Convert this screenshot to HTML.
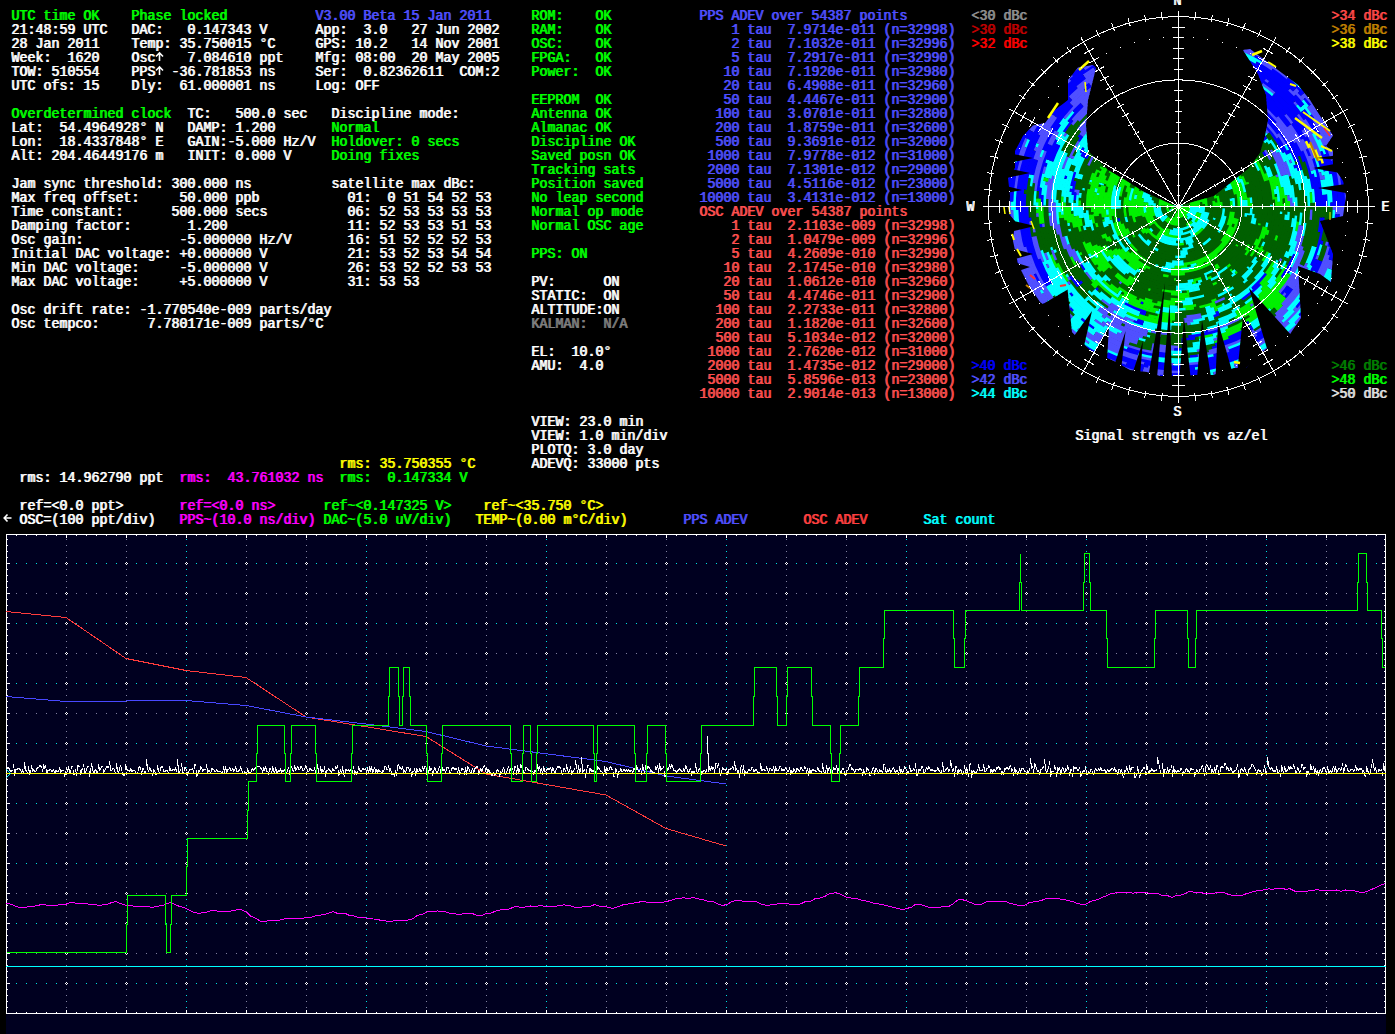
<!DOCTYPE html><html><head><meta charset="utf-8"><style>
html,body{margin:0;padding:0;background:#000;width:1395px;height:1034px;overflow:hidden}
.t{position:absolute;white-space:pre;font-family:"Liberation Mono",monospace;font-weight:normal;text-shadow:1px 0 0 currentColor;font-size:15px;line-height:14px;transform:scaleX(0.88889);transform-origin:0 0}
svg{position:absolute;left:0;top:0}
</style></head><body>
<svg width="1395" height="1034" viewBox="0 0 1395 1034" style="left:0;top:0">
<rect x="6" y="534" width="1380" height="500" fill="#000020"/>
<path fill="#8080a0" d="M16 593h1v1h-1zM26 593h1v1h-1zM36 593h1v1h-1zM46 593h1v1h-1zM56 593h1v1h-1zM76 593h1v1h-1zM86 593h1v1h-1zM96 593h1v1h-1zM106 593h1v1h-1zM116 593h1v1h-1zM136 593h1v1h-1zM146 593h1v1h-1zM156 593h1v1h-1zM166 593h1v1h-1zM176 593h1v1h-1zM196 593h1v1h-1zM206 593h1v1h-1zM216 593h1v1h-1zM226 593h1v1h-1zM236 593h1v1h-1zM256 593h1v1h-1zM266 593h1v1h-1zM276 593h1v1h-1zM286 593h1v1h-1zM296 593h1v1h-1zM316 593h1v1h-1zM326 593h1v1h-1zM336 593h1v1h-1zM346 593h1v1h-1zM356 593h1v1h-1zM376 593h1v1h-1zM386 593h1v1h-1zM396 593h1v1h-1zM406 593h1v1h-1zM416 593h1v1h-1zM436 593h1v1h-1zM446 593h1v1h-1zM456 593h1v1h-1zM466 593h1v1h-1zM476 593h1v1h-1zM496 593h1v1h-1zM506 593h1v1h-1zM516 593h1v1h-1zM526 593h1v1h-1zM536 593h1v1h-1zM556 593h1v1h-1zM566 593h1v1h-1zM576 593h1v1h-1zM586 593h1v1h-1zM596 593h1v1h-1zM616 593h1v1h-1zM626 593h1v1h-1zM636 593h1v1h-1zM646 593h1v1h-1zM656 593h1v1h-1zM676 593h1v1h-1zM686 593h1v1h-1zM696 593h1v1h-1zM706 593h1v1h-1zM716 593h1v1h-1zM736 593h1v1h-1zM746 593h1v1h-1zM756 593h1v1h-1zM766 593h1v1h-1zM776 593h1v1h-1zM796 593h1v1h-1zM806 593h1v1h-1zM816 593h1v1h-1zM826 593h1v1h-1zM836 593h1v1h-1zM856 593h1v1h-1zM866 593h1v1h-1zM876 593h1v1h-1zM886 593h1v1h-1zM896 593h1v1h-1zM916 593h1v1h-1zM926 593h1v1h-1zM936 593h1v1h-1zM946 593h1v1h-1zM956 593h1v1h-1zM976 593h1v1h-1zM986 593h1v1h-1zM996 593h1v1h-1zM1006 593h1v1h-1zM1016 593h1v1h-1zM1036 593h1v1h-1zM1046 593h1v1h-1zM1056 593h1v1h-1zM1066 593h1v1h-1zM1076 593h1v1h-1zM1096 593h1v1h-1zM1106 593h1v1h-1zM1116 593h1v1h-1zM1126 593h1v1h-1zM1136 593h1v1h-1zM1156 593h1v1h-1zM1166 593h1v1h-1zM1176 593h1v1h-1zM1186 593h1v1h-1zM1196 593h1v1h-1zM1216 593h1v1h-1zM1226 593h1v1h-1zM1236 593h1v1h-1zM1246 593h1v1h-1zM1256 593h1v1h-1zM1276 593h1v1h-1zM1286 593h1v1h-1zM1296 593h1v1h-1zM1306 593h1v1h-1zM1316 593h1v1h-1zM1336 593h1v1h-1zM1346 593h1v1h-1zM1356 593h1v1h-1zM1366 593h1v1h-1zM1376 593h1v1h-1zM16 653h1v1h-1zM26 653h1v1h-1zM36 653h1v1h-1zM46 653h1v1h-1zM56 653h1v1h-1zM76 653h1v1h-1zM86 653h1v1h-1zM96 653h1v1h-1zM106 653h1v1h-1zM116 653h1v1h-1zM136 653h1v1h-1zM146 653h1v1h-1zM156 653h1v1h-1zM166 653h1v1h-1zM176 653h1v1h-1zM196 653h1v1h-1zM206 653h1v1h-1zM216 653h1v1h-1zM226 653h1v1h-1zM236 653h1v1h-1zM256 653h1v1h-1zM266 653h1v1h-1zM276 653h1v1h-1zM286 653h1v1h-1zM296 653h1v1h-1zM316 653h1v1h-1zM326 653h1v1h-1zM336 653h1v1h-1zM346 653h1v1h-1zM356 653h1v1h-1zM376 653h1v1h-1zM386 653h1v1h-1zM396 653h1v1h-1zM406 653h1v1h-1zM416 653h1v1h-1zM436 653h1v1h-1zM446 653h1v1h-1zM456 653h1v1h-1zM466 653h1v1h-1zM476 653h1v1h-1zM496 653h1v1h-1zM506 653h1v1h-1zM516 653h1v1h-1zM526 653h1v1h-1zM536 653h1v1h-1zM556 653h1v1h-1zM566 653h1v1h-1zM576 653h1v1h-1zM586 653h1v1h-1zM596 653h1v1h-1zM616 653h1v1h-1zM626 653h1v1h-1zM636 653h1v1h-1zM646 653h1v1h-1zM656 653h1v1h-1zM676 653h1v1h-1zM686 653h1v1h-1zM696 653h1v1h-1zM706 653h1v1h-1zM716 653h1v1h-1zM736 653h1v1h-1zM746 653h1v1h-1zM756 653h1v1h-1zM766 653h1v1h-1zM776 653h1v1h-1zM796 653h1v1h-1zM806 653h1v1h-1zM816 653h1v1h-1zM826 653h1v1h-1zM836 653h1v1h-1zM856 653h1v1h-1zM866 653h1v1h-1zM876 653h1v1h-1zM886 653h1v1h-1zM896 653h1v1h-1zM916 653h1v1h-1zM926 653h1v1h-1zM936 653h1v1h-1zM946 653h1v1h-1zM956 653h1v1h-1zM976 653h1v1h-1zM986 653h1v1h-1zM996 653h1v1h-1zM1006 653h1v1h-1zM1016 653h1v1h-1zM1036 653h1v1h-1zM1046 653h1v1h-1zM1056 653h1v1h-1zM1066 653h1v1h-1zM1076 653h1v1h-1zM1096 653h1v1h-1zM1106 653h1v1h-1zM1116 653h1v1h-1zM1126 653h1v1h-1zM1136 653h1v1h-1zM1156 653h1v1h-1zM1166 653h1v1h-1zM1176 653h1v1h-1zM1186 653h1v1h-1zM1196 653h1v1h-1zM1216 653h1v1h-1zM1226 653h1v1h-1zM1236 653h1v1h-1zM1246 653h1v1h-1zM1256 653h1v1h-1zM1276 653h1v1h-1zM1286 653h1v1h-1zM1296 653h1v1h-1zM1306 653h1v1h-1zM1316 653h1v1h-1zM1336 653h1v1h-1zM1346 653h1v1h-1zM1356 653h1v1h-1zM1366 653h1v1h-1zM1376 653h1v1h-1zM16 713h1v1h-1zM26 713h1v1h-1zM36 713h1v1h-1zM46 713h1v1h-1zM56 713h1v1h-1zM76 713h1v1h-1zM86 713h1v1h-1zM96 713h1v1h-1zM106 713h1v1h-1zM116 713h1v1h-1zM136 713h1v1h-1zM146 713h1v1h-1zM156 713h1v1h-1zM166 713h1v1h-1zM176 713h1v1h-1zM196 713h1v1h-1zM206 713h1v1h-1zM216 713h1v1h-1zM226 713h1v1h-1zM236 713h1v1h-1zM256 713h1v1h-1zM266 713h1v1h-1zM276 713h1v1h-1zM286 713h1v1h-1zM296 713h1v1h-1zM316 713h1v1h-1zM326 713h1v1h-1zM336 713h1v1h-1zM346 713h1v1h-1zM356 713h1v1h-1zM376 713h1v1h-1zM386 713h1v1h-1zM396 713h1v1h-1zM406 713h1v1h-1zM416 713h1v1h-1zM436 713h1v1h-1zM446 713h1v1h-1zM456 713h1v1h-1zM466 713h1v1h-1zM476 713h1v1h-1zM496 713h1v1h-1zM506 713h1v1h-1zM516 713h1v1h-1zM526 713h1v1h-1zM536 713h1v1h-1zM556 713h1v1h-1zM566 713h1v1h-1zM576 713h1v1h-1zM586 713h1v1h-1zM596 713h1v1h-1zM616 713h1v1h-1zM626 713h1v1h-1zM636 713h1v1h-1zM646 713h1v1h-1zM656 713h1v1h-1zM676 713h1v1h-1zM686 713h1v1h-1zM696 713h1v1h-1zM706 713h1v1h-1zM716 713h1v1h-1zM736 713h1v1h-1zM746 713h1v1h-1zM756 713h1v1h-1zM766 713h1v1h-1zM776 713h1v1h-1zM796 713h1v1h-1zM806 713h1v1h-1zM816 713h1v1h-1zM826 713h1v1h-1zM836 713h1v1h-1zM856 713h1v1h-1zM866 713h1v1h-1zM876 713h1v1h-1zM886 713h1v1h-1zM896 713h1v1h-1zM916 713h1v1h-1zM926 713h1v1h-1zM936 713h1v1h-1zM946 713h1v1h-1zM956 713h1v1h-1zM976 713h1v1h-1zM986 713h1v1h-1zM996 713h1v1h-1zM1006 713h1v1h-1zM1016 713h1v1h-1zM1036 713h1v1h-1zM1046 713h1v1h-1zM1056 713h1v1h-1zM1066 713h1v1h-1zM1076 713h1v1h-1zM1096 713h1v1h-1zM1106 713h1v1h-1zM1116 713h1v1h-1zM1126 713h1v1h-1zM1136 713h1v1h-1zM1156 713h1v1h-1zM1166 713h1v1h-1zM1176 713h1v1h-1zM1186 713h1v1h-1zM1196 713h1v1h-1zM1216 713h1v1h-1zM1226 713h1v1h-1zM1236 713h1v1h-1zM1246 713h1v1h-1zM1256 713h1v1h-1zM1276 713h1v1h-1zM1286 713h1v1h-1zM1296 713h1v1h-1zM1306 713h1v1h-1zM1316 713h1v1h-1zM1336 713h1v1h-1zM1346 713h1v1h-1zM1356 713h1v1h-1zM1366 713h1v1h-1zM1376 713h1v1h-1zM16 773h1v1h-1zM26 773h1v1h-1zM36 773h1v1h-1zM46 773h1v1h-1zM56 773h1v1h-1zM76 773h1v1h-1zM86 773h1v1h-1zM96 773h1v1h-1zM106 773h1v1h-1zM116 773h1v1h-1zM136 773h1v1h-1zM146 773h1v1h-1zM156 773h1v1h-1zM166 773h1v1h-1zM176 773h1v1h-1zM196 773h1v1h-1zM206 773h1v1h-1zM216 773h1v1h-1zM226 773h1v1h-1zM236 773h1v1h-1zM256 773h1v1h-1zM266 773h1v1h-1zM276 773h1v1h-1zM286 773h1v1h-1zM296 773h1v1h-1zM316 773h1v1h-1zM326 773h1v1h-1zM336 773h1v1h-1zM346 773h1v1h-1zM356 773h1v1h-1zM376 773h1v1h-1zM386 773h1v1h-1zM396 773h1v1h-1zM406 773h1v1h-1zM416 773h1v1h-1zM436 773h1v1h-1zM446 773h1v1h-1zM456 773h1v1h-1zM466 773h1v1h-1zM476 773h1v1h-1zM496 773h1v1h-1zM506 773h1v1h-1zM516 773h1v1h-1zM526 773h1v1h-1zM536 773h1v1h-1zM556 773h1v1h-1zM566 773h1v1h-1zM576 773h1v1h-1zM586 773h1v1h-1zM596 773h1v1h-1zM616 773h1v1h-1zM626 773h1v1h-1zM636 773h1v1h-1zM646 773h1v1h-1zM656 773h1v1h-1zM676 773h1v1h-1zM686 773h1v1h-1zM696 773h1v1h-1zM706 773h1v1h-1zM716 773h1v1h-1zM736 773h1v1h-1zM746 773h1v1h-1zM756 773h1v1h-1zM766 773h1v1h-1zM776 773h1v1h-1zM796 773h1v1h-1zM806 773h1v1h-1zM816 773h1v1h-1zM826 773h1v1h-1zM836 773h1v1h-1zM856 773h1v1h-1zM866 773h1v1h-1zM876 773h1v1h-1zM886 773h1v1h-1zM896 773h1v1h-1zM916 773h1v1h-1zM926 773h1v1h-1zM936 773h1v1h-1zM946 773h1v1h-1zM956 773h1v1h-1zM976 773h1v1h-1zM986 773h1v1h-1zM996 773h1v1h-1zM1006 773h1v1h-1zM1016 773h1v1h-1zM1036 773h1v1h-1zM1046 773h1v1h-1zM1056 773h1v1h-1zM1066 773h1v1h-1zM1076 773h1v1h-1zM1096 773h1v1h-1zM1106 773h1v1h-1zM1116 773h1v1h-1zM1126 773h1v1h-1zM1136 773h1v1h-1zM1156 773h1v1h-1zM1166 773h1v1h-1zM1176 773h1v1h-1zM1186 773h1v1h-1zM1196 773h1v1h-1zM1216 773h1v1h-1zM1226 773h1v1h-1zM1236 773h1v1h-1zM1246 773h1v1h-1zM1256 773h1v1h-1zM1276 773h1v1h-1zM1286 773h1v1h-1zM1296 773h1v1h-1zM1306 773h1v1h-1zM1316 773h1v1h-1zM1336 773h1v1h-1zM1346 773h1v1h-1zM1356 773h1v1h-1zM1366 773h1v1h-1zM1376 773h1v1h-1zM16 833h1v1h-1zM26 833h1v1h-1zM36 833h1v1h-1zM46 833h1v1h-1zM56 833h1v1h-1zM76 833h1v1h-1zM86 833h1v1h-1zM96 833h1v1h-1zM106 833h1v1h-1zM116 833h1v1h-1zM136 833h1v1h-1zM146 833h1v1h-1zM156 833h1v1h-1zM166 833h1v1h-1zM176 833h1v1h-1zM196 833h1v1h-1zM206 833h1v1h-1zM216 833h1v1h-1zM226 833h1v1h-1zM236 833h1v1h-1zM256 833h1v1h-1zM266 833h1v1h-1zM276 833h1v1h-1zM286 833h1v1h-1zM296 833h1v1h-1zM316 833h1v1h-1zM326 833h1v1h-1zM336 833h1v1h-1zM346 833h1v1h-1zM356 833h1v1h-1zM376 833h1v1h-1zM386 833h1v1h-1zM396 833h1v1h-1zM406 833h1v1h-1zM416 833h1v1h-1zM436 833h1v1h-1zM446 833h1v1h-1zM456 833h1v1h-1zM466 833h1v1h-1zM476 833h1v1h-1zM496 833h1v1h-1zM506 833h1v1h-1zM516 833h1v1h-1zM526 833h1v1h-1zM536 833h1v1h-1zM556 833h1v1h-1zM566 833h1v1h-1zM576 833h1v1h-1zM586 833h1v1h-1zM596 833h1v1h-1zM616 833h1v1h-1zM626 833h1v1h-1zM636 833h1v1h-1zM646 833h1v1h-1zM656 833h1v1h-1zM676 833h1v1h-1zM686 833h1v1h-1zM696 833h1v1h-1zM706 833h1v1h-1zM716 833h1v1h-1zM736 833h1v1h-1zM746 833h1v1h-1zM756 833h1v1h-1zM766 833h1v1h-1zM776 833h1v1h-1zM796 833h1v1h-1zM806 833h1v1h-1zM816 833h1v1h-1zM826 833h1v1h-1zM836 833h1v1h-1zM856 833h1v1h-1zM866 833h1v1h-1zM876 833h1v1h-1zM886 833h1v1h-1zM896 833h1v1h-1zM916 833h1v1h-1zM926 833h1v1h-1zM936 833h1v1h-1zM946 833h1v1h-1zM956 833h1v1h-1zM976 833h1v1h-1zM986 833h1v1h-1zM996 833h1v1h-1zM1006 833h1v1h-1zM1016 833h1v1h-1zM1036 833h1v1h-1zM1046 833h1v1h-1zM1056 833h1v1h-1zM1066 833h1v1h-1zM1076 833h1v1h-1zM1096 833h1v1h-1zM1106 833h1v1h-1zM1116 833h1v1h-1zM1126 833h1v1h-1zM1136 833h1v1h-1zM1156 833h1v1h-1zM1166 833h1v1h-1zM1176 833h1v1h-1zM1186 833h1v1h-1zM1196 833h1v1h-1zM1216 833h1v1h-1zM1226 833h1v1h-1zM1236 833h1v1h-1zM1246 833h1v1h-1zM1256 833h1v1h-1zM1276 833h1v1h-1zM1286 833h1v1h-1zM1296 833h1v1h-1zM1306 833h1v1h-1zM1316 833h1v1h-1zM1336 833h1v1h-1zM1346 833h1v1h-1zM1356 833h1v1h-1zM1366 833h1v1h-1zM1376 833h1v1h-1zM16 893h1v1h-1zM26 893h1v1h-1zM36 893h1v1h-1zM46 893h1v1h-1zM56 893h1v1h-1zM76 893h1v1h-1zM86 893h1v1h-1zM96 893h1v1h-1zM106 893h1v1h-1zM116 893h1v1h-1zM136 893h1v1h-1zM146 893h1v1h-1zM156 893h1v1h-1zM166 893h1v1h-1zM176 893h1v1h-1zM196 893h1v1h-1zM206 893h1v1h-1zM216 893h1v1h-1zM226 893h1v1h-1zM236 893h1v1h-1zM256 893h1v1h-1zM266 893h1v1h-1zM276 893h1v1h-1zM286 893h1v1h-1zM296 893h1v1h-1zM316 893h1v1h-1zM326 893h1v1h-1zM336 893h1v1h-1zM346 893h1v1h-1zM356 893h1v1h-1zM376 893h1v1h-1zM386 893h1v1h-1zM396 893h1v1h-1zM406 893h1v1h-1zM416 893h1v1h-1zM436 893h1v1h-1zM446 893h1v1h-1zM456 893h1v1h-1zM466 893h1v1h-1zM476 893h1v1h-1zM496 893h1v1h-1zM506 893h1v1h-1zM516 893h1v1h-1zM526 893h1v1h-1zM536 893h1v1h-1zM556 893h1v1h-1zM566 893h1v1h-1zM576 893h1v1h-1zM586 893h1v1h-1zM596 893h1v1h-1zM616 893h1v1h-1zM626 893h1v1h-1zM636 893h1v1h-1zM646 893h1v1h-1zM656 893h1v1h-1zM676 893h1v1h-1zM686 893h1v1h-1zM696 893h1v1h-1zM706 893h1v1h-1zM716 893h1v1h-1zM736 893h1v1h-1zM746 893h1v1h-1zM756 893h1v1h-1zM766 893h1v1h-1zM776 893h1v1h-1zM796 893h1v1h-1zM806 893h1v1h-1zM816 893h1v1h-1zM826 893h1v1h-1zM836 893h1v1h-1zM856 893h1v1h-1zM866 893h1v1h-1zM876 893h1v1h-1zM886 893h1v1h-1zM896 893h1v1h-1zM916 893h1v1h-1zM926 893h1v1h-1zM936 893h1v1h-1zM946 893h1v1h-1zM956 893h1v1h-1zM976 893h1v1h-1zM986 893h1v1h-1zM996 893h1v1h-1zM1006 893h1v1h-1zM1016 893h1v1h-1zM1036 893h1v1h-1zM1046 893h1v1h-1zM1056 893h1v1h-1zM1066 893h1v1h-1zM1076 893h1v1h-1zM1096 893h1v1h-1zM1106 893h1v1h-1zM1116 893h1v1h-1zM1126 893h1v1h-1zM1136 893h1v1h-1zM1156 893h1v1h-1zM1166 893h1v1h-1zM1176 893h1v1h-1zM1186 893h1v1h-1zM1196 893h1v1h-1zM1216 893h1v1h-1zM1226 893h1v1h-1zM1236 893h1v1h-1zM1246 893h1v1h-1zM1256 893h1v1h-1zM1276 893h1v1h-1zM1286 893h1v1h-1zM1296 893h1v1h-1zM1306 893h1v1h-1zM1316 893h1v1h-1zM1336 893h1v1h-1zM1346 893h1v1h-1zM1356 893h1v1h-1zM1366 893h1v1h-1zM1376 893h1v1h-1zM16 953h1v1h-1zM26 953h1v1h-1zM36 953h1v1h-1zM46 953h1v1h-1zM56 953h1v1h-1zM76 953h1v1h-1zM86 953h1v1h-1zM96 953h1v1h-1zM106 953h1v1h-1zM116 953h1v1h-1zM136 953h1v1h-1zM146 953h1v1h-1zM156 953h1v1h-1zM166 953h1v1h-1zM176 953h1v1h-1zM196 953h1v1h-1zM206 953h1v1h-1zM216 953h1v1h-1zM226 953h1v1h-1zM236 953h1v1h-1zM256 953h1v1h-1zM266 953h1v1h-1zM276 953h1v1h-1zM286 953h1v1h-1zM296 953h1v1h-1zM316 953h1v1h-1zM326 953h1v1h-1zM336 953h1v1h-1zM346 953h1v1h-1zM356 953h1v1h-1zM376 953h1v1h-1zM386 953h1v1h-1zM396 953h1v1h-1zM406 953h1v1h-1zM416 953h1v1h-1zM436 953h1v1h-1zM446 953h1v1h-1zM456 953h1v1h-1zM466 953h1v1h-1zM476 953h1v1h-1zM496 953h1v1h-1zM506 953h1v1h-1zM516 953h1v1h-1zM526 953h1v1h-1zM536 953h1v1h-1zM556 953h1v1h-1zM566 953h1v1h-1zM576 953h1v1h-1zM586 953h1v1h-1zM596 953h1v1h-1zM616 953h1v1h-1zM626 953h1v1h-1zM636 953h1v1h-1zM646 953h1v1h-1zM656 953h1v1h-1zM676 953h1v1h-1zM686 953h1v1h-1zM696 953h1v1h-1zM706 953h1v1h-1zM716 953h1v1h-1zM736 953h1v1h-1zM746 953h1v1h-1zM756 953h1v1h-1zM766 953h1v1h-1zM776 953h1v1h-1zM796 953h1v1h-1zM806 953h1v1h-1zM816 953h1v1h-1zM826 953h1v1h-1zM836 953h1v1h-1zM856 953h1v1h-1zM866 953h1v1h-1zM876 953h1v1h-1zM886 953h1v1h-1zM896 953h1v1h-1zM916 953h1v1h-1zM926 953h1v1h-1zM936 953h1v1h-1zM946 953h1v1h-1zM956 953h1v1h-1zM976 953h1v1h-1zM986 953h1v1h-1zM996 953h1v1h-1zM1006 953h1v1h-1zM1016 953h1v1h-1zM1036 953h1v1h-1zM1046 953h1v1h-1zM1056 953h1v1h-1zM1066 953h1v1h-1zM1076 953h1v1h-1zM1096 953h1v1h-1zM1106 953h1v1h-1zM1116 953h1v1h-1zM1126 953h1v1h-1zM1136 953h1v1h-1zM1156 953h1v1h-1zM1166 953h1v1h-1zM1176 953h1v1h-1zM1186 953h1v1h-1zM1196 953h1v1h-1zM1216 953h1v1h-1zM1226 953h1v1h-1zM1236 953h1v1h-1zM1246 953h1v1h-1zM1256 953h1v1h-1zM1276 953h1v1h-1zM1286 953h1v1h-1zM1296 953h1v1h-1zM1306 953h1v1h-1zM1316 953h1v1h-1zM1336 953h1v1h-1zM1346 953h1v1h-1zM1356 953h1v1h-1zM1366 953h1v1h-1zM1376 953h1v1h-1zM66 539h1v1h-1zM66 545h1v1h-1zM66 551h1v1h-1zM66 557h1v1h-1zM66 569h1v1h-1zM66 575h1v1h-1zM66 581h1v1h-1zM66 587h1v1h-1zM66 599h1v1h-1zM66 605h1v1h-1zM66 611h1v1h-1zM66 617h1v1h-1zM66 629h1v1h-1zM66 635h1v1h-1zM66 641h1v1h-1zM66 647h1v1h-1zM66 659h1v1h-1zM66 665h1v1h-1zM66 671h1v1h-1zM66 677h1v1h-1zM66 689h1v1h-1zM66 695h1v1h-1zM66 701h1v1h-1zM66 707h1v1h-1zM66 719h1v1h-1zM66 725h1v1h-1zM66 731h1v1h-1zM66 737h1v1h-1zM66 749h1v1h-1zM66 755h1v1h-1zM66 761h1v1h-1zM66 767h1v1h-1zM66 779h1v1h-1zM66 785h1v1h-1zM66 791h1v1h-1zM66 797h1v1h-1zM66 809h1v1h-1zM66 815h1v1h-1zM66 821h1v1h-1zM66 827h1v1h-1zM66 839h1v1h-1zM66 845h1v1h-1zM66 851h1v1h-1zM66 857h1v1h-1zM66 869h1v1h-1zM66 875h1v1h-1zM66 881h1v1h-1zM66 887h1v1h-1zM66 899h1v1h-1zM66 905h1v1h-1zM66 911h1v1h-1zM66 917h1v1h-1zM66 929h1v1h-1zM66 935h1v1h-1zM66 941h1v1h-1zM66 947h1v1h-1zM66 959h1v1h-1zM66 965h1v1h-1zM66 971h1v1h-1zM66 977h1v1h-1zM66 989h1v1h-1zM66 995h1v1h-1zM66 1001h1v1h-1zM66 1007h1v1h-1zM126 539h1v1h-1zM126 545h1v1h-1zM126 551h1v1h-1zM126 557h1v1h-1zM126 569h1v1h-1zM126 575h1v1h-1zM126 581h1v1h-1zM126 587h1v1h-1zM126 599h1v1h-1zM126 605h1v1h-1zM126 611h1v1h-1zM126 617h1v1h-1zM126 629h1v1h-1zM126 635h1v1h-1zM126 641h1v1h-1zM126 647h1v1h-1zM126 659h1v1h-1zM126 665h1v1h-1zM126 671h1v1h-1zM126 677h1v1h-1zM126 689h1v1h-1zM126 695h1v1h-1zM126 701h1v1h-1zM126 707h1v1h-1zM126 719h1v1h-1zM126 725h1v1h-1zM126 731h1v1h-1zM126 737h1v1h-1zM126 749h1v1h-1zM126 755h1v1h-1zM126 761h1v1h-1zM126 767h1v1h-1zM126 779h1v1h-1zM126 785h1v1h-1zM126 791h1v1h-1zM126 797h1v1h-1zM126 809h1v1h-1zM126 815h1v1h-1zM126 821h1v1h-1zM126 827h1v1h-1zM126 839h1v1h-1zM126 845h1v1h-1zM126 851h1v1h-1zM126 857h1v1h-1zM126 869h1v1h-1zM126 875h1v1h-1zM126 881h1v1h-1zM126 887h1v1h-1zM126 899h1v1h-1zM126 905h1v1h-1zM126 911h1v1h-1zM126 917h1v1h-1zM126 929h1v1h-1zM126 935h1v1h-1zM126 941h1v1h-1zM126 947h1v1h-1zM126 959h1v1h-1zM126 965h1v1h-1zM126 971h1v1h-1zM126 977h1v1h-1zM126 989h1v1h-1zM126 995h1v1h-1zM126 1001h1v1h-1zM126 1007h1v1h-1zM246 539h1v1h-1zM246 545h1v1h-1zM246 551h1v1h-1zM246 557h1v1h-1zM246 569h1v1h-1zM246 575h1v1h-1zM246 581h1v1h-1zM246 587h1v1h-1zM246 599h1v1h-1zM246 605h1v1h-1zM246 611h1v1h-1zM246 617h1v1h-1zM246 629h1v1h-1zM246 635h1v1h-1zM246 641h1v1h-1zM246 647h1v1h-1zM246 659h1v1h-1zM246 665h1v1h-1zM246 671h1v1h-1zM246 677h1v1h-1zM246 689h1v1h-1zM246 695h1v1h-1zM246 701h1v1h-1zM246 707h1v1h-1zM246 719h1v1h-1zM246 725h1v1h-1zM246 731h1v1h-1zM246 737h1v1h-1zM246 749h1v1h-1zM246 755h1v1h-1zM246 761h1v1h-1zM246 767h1v1h-1zM246 779h1v1h-1zM246 785h1v1h-1zM246 791h1v1h-1zM246 797h1v1h-1zM246 809h1v1h-1zM246 815h1v1h-1zM246 821h1v1h-1zM246 827h1v1h-1zM246 839h1v1h-1zM246 845h1v1h-1zM246 851h1v1h-1zM246 857h1v1h-1zM246 869h1v1h-1zM246 875h1v1h-1zM246 881h1v1h-1zM246 887h1v1h-1zM246 899h1v1h-1zM246 905h1v1h-1zM246 911h1v1h-1zM246 917h1v1h-1zM246 929h1v1h-1zM246 935h1v1h-1zM246 941h1v1h-1zM246 947h1v1h-1zM246 959h1v1h-1zM246 965h1v1h-1zM246 971h1v1h-1zM246 977h1v1h-1zM246 989h1v1h-1zM246 995h1v1h-1zM246 1001h1v1h-1zM246 1007h1v1h-1zM306 539h1v1h-1zM306 545h1v1h-1zM306 551h1v1h-1zM306 557h1v1h-1zM306 569h1v1h-1zM306 575h1v1h-1zM306 581h1v1h-1zM306 587h1v1h-1zM306 599h1v1h-1zM306 605h1v1h-1zM306 611h1v1h-1zM306 617h1v1h-1zM306 629h1v1h-1zM306 635h1v1h-1zM306 641h1v1h-1zM306 647h1v1h-1zM306 659h1v1h-1zM306 665h1v1h-1zM306 671h1v1h-1zM306 677h1v1h-1zM306 689h1v1h-1zM306 695h1v1h-1zM306 701h1v1h-1zM306 707h1v1h-1zM306 719h1v1h-1zM306 725h1v1h-1zM306 731h1v1h-1zM306 737h1v1h-1zM306 749h1v1h-1zM306 755h1v1h-1zM306 761h1v1h-1zM306 767h1v1h-1zM306 779h1v1h-1zM306 785h1v1h-1zM306 791h1v1h-1zM306 797h1v1h-1zM306 809h1v1h-1zM306 815h1v1h-1zM306 821h1v1h-1zM306 827h1v1h-1zM306 839h1v1h-1zM306 845h1v1h-1zM306 851h1v1h-1zM306 857h1v1h-1zM306 869h1v1h-1zM306 875h1v1h-1zM306 881h1v1h-1zM306 887h1v1h-1zM306 899h1v1h-1zM306 905h1v1h-1zM306 911h1v1h-1zM306 917h1v1h-1zM306 929h1v1h-1zM306 935h1v1h-1zM306 941h1v1h-1zM306 947h1v1h-1zM306 959h1v1h-1zM306 965h1v1h-1zM306 971h1v1h-1zM306 977h1v1h-1zM306 989h1v1h-1zM306 995h1v1h-1zM306 1001h1v1h-1zM306 1007h1v1h-1zM426 539h1v1h-1zM426 545h1v1h-1zM426 551h1v1h-1zM426 557h1v1h-1zM426 569h1v1h-1zM426 575h1v1h-1zM426 581h1v1h-1zM426 587h1v1h-1zM426 599h1v1h-1zM426 605h1v1h-1zM426 611h1v1h-1zM426 617h1v1h-1zM426 629h1v1h-1zM426 635h1v1h-1zM426 641h1v1h-1zM426 647h1v1h-1zM426 659h1v1h-1zM426 665h1v1h-1zM426 671h1v1h-1zM426 677h1v1h-1zM426 689h1v1h-1zM426 695h1v1h-1zM426 701h1v1h-1zM426 707h1v1h-1zM426 719h1v1h-1zM426 725h1v1h-1zM426 731h1v1h-1zM426 737h1v1h-1zM426 749h1v1h-1zM426 755h1v1h-1zM426 761h1v1h-1zM426 767h1v1h-1zM426 779h1v1h-1zM426 785h1v1h-1zM426 791h1v1h-1zM426 797h1v1h-1zM426 809h1v1h-1zM426 815h1v1h-1zM426 821h1v1h-1zM426 827h1v1h-1zM426 839h1v1h-1zM426 845h1v1h-1zM426 851h1v1h-1zM426 857h1v1h-1zM426 869h1v1h-1zM426 875h1v1h-1zM426 881h1v1h-1zM426 887h1v1h-1zM426 899h1v1h-1zM426 905h1v1h-1zM426 911h1v1h-1zM426 917h1v1h-1zM426 929h1v1h-1zM426 935h1v1h-1zM426 941h1v1h-1zM426 947h1v1h-1zM426 959h1v1h-1zM426 965h1v1h-1zM426 971h1v1h-1zM426 977h1v1h-1zM426 989h1v1h-1zM426 995h1v1h-1zM426 1001h1v1h-1zM426 1007h1v1h-1zM486 539h1v1h-1zM486 545h1v1h-1zM486 551h1v1h-1zM486 557h1v1h-1zM486 569h1v1h-1zM486 575h1v1h-1zM486 581h1v1h-1zM486 587h1v1h-1zM486 599h1v1h-1zM486 605h1v1h-1zM486 611h1v1h-1zM486 617h1v1h-1zM486 629h1v1h-1zM486 635h1v1h-1zM486 641h1v1h-1zM486 647h1v1h-1zM486 659h1v1h-1zM486 665h1v1h-1zM486 671h1v1h-1zM486 677h1v1h-1zM486 689h1v1h-1zM486 695h1v1h-1zM486 701h1v1h-1zM486 707h1v1h-1zM486 719h1v1h-1zM486 725h1v1h-1zM486 731h1v1h-1zM486 737h1v1h-1zM486 749h1v1h-1zM486 755h1v1h-1zM486 761h1v1h-1zM486 767h1v1h-1zM486 779h1v1h-1zM486 785h1v1h-1zM486 791h1v1h-1zM486 797h1v1h-1zM486 809h1v1h-1zM486 815h1v1h-1zM486 821h1v1h-1zM486 827h1v1h-1zM486 839h1v1h-1zM486 845h1v1h-1zM486 851h1v1h-1zM486 857h1v1h-1zM486 869h1v1h-1zM486 875h1v1h-1zM486 881h1v1h-1zM486 887h1v1h-1zM486 899h1v1h-1zM486 905h1v1h-1zM486 911h1v1h-1zM486 917h1v1h-1zM486 929h1v1h-1zM486 935h1v1h-1zM486 941h1v1h-1zM486 947h1v1h-1zM486 959h1v1h-1zM486 965h1v1h-1zM486 971h1v1h-1zM486 977h1v1h-1zM486 989h1v1h-1zM486 995h1v1h-1zM486 1001h1v1h-1zM486 1007h1v1h-1zM606 539h1v1h-1zM606 545h1v1h-1zM606 551h1v1h-1zM606 557h1v1h-1zM606 569h1v1h-1zM606 575h1v1h-1zM606 581h1v1h-1zM606 587h1v1h-1zM606 599h1v1h-1zM606 605h1v1h-1zM606 611h1v1h-1zM606 617h1v1h-1zM606 629h1v1h-1zM606 635h1v1h-1zM606 641h1v1h-1zM606 647h1v1h-1zM606 659h1v1h-1zM606 665h1v1h-1zM606 671h1v1h-1zM606 677h1v1h-1zM606 689h1v1h-1zM606 695h1v1h-1zM606 701h1v1h-1zM606 707h1v1h-1zM606 719h1v1h-1zM606 725h1v1h-1zM606 731h1v1h-1zM606 737h1v1h-1zM606 749h1v1h-1zM606 755h1v1h-1zM606 761h1v1h-1zM606 767h1v1h-1zM606 779h1v1h-1zM606 785h1v1h-1zM606 791h1v1h-1zM606 797h1v1h-1zM606 809h1v1h-1zM606 815h1v1h-1zM606 821h1v1h-1zM606 827h1v1h-1zM606 839h1v1h-1zM606 845h1v1h-1zM606 851h1v1h-1zM606 857h1v1h-1zM606 869h1v1h-1zM606 875h1v1h-1zM606 881h1v1h-1zM606 887h1v1h-1zM606 899h1v1h-1zM606 905h1v1h-1zM606 911h1v1h-1zM606 917h1v1h-1zM606 929h1v1h-1zM606 935h1v1h-1zM606 941h1v1h-1zM606 947h1v1h-1zM606 959h1v1h-1zM606 965h1v1h-1zM606 971h1v1h-1zM606 977h1v1h-1zM606 989h1v1h-1zM606 995h1v1h-1zM606 1001h1v1h-1zM606 1007h1v1h-1zM666 539h1v1h-1zM666 545h1v1h-1zM666 551h1v1h-1zM666 557h1v1h-1zM666 569h1v1h-1zM666 575h1v1h-1zM666 581h1v1h-1zM666 587h1v1h-1zM666 599h1v1h-1zM666 605h1v1h-1zM666 611h1v1h-1zM666 617h1v1h-1zM666 629h1v1h-1zM666 635h1v1h-1zM666 641h1v1h-1zM666 647h1v1h-1zM666 659h1v1h-1zM666 665h1v1h-1zM666 671h1v1h-1zM666 677h1v1h-1zM666 689h1v1h-1zM666 695h1v1h-1zM666 701h1v1h-1zM666 707h1v1h-1zM666 719h1v1h-1zM666 725h1v1h-1zM666 731h1v1h-1zM666 737h1v1h-1zM666 749h1v1h-1zM666 755h1v1h-1zM666 761h1v1h-1zM666 767h1v1h-1zM666 779h1v1h-1zM666 785h1v1h-1zM666 791h1v1h-1zM666 797h1v1h-1zM666 809h1v1h-1zM666 815h1v1h-1zM666 821h1v1h-1zM666 827h1v1h-1zM666 839h1v1h-1zM666 845h1v1h-1zM666 851h1v1h-1zM666 857h1v1h-1zM666 869h1v1h-1zM666 875h1v1h-1zM666 881h1v1h-1zM666 887h1v1h-1zM666 899h1v1h-1zM666 905h1v1h-1zM666 911h1v1h-1zM666 917h1v1h-1zM666 929h1v1h-1zM666 935h1v1h-1zM666 941h1v1h-1zM666 947h1v1h-1zM666 959h1v1h-1zM666 965h1v1h-1zM666 971h1v1h-1zM666 977h1v1h-1zM666 989h1v1h-1zM666 995h1v1h-1zM666 1001h1v1h-1zM666 1007h1v1h-1zM786 539h1v1h-1zM786 545h1v1h-1zM786 551h1v1h-1zM786 557h1v1h-1zM786 569h1v1h-1zM786 575h1v1h-1zM786 581h1v1h-1zM786 587h1v1h-1zM786 599h1v1h-1zM786 605h1v1h-1zM786 611h1v1h-1zM786 617h1v1h-1zM786 629h1v1h-1zM786 635h1v1h-1zM786 641h1v1h-1zM786 647h1v1h-1zM786 659h1v1h-1zM786 665h1v1h-1zM786 671h1v1h-1zM786 677h1v1h-1zM786 689h1v1h-1zM786 695h1v1h-1zM786 701h1v1h-1zM786 707h1v1h-1zM786 719h1v1h-1zM786 725h1v1h-1zM786 731h1v1h-1zM786 737h1v1h-1zM786 749h1v1h-1zM786 755h1v1h-1zM786 761h1v1h-1zM786 767h1v1h-1zM786 779h1v1h-1zM786 785h1v1h-1zM786 791h1v1h-1zM786 797h1v1h-1zM786 809h1v1h-1zM786 815h1v1h-1zM786 821h1v1h-1zM786 827h1v1h-1zM786 839h1v1h-1zM786 845h1v1h-1zM786 851h1v1h-1zM786 857h1v1h-1zM786 869h1v1h-1zM786 875h1v1h-1zM786 881h1v1h-1zM786 887h1v1h-1zM786 899h1v1h-1zM786 905h1v1h-1zM786 911h1v1h-1zM786 917h1v1h-1zM786 929h1v1h-1zM786 935h1v1h-1zM786 941h1v1h-1zM786 947h1v1h-1zM786 959h1v1h-1zM786 965h1v1h-1zM786 971h1v1h-1zM786 977h1v1h-1zM786 989h1v1h-1zM786 995h1v1h-1zM786 1001h1v1h-1zM786 1007h1v1h-1zM846 539h1v1h-1zM846 545h1v1h-1zM846 551h1v1h-1zM846 557h1v1h-1zM846 569h1v1h-1zM846 575h1v1h-1zM846 581h1v1h-1zM846 587h1v1h-1zM846 599h1v1h-1zM846 605h1v1h-1zM846 611h1v1h-1zM846 617h1v1h-1zM846 629h1v1h-1zM846 635h1v1h-1zM846 641h1v1h-1zM846 647h1v1h-1zM846 659h1v1h-1zM846 665h1v1h-1zM846 671h1v1h-1zM846 677h1v1h-1zM846 689h1v1h-1zM846 695h1v1h-1zM846 701h1v1h-1zM846 707h1v1h-1zM846 719h1v1h-1zM846 725h1v1h-1zM846 731h1v1h-1zM846 737h1v1h-1zM846 749h1v1h-1zM846 755h1v1h-1zM846 761h1v1h-1zM846 767h1v1h-1zM846 779h1v1h-1zM846 785h1v1h-1zM846 791h1v1h-1zM846 797h1v1h-1zM846 809h1v1h-1zM846 815h1v1h-1zM846 821h1v1h-1zM846 827h1v1h-1zM846 839h1v1h-1zM846 845h1v1h-1zM846 851h1v1h-1zM846 857h1v1h-1zM846 869h1v1h-1zM846 875h1v1h-1zM846 881h1v1h-1zM846 887h1v1h-1zM846 899h1v1h-1zM846 905h1v1h-1zM846 911h1v1h-1zM846 917h1v1h-1zM846 929h1v1h-1zM846 935h1v1h-1zM846 941h1v1h-1zM846 947h1v1h-1zM846 959h1v1h-1zM846 965h1v1h-1zM846 971h1v1h-1zM846 977h1v1h-1zM846 989h1v1h-1zM846 995h1v1h-1zM846 1001h1v1h-1zM846 1007h1v1h-1zM966 539h1v1h-1zM966 545h1v1h-1zM966 551h1v1h-1zM966 557h1v1h-1zM966 569h1v1h-1zM966 575h1v1h-1zM966 581h1v1h-1zM966 587h1v1h-1zM966 599h1v1h-1zM966 605h1v1h-1zM966 611h1v1h-1zM966 617h1v1h-1zM966 629h1v1h-1zM966 635h1v1h-1zM966 641h1v1h-1zM966 647h1v1h-1zM966 659h1v1h-1zM966 665h1v1h-1zM966 671h1v1h-1zM966 677h1v1h-1zM966 689h1v1h-1zM966 695h1v1h-1zM966 701h1v1h-1zM966 707h1v1h-1zM966 719h1v1h-1zM966 725h1v1h-1zM966 731h1v1h-1zM966 737h1v1h-1zM966 749h1v1h-1zM966 755h1v1h-1zM966 761h1v1h-1zM966 767h1v1h-1zM966 779h1v1h-1zM966 785h1v1h-1zM966 791h1v1h-1zM966 797h1v1h-1zM966 809h1v1h-1zM966 815h1v1h-1zM966 821h1v1h-1zM966 827h1v1h-1zM966 839h1v1h-1zM966 845h1v1h-1zM966 851h1v1h-1zM966 857h1v1h-1zM966 869h1v1h-1zM966 875h1v1h-1zM966 881h1v1h-1zM966 887h1v1h-1zM966 899h1v1h-1zM966 905h1v1h-1zM966 911h1v1h-1zM966 917h1v1h-1zM966 929h1v1h-1zM966 935h1v1h-1zM966 941h1v1h-1zM966 947h1v1h-1zM966 959h1v1h-1zM966 965h1v1h-1zM966 971h1v1h-1zM966 977h1v1h-1zM966 989h1v1h-1zM966 995h1v1h-1zM966 1001h1v1h-1zM966 1007h1v1h-1zM1026 539h1v1h-1zM1026 545h1v1h-1zM1026 551h1v1h-1zM1026 557h1v1h-1zM1026 569h1v1h-1zM1026 575h1v1h-1zM1026 581h1v1h-1zM1026 587h1v1h-1zM1026 599h1v1h-1zM1026 605h1v1h-1zM1026 611h1v1h-1zM1026 617h1v1h-1zM1026 629h1v1h-1zM1026 635h1v1h-1zM1026 641h1v1h-1zM1026 647h1v1h-1zM1026 659h1v1h-1zM1026 665h1v1h-1zM1026 671h1v1h-1zM1026 677h1v1h-1zM1026 689h1v1h-1zM1026 695h1v1h-1zM1026 701h1v1h-1zM1026 707h1v1h-1zM1026 719h1v1h-1zM1026 725h1v1h-1zM1026 731h1v1h-1zM1026 737h1v1h-1zM1026 749h1v1h-1zM1026 755h1v1h-1zM1026 761h1v1h-1zM1026 767h1v1h-1zM1026 779h1v1h-1zM1026 785h1v1h-1zM1026 791h1v1h-1zM1026 797h1v1h-1zM1026 809h1v1h-1zM1026 815h1v1h-1zM1026 821h1v1h-1zM1026 827h1v1h-1zM1026 839h1v1h-1zM1026 845h1v1h-1zM1026 851h1v1h-1zM1026 857h1v1h-1zM1026 869h1v1h-1zM1026 875h1v1h-1zM1026 881h1v1h-1zM1026 887h1v1h-1zM1026 899h1v1h-1zM1026 905h1v1h-1zM1026 911h1v1h-1zM1026 917h1v1h-1zM1026 929h1v1h-1zM1026 935h1v1h-1zM1026 941h1v1h-1zM1026 947h1v1h-1zM1026 959h1v1h-1zM1026 965h1v1h-1zM1026 971h1v1h-1zM1026 977h1v1h-1zM1026 989h1v1h-1zM1026 995h1v1h-1zM1026 1001h1v1h-1zM1026 1007h1v1h-1zM1146 539h1v1h-1zM1146 545h1v1h-1zM1146 551h1v1h-1zM1146 557h1v1h-1zM1146 569h1v1h-1zM1146 575h1v1h-1zM1146 581h1v1h-1zM1146 587h1v1h-1zM1146 599h1v1h-1zM1146 605h1v1h-1zM1146 611h1v1h-1zM1146 617h1v1h-1zM1146 629h1v1h-1zM1146 635h1v1h-1zM1146 641h1v1h-1zM1146 647h1v1h-1zM1146 659h1v1h-1zM1146 665h1v1h-1zM1146 671h1v1h-1zM1146 677h1v1h-1zM1146 689h1v1h-1zM1146 695h1v1h-1zM1146 701h1v1h-1zM1146 707h1v1h-1zM1146 719h1v1h-1zM1146 725h1v1h-1zM1146 731h1v1h-1zM1146 737h1v1h-1zM1146 749h1v1h-1zM1146 755h1v1h-1zM1146 761h1v1h-1zM1146 767h1v1h-1zM1146 779h1v1h-1zM1146 785h1v1h-1zM1146 791h1v1h-1zM1146 797h1v1h-1zM1146 809h1v1h-1zM1146 815h1v1h-1zM1146 821h1v1h-1zM1146 827h1v1h-1zM1146 839h1v1h-1zM1146 845h1v1h-1zM1146 851h1v1h-1zM1146 857h1v1h-1zM1146 869h1v1h-1zM1146 875h1v1h-1zM1146 881h1v1h-1zM1146 887h1v1h-1zM1146 899h1v1h-1zM1146 905h1v1h-1zM1146 911h1v1h-1zM1146 917h1v1h-1zM1146 929h1v1h-1zM1146 935h1v1h-1zM1146 941h1v1h-1zM1146 947h1v1h-1zM1146 959h1v1h-1zM1146 965h1v1h-1zM1146 971h1v1h-1zM1146 977h1v1h-1zM1146 989h1v1h-1zM1146 995h1v1h-1zM1146 1001h1v1h-1zM1146 1007h1v1h-1zM1206 539h1v1h-1zM1206 545h1v1h-1zM1206 551h1v1h-1zM1206 557h1v1h-1zM1206 569h1v1h-1zM1206 575h1v1h-1zM1206 581h1v1h-1zM1206 587h1v1h-1zM1206 599h1v1h-1zM1206 605h1v1h-1zM1206 611h1v1h-1zM1206 617h1v1h-1zM1206 629h1v1h-1zM1206 635h1v1h-1zM1206 641h1v1h-1zM1206 647h1v1h-1zM1206 659h1v1h-1zM1206 665h1v1h-1zM1206 671h1v1h-1zM1206 677h1v1h-1zM1206 689h1v1h-1zM1206 695h1v1h-1zM1206 701h1v1h-1zM1206 707h1v1h-1zM1206 719h1v1h-1zM1206 725h1v1h-1zM1206 731h1v1h-1zM1206 737h1v1h-1zM1206 749h1v1h-1zM1206 755h1v1h-1zM1206 761h1v1h-1zM1206 767h1v1h-1zM1206 779h1v1h-1zM1206 785h1v1h-1zM1206 791h1v1h-1zM1206 797h1v1h-1zM1206 809h1v1h-1zM1206 815h1v1h-1zM1206 821h1v1h-1zM1206 827h1v1h-1zM1206 839h1v1h-1zM1206 845h1v1h-1zM1206 851h1v1h-1zM1206 857h1v1h-1zM1206 869h1v1h-1zM1206 875h1v1h-1zM1206 881h1v1h-1zM1206 887h1v1h-1zM1206 899h1v1h-1zM1206 905h1v1h-1zM1206 911h1v1h-1zM1206 917h1v1h-1zM1206 929h1v1h-1zM1206 935h1v1h-1zM1206 941h1v1h-1zM1206 947h1v1h-1zM1206 959h1v1h-1zM1206 965h1v1h-1zM1206 971h1v1h-1zM1206 977h1v1h-1zM1206 989h1v1h-1zM1206 995h1v1h-1zM1206 1001h1v1h-1zM1206 1007h1v1h-1zM1326 539h1v1h-1zM1326 545h1v1h-1zM1326 551h1v1h-1zM1326 557h1v1h-1zM1326 569h1v1h-1zM1326 575h1v1h-1zM1326 581h1v1h-1zM1326 587h1v1h-1zM1326 599h1v1h-1zM1326 605h1v1h-1zM1326 611h1v1h-1zM1326 617h1v1h-1zM1326 629h1v1h-1zM1326 635h1v1h-1zM1326 641h1v1h-1zM1326 647h1v1h-1zM1326 659h1v1h-1zM1326 665h1v1h-1zM1326 671h1v1h-1zM1326 677h1v1h-1zM1326 689h1v1h-1zM1326 695h1v1h-1zM1326 701h1v1h-1zM1326 707h1v1h-1zM1326 719h1v1h-1zM1326 725h1v1h-1zM1326 731h1v1h-1zM1326 737h1v1h-1zM1326 749h1v1h-1zM1326 755h1v1h-1zM1326 761h1v1h-1zM1326 767h1v1h-1zM1326 779h1v1h-1zM1326 785h1v1h-1zM1326 791h1v1h-1zM1326 797h1v1h-1zM1326 809h1v1h-1zM1326 815h1v1h-1zM1326 821h1v1h-1zM1326 827h1v1h-1zM1326 839h1v1h-1zM1326 845h1v1h-1zM1326 851h1v1h-1zM1326 857h1v1h-1zM1326 869h1v1h-1zM1326 875h1v1h-1zM1326 881h1v1h-1zM1326 887h1v1h-1zM1326 899h1v1h-1zM1326 905h1v1h-1zM1326 911h1v1h-1zM1326 917h1v1h-1zM1326 929h1v1h-1zM1326 935h1v1h-1zM1326 941h1v1h-1zM1326 947h1v1h-1zM1326 959h1v1h-1zM1326 965h1v1h-1zM1326 971h1v1h-1zM1326 977h1v1h-1zM1326 989h1v1h-1zM1326 995h1v1h-1zM1326 1001h1v1h-1zM1326 1007h1v1h-1z"/>
<path fill="#00e0e0" d="M16 563h1v1h-1zM26 563h1v1h-1zM36 563h1v1h-1zM46 563h1v1h-1zM56 563h1v1h-1zM76 563h1v1h-1zM86 563h1v1h-1zM96 563h1v1h-1zM106 563h1v1h-1zM116 563h1v1h-1zM136 563h1v1h-1zM146 563h1v1h-1zM156 563h1v1h-1zM166 563h1v1h-1zM176 563h1v1h-1zM196 563h1v1h-1zM206 563h1v1h-1zM216 563h1v1h-1zM226 563h1v1h-1zM236 563h1v1h-1zM256 563h1v1h-1zM266 563h1v1h-1zM276 563h1v1h-1zM286 563h1v1h-1zM296 563h1v1h-1zM316 563h1v1h-1zM326 563h1v1h-1zM336 563h1v1h-1zM346 563h1v1h-1zM356 563h1v1h-1zM376 563h1v1h-1zM386 563h1v1h-1zM396 563h1v1h-1zM406 563h1v1h-1zM416 563h1v1h-1zM436 563h1v1h-1zM446 563h1v1h-1zM456 563h1v1h-1zM466 563h1v1h-1zM476 563h1v1h-1zM496 563h1v1h-1zM506 563h1v1h-1zM516 563h1v1h-1zM526 563h1v1h-1zM536 563h1v1h-1zM556 563h1v1h-1zM566 563h1v1h-1zM576 563h1v1h-1zM586 563h1v1h-1zM596 563h1v1h-1zM616 563h1v1h-1zM626 563h1v1h-1zM636 563h1v1h-1zM646 563h1v1h-1zM656 563h1v1h-1zM676 563h1v1h-1zM686 563h1v1h-1zM696 563h1v1h-1zM706 563h1v1h-1zM716 563h1v1h-1zM736 563h1v1h-1zM746 563h1v1h-1zM756 563h1v1h-1zM766 563h1v1h-1zM776 563h1v1h-1zM796 563h1v1h-1zM806 563h1v1h-1zM816 563h1v1h-1zM826 563h1v1h-1zM836 563h1v1h-1zM856 563h1v1h-1zM866 563h1v1h-1zM876 563h1v1h-1zM886 563h1v1h-1zM896 563h1v1h-1zM916 563h1v1h-1zM926 563h1v1h-1zM936 563h1v1h-1zM946 563h1v1h-1zM956 563h1v1h-1zM976 563h1v1h-1zM986 563h1v1h-1zM996 563h1v1h-1zM1006 563h1v1h-1zM1016 563h1v1h-1zM1036 563h1v1h-1zM1046 563h1v1h-1zM1056 563h1v1h-1zM1066 563h1v1h-1zM1076 563h1v1h-1zM1096 563h1v1h-1zM1106 563h1v1h-1zM1116 563h1v1h-1zM1126 563h1v1h-1zM1136 563h1v1h-1zM1156 563h1v1h-1zM1166 563h1v1h-1zM1176 563h1v1h-1zM1186 563h1v1h-1zM1196 563h1v1h-1zM1216 563h1v1h-1zM1226 563h1v1h-1zM1236 563h1v1h-1zM1246 563h1v1h-1zM1256 563h1v1h-1zM1276 563h1v1h-1zM1286 563h1v1h-1zM1296 563h1v1h-1zM1306 563h1v1h-1zM1316 563h1v1h-1zM1336 563h1v1h-1zM1346 563h1v1h-1zM1356 563h1v1h-1zM1366 563h1v1h-1zM1376 563h1v1h-1zM16 623h1v1h-1zM26 623h1v1h-1zM36 623h1v1h-1zM46 623h1v1h-1zM56 623h1v1h-1zM76 623h1v1h-1zM86 623h1v1h-1zM96 623h1v1h-1zM106 623h1v1h-1zM116 623h1v1h-1zM136 623h1v1h-1zM146 623h1v1h-1zM156 623h1v1h-1zM166 623h1v1h-1zM176 623h1v1h-1zM196 623h1v1h-1zM206 623h1v1h-1zM216 623h1v1h-1zM226 623h1v1h-1zM236 623h1v1h-1zM256 623h1v1h-1zM266 623h1v1h-1zM276 623h1v1h-1zM286 623h1v1h-1zM296 623h1v1h-1zM316 623h1v1h-1zM326 623h1v1h-1zM336 623h1v1h-1zM346 623h1v1h-1zM356 623h1v1h-1zM376 623h1v1h-1zM386 623h1v1h-1zM396 623h1v1h-1zM406 623h1v1h-1zM416 623h1v1h-1zM436 623h1v1h-1zM446 623h1v1h-1zM456 623h1v1h-1zM466 623h1v1h-1zM476 623h1v1h-1zM496 623h1v1h-1zM506 623h1v1h-1zM516 623h1v1h-1zM526 623h1v1h-1zM536 623h1v1h-1zM556 623h1v1h-1zM566 623h1v1h-1zM576 623h1v1h-1zM586 623h1v1h-1zM596 623h1v1h-1zM616 623h1v1h-1zM626 623h1v1h-1zM636 623h1v1h-1zM646 623h1v1h-1zM656 623h1v1h-1zM676 623h1v1h-1zM686 623h1v1h-1zM696 623h1v1h-1zM706 623h1v1h-1zM716 623h1v1h-1zM736 623h1v1h-1zM746 623h1v1h-1zM756 623h1v1h-1zM766 623h1v1h-1zM776 623h1v1h-1zM796 623h1v1h-1zM806 623h1v1h-1zM816 623h1v1h-1zM826 623h1v1h-1zM836 623h1v1h-1zM856 623h1v1h-1zM866 623h1v1h-1zM876 623h1v1h-1zM886 623h1v1h-1zM896 623h1v1h-1zM916 623h1v1h-1zM926 623h1v1h-1zM936 623h1v1h-1zM946 623h1v1h-1zM956 623h1v1h-1zM976 623h1v1h-1zM986 623h1v1h-1zM996 623h1v1h-1zM1006 623h1v1h-1zM1016 623h1v1h-1zM1036 623h1v1h-1zM1046 623h1v1h-1zM1056 623h1v1h-1zM1066 623h1v1h-1zM1076 623h1v1h-1zM1096 623h1v1h-1zM1106 623h1v1h-1zM1116 623h1v1h-1zM1126 623h1v1h-1zM1136 623h1v1h-1zM1156 623h1v1h-1zM1166 623h1v1h-1zM1176 623h1v1h-1zM1186 623h1v1h-1zM1196 623h1v1h-1zM1216 623h1v1h-1zM1226 623h1v1h-1zM1236 623h1v1h-1zM1246 623h1v1h-1zM1256 623h1v1h-1zM1276 623h1v1h-1zM1286 623h1v1h-1zM1296 623h1v1h-1zM1306 623h1v1h-1zM1316 623h1v1h-1zM1336 623h1v1h-1zM1346 623h1v1h-1zM1356 623h1v1h-1zM1366 623h1v1h-1zM1376 623h1v1h-1zM16 683h1v1h-1zM26 683h1v1h-1zM36 683h1v1h-1zM46 683h1v1h-1zM56 683h1v1h-1zM76 683h1v1h-1zM86 683h1v1h-1zM96 683h1v1h-1zM106 683h1v1h-1zM116 683h1v1h-1zM136 683h1v1h-1zM146 683h1v1h-1zM156 683h1v1h-1zM166 683h1v1h-1zM176 683h1v1h-1zM196 683h1v1h-1zM206 683h1v1h-1zM216 683h1v1h-1zM226 683h1v1h-1zM236 683h1v1h-1zM256 683h1v1h-1zM266 683h1v1h-1zM276 683h1v1h-1zM286 683h1v1h-1zM296 683h1v1h-1zM316 683h1v1h-1zM326 683h1v1h-1zM336 683h1v1h-1zM346 683h1v1h-1zM356 683h1v1h-1zM376 683h1v1h-1zM386 683h1v1h-1zM396 683h1v1h-1zM406 683h1v1h-1zM416 683h1v1h-1zM436 683h1v1h-1zM446 683h1v1h-1zM456 683h1v1h-1zM466 683h1v1h-1zM476 683h1v1h-1zM496 683h1v1h-1zM506 683h1v1h-1zM516 683h1v1h-1zM526 683h1v1h-1zM536 683h1v1h-1zM556 683h1v1h-1zM566 683h1v1h-1zM576 683h1v1h-1zM586 683h1v1h-1zM596 683h1v1h-1zM616 683h1v1h-1zM626 683h1v1h-1zM636 683h1v1h-1zM646 683h1v1h-1zM656 683h1v1h-1zM676 683h1v1h-1zM686 683h1v1h-1zM696 683h1v1h-1zM706 683h1v1h-1zM716 683h1v1h-1zM736 683h1v1h-1zM746 683h1v1h-1zM756 683h1v1h-1zM766 683h1v1h-1zM776 683h1v1h-1zM796 683h1v1h-1zM806 683h1v1h-1zM816 683h1v1h-1zM826 683h1v1h-1zM836 683h1v1h-1zM856 683h1v1h-1zM866 683h1v1h-1zM876 683h1v1h-1zM886 683h1v1h-1zM896 683h1v1h-1zM916 683h1v1h-1zM926 683h1v1h-1zM936 683h1v1h-1zM946 683h1v1h-1zM956 683h1v1h-1zM976 683h1v1h-1zM986 683h1v1h-1zM996 683h1v1h-1zM1006 683h1v1h-1zM1016 683h1v1h-1zM1036 683h1v1h-1zM1046 683h1v1h-1zM1056 683h1v1h-1zM1066 683h1v1h-1zM1076 683h1v1h-1zM1096 683h1v1h-1zM1106 683h1v1h-1zM1116 683h1v1h-1zM1126 683h1v1h-1zM1136 683h1v1h-1zM1156 683h1v1h-1zM1166 683h1v1h-1zM1176 683h1v1h-1zM1186 683h1v1h-1zM1196 683h1v1h-1zM1216 683h1v1h-1zM1226 683h1v1h-1zM1236 683h1v1h-1zM1246 683h1v1h-1zM1256 683h1v1h-1zM1276 683h1v1h-1zM1286 683h1v1h-1zM1296 683h1v1h-1zM1306 683h1v1h-1zM1316 683h1v1h-1zM1336 683h1v1h-1zM1346 683h1v1h-1zM1356 683h1v1h-1zM1366 683h1v1h-1zM1376 683h1v1h-1zM16 743h1v1h-1zM26 743h1v1h-1zM36 743h1v1h-1zM46 743h1v1h-1zM56 743h1v1h-1zM76 743h1v1h-1zM86 743h1v1h-1zM96 743h1v1h-1zM106 743h1v1h-1zM116 743h1v1h-1zM136 743h1v1h-1zM146 743h1v1h-1zM156 743h1v1h-1zM166 743h1v1h-1zM176 743h1v1h-1zM196 743h1v1h-1zM206 743h1v1h-1zM216 743h1v1h-1zM226 743h1v1h-1zM236 743h1v1h-1zM256 743h1v1h-1zM266 743h1v1h-1zM276 743h1v1h-1zM286 743h1v1h-1zM296 743h1v1h-1zM316 743h1v1h-1zM326 743h1v1h-1zM336 743h1v1h-1zM346 743h1v1h-1zM356 743h1v1h-1zM376 743h1v1h-1zM386 743h1v1h-1zM396 743h1v1h-1zM406 743h1v1h-1zM416 743h1v1h-1zM436 743h1v1h-1zM446 743h1v1h-1zM456 743h1v1h-1zM466 743h1v1h-1zM476 743h1v1h-1zM496 743h1v1h-1zM506 743h1v1h-1zM516 743h1v1h-1zM526 743h1v1h-1zM536 743h1v1h-1zM556 743h1v1h-1zM566 743h1v1h-1zM576 743h1v1h-1zM586 743h1v1h-1zM596 743h1v1h-1zM616 743h1v1h-1zM626 743h1v1h-1zM636 743h1v1h-1zM646 743h1v1h-1zM656 743h1v1h-1zM676 743h1v1h-1zM686 743h1v1h-1zM696 743h1v1h-1zM706 743h1v1h-1zM716 743h1v1h-1zM736 743h1v1h-1zM746 743h1v1h-1zM756 743h1v1h-1zM766 743h1v1h-1zM776 743h1v1h-1zM796 743h1v1h-1zM806 743h1v1h-1zM816 743h1v1h-1zM826 743h1v1h-1zM836 743h1v1h-1zM856 743h1v1h-1zM866 743h1v1h-1zM876 743h1v1h-1zM886 743h1v1h-1zM896 743h1v1h-1zM916 743h1v1h-1zM926 743h1v1h-1zM936 743h1v1h-1zM946 743h1v1h-1zM956 743h1v1h-1zM976 743h1v1h-1zM986 743h1v1h-1zM996 743h1v1h-1zM1006 743h1v1h-1zM1016 743h1v1h-1zM1036 743h1v1h-1zM1046 743h1v1h-1zM1056 743h1v1h-1zM1066 743h1v1h-1zM1076 743h1v1h-1zM1096 743h1v1h-1zM1106 743h1v1h-1zM1116 743h1v1h-1zM1126 743h1v1h-1zM1136 743h1v1h-1zM1156 743h1v1h-1zM1166 743h1v1h-1zM1176 743h1v1h-1zM1186 743h1v1h-1zM1196 743h1v1h-1zM1216 743h1v1h-1zM1226 743h1v1h-1zM1236 743h1v1h-1zM1246 743h1v1h-1zM1256 743h1v1h-1zM1276 743h1v1h-1zM1286 743h1v1h-1zM1296 743h1v1h-1zM1306 743h1v1h-1zM1316 743h1v1h-1zM1336 743h1v1h-1zM1346 743h1v1h-1zM1356 743h1v1h-1zM1366 743h1v1h-1zM1376 743h1v1h-1zM16 803h1v1h-1zM26 803h1v1h-1zM36 803h1v1h-1zM46 803h1v1h-1zM56 803h1v1h-1zM76 803h1v1h-1zM86 803h1v1h-1zM96 803h1v1h-1zM106 803h1v1h-1zM116 803h1v1h-1zM136 803h1v1h-1zM146 803h1v1h-1zM156 803h1v1h-1zM166 803h1v1h-1zM176 803h1v1h-1zM196 803h1v1h-1zM206 803h1v1h-1zM216 803h1v1h-1zM226 803h1v1h-1zM236 803h1v1h-1zM256 803h1v1h-1zM266 803h1v1h-1zM276 803h1v1h-1zM286 803h1v1h-1zM296 803h1v1h-1zM316 803h1v1h-1zM326 803h1v1h-1zM336 803h1v1h-1zM346 803h1v1h-1zM356 803h1v1h-1zM376 803h1v1h-1zM386 803h1v1h-1zM396 803h1v1h-1zM406 803h1v1h-1zM416 803h1v1h-1zM436 803h1v1h-1zM446 803h1v1h-1zM456 803h1v1h-1zM466 803h1v1h-1zM476 803h1v1h-1zM496 803h1v1h-1zM506 803h1v1h-1zM516 803h1v1h-1zM526 803h1v1h-1zM536 803h1v1h-1zM556 803h1v1h-1zM566 803h1v1h-1zM576 803h1v1h-1zM586 803h1v1h-1zM596 803h1v1h-1zM616 803h1v1h-1zM626 803h1v1h-1zM636 803h1v1h-1zM646 803h1v1h-1zM656 803h1v1h-1zM676 803h1v1h-1zM686 803h1v1h-1zM696 803h1v1h-1zM706 803h1v1h-1zM716 803h1v1h-1zM736 803h1v1h-1zM746 803h1v1h-1zM756 803h1v1h-1zM766 803h1v1h-1zM776 803h1v1h-1zM796 803h1v1h-1zM806 803h1v1h-1zM816 803h1v1h-1zM826 803h1v1h-1zM836 803h1v1h-1zM856 803h1v1h-1zM866 803h1v1h-1zM876 803h1v1h-1zM886 803h1v1h-1zM896 803h1v1h-1zM916 803h1v1h-1zM926 803h1v1h-1zM936 803h1v1h-1zM946 803h1v1h-1zM956 803h1v1h-1zM976 803h1v1h-1zM986 803h1v1h-1zM996 803h1v1h-1zM1006 803h1v1h-1zM1016 803h1v1h-1zM1036 803h1v1h-1zM1046 803h1v1h-1zM1056 803h1v1h-1zM1066 803h1v1h-1zM1076 803h1v1h-1zM1096 803h1v1h-1zM1106 803h1v1h-1zM1116 803h1v1h-1zM1126 803h1v1h-1zM1136 803h1v1h-1zM1156 803h1v1h-1zM1166 803h1v1h-1zM1176 803h1v1h-1zM1186 803h1v1h-1zM1196 803h1v1h-1zM1216 803h1v1h-1zM1226 803h1v1h-1zM1236 803h1v1h-1zM1246 803h1v1h-1zM1256 803h1v1h-1zM1276 803h1v1h-1zM1286 803h1v1h-1zM1296 803h1v1h-1zM1306 803h1v1h-1zM1316 803h1v1h-1zM1336 803h1v1h-1zM1346 803h1v1h-1zM1356 803h1v1h-1zM1366 803h1v1h-1zM1376 803h1v1h-1zM16 863h1v1h-1zM26 863h1v1h-1zM36 863h1v1h-1zM46 863h1v1h-1zM56 863h1v1h-1zM76 863h1v1h-1zM86 863h1v1h-1zM96 863h1v1h-1zM106 863h1v1h-1zM116 863h1v1h-1zM136 863h1v1h-1zM146 863h1v1h-1zM156 863h1v1h-1zM166 863h1v1h-1zM176 863h1v1h-1zM196 863h1v1h-1zM206 863h1v1h-1zM216 863h1v1h-1zM226 863h1v1h-1zM236 863h1v1h-1zM256 863h1v1h-1zM266 863h1v1h-1zM276 863h1v1h-1zM286 863h1v1h-1zM296 863h1v1h-1zM316 863h1v1h-1zM326 863h1v1h-1zM336 863h1v1h-1zM346 863h1v1h-1zM356 863h1v1h-1zM376 863h1v1h-1zM386 863h1v1h-1zM396 863h1v1h-1zM406 863h1v1h-1zM416 863h1v1h-1zM436 863h1v1h-1zM446 863h1v1h-1zM456 863h1v1h-1zM466 863h1v1h-1zM476 863h1v1h-1zM496 863h1v1h-1zM506 863h1v1h-1zM516 863h1v1h-1zM526 863h1v1h-1zM536 863h1v1h-1zM556 863h1v1h-1zM566 863h1v1h-1zM576 863h1v1h-1zM586 863h1v1h-1zM596 863h1v1h-1zM616 863h1v1h-1zM626 863h1v1h-1zM636 863h1v1h-1zM646 863h1v1h-1zM656 863h1v1h-1zM676 863h1v1h-1zM686 863h1v1h-1zM696 863h1v1h-1zM706 863h1v1h-1zM716 863h1v1h-1zM736 863h1v1h-1zM746 863h1v1h-1zM756 863h1v1h-1zM766 863h1v1h-1zM776 863h1v1h-1zM796 863h1v1h-1zM806 863h1v1h-1zM816 863h1v1h-1zM826 863h1v1h-1zM836 863h1v1h-1zM856 863h1v1h-1zM866 863h1v1h-1zM876 863h1v1h-1zM886 863h1v1h-1zM896 863h1v1h-1zM916 863h1v1h-1zM926 863h1v1h-1zM936 863h1v1h-1zM946 863h1v1h-1zM956 863h1v1h-1zM976 863h1v1h-1zM986 863h1v1h-1zM996 863h1v1h-1zM1006 863h1v1h-1zM1016 863h1v1h-1zM1036 863h1v1h-1zM1046 863h1v1h-1zM1056 863h1v1h-1zM1066 863h1v1h-1zM1076 863h1v1h-1zM1096 863h1v1h-1zM1106 863h1v1h-1zM1116 863h1v1h-1zM1126 863h1v1h-1zM1136 863h1v1h-1zM1156 863h1v1h-1zM1166 863h1v1h-1zM1176 863h1v1h-1zM1186 863h1v1h-1zM1196 863h1v1h-1zM1216 863h1v1h-1zM1226 863h1v1h-1zM1236 863h1v1h-1zM1246 863h1v1h-1zM1256 863h1v1h-1zM1276 863h1v1h-1zM1286 863h1v1h-1zM1296 863h1v1h-1zM1306 863h1v1h-1zM1316 863h1v1h-1zM1336 863h1v1h-1zM1346 863h1v1h-1zM1356 863h1v1h-1zM1366 863h1v1h-1zM1376 863h1v1h-1zM16 923h1v1h-1zM26 923h1v1h-1zM36 923h1v1h-1zM46 923h1v1h-1zM56 923h1v1h-1zM76 923h1v1h-1zM86 923h1v1h-1zM96 923h1v1h-1zM106 923h1v1h-1zM116 923h1v1h-1zM136 923h1v1h-1zM146 923h1v1h-1zM156 923h1v1h-1zM166 923h1v1h-1zM176 923h1v1h-1zM196 923h1v1h-1zM206 923h1v1h-1zM216 923h1v1h-1zM226 923h1v1h-1zM236 923h1v1h-1zM256 923h1v1h-1zM266 923h1v1h-1zM276 923h1v1h-1zM286 923h1v1h-1zM296 923h1v1h-1zM316 923h1v1h-1zM326 923h1v1h-1zM336 923h1v1h-1zM346 923h1v1h-1zM356 923h1v1h-1zM376 923h1v1h-1zM386 923h1v1h-1zM396 923h1v1h-1zM406 923h1v1h-1zM416 923h1v1h-1zM436 923h1v1h-1zM446 923h1v1h-1zM456 923h1v1h-1zM466 923h1v1h-1zM476 923h1v1h-1zM496 923h1v1h-1zM506 923h1v1h-1zM516 923h1v1h-1zM526 923h1v1h-1zM536 923h1v1h-1zM556 923h1v1h-1zM566 923h1v1h-1zM576 923h1v1h-1zM586 923h1v1h-1zM596 923h1v1h-1zM616 923h1v1h-1zM626 923h1v1h-1zM636 923h1v1h-1zM646 923h1v1h-1zM656 923h1v1h-1zM676 923h1v1h-1zM686 923h1v1h-1zM696 923h1v1h-1zM706 923h1v1h-1zM716 923h1v1h-1zM736 923h1v1h-1zM746 923h1v1h-1zM756 923h1v1h-1zM766 923h1v1h-1zM776 923h1v1h-1zM796 923h1v1h-1zM806 923h1v1h-1zM816 923h1v1h-1zM826 923h1v1h-1zM836 923h1v1h-1zM856 923h1v1h-1zM866 923h1v1h-1zM876 923h1v1h-1zM886 923h1v1h-1zM896 923h1v1h-1zM916 923h1v1h-1zM926 923h1v1h-1zM936 923h1v1h-1zM946 923h1v1h-1zM956 923h1v1h-1zM976 923h1v1h-1zM986 923h1v1h-1zM996 923h1v1h-1zM1006 923h1v1h-1zM1016 923h1v1h-1zM1036 923h1v1h-1zM1046 923h1v1h-1zM1056 923h1v1h-1zM1066 923h1v1h-1zM1076 923h1v1h-1zM1096 923h1v1h-1zM1106 923h1v1h-1zM1116 923h1v1h-1zM1126 923h1v1h-1zM1136 923h1v1h-1zM1156 923h1v1h-1zM1166 923h1v1h-1zM1176 923h1v1h-1zM1186 923h1v1h-1zM1196 923h1v1h-1zM1216 923h1v1h-1zM1226 923h1v1h-1zM1236 923h1v1h-1zM1246 923h1v1h-1zM1256 923h1v1h-1zM1276 923h1v1h-1zM1286 923h1v1h-1zM1296 923h1v1h-1zM1306 923h1v1h-1zM1316 923h1v1h-1zM1336 923h1v1h-1zM1346 923h1v1h-1zM1356 923h1v1h-1zM1366 923h1v1h-1zM1376 923h1v1h-1zM16 983h1v1h-1zM26 983h1v1h-1zM36 983h1v1h-1zM46 983h1v1h-1zM56 983h1v1h-1zM76 983h1v1h-1zM86 983h1v1h-1zM96 983h1v1h-1zM106 983h1v1h-1zM116 983h1v1h-1zM136 983h1v1h-1zM146 983h1v1h-1zM156 983h1v1h-1zM166 983h1v1h-1zM176 983h1v1h-1zM196 983h1v1h-1zM206 983h1v1h-1zM216 983h1v1h-1zM226 983h1v1h-1zM236 983h1v1h-1zM256 983h1v1h-1zM266 983h1v1h-1zM276 983h1v1h-1zM286 983h1v1h-1zM296 983h1v1h-1zM316 983h1v1h-1zM326 983h1v1h-1zM336 983h1v1h-1zM346 983h1v1h-1zM356 983h1v1h-1zM376 983h1v1h-1zM386 983h1v1h-1zM396 983h1v1h-1zM406 983h1v1h-1zM416 983h1v1h-1zM436 983h1v1h-1zM446 983h1v1h-1zM456 983h1v1h-1zM466 983h1v1h-1zM476 983h1v1h-1zM496 983h1v1h-1zM506 983h1v1h-1zM516 983h1v1h-1zM526 983h1v1h-1zM536 983h1v1h-1zM556 983h1v1h-1zM566 983h1v1h-1zM576 983h1v1h-1zM586 983h1v1h-1zM596 983h1v1h-1zM616 983h1v1h-1zM626 983h1v1h-1zM636 983h1v1h-1zM646 983h1v1h-1zM656 983h1v1h-1zM676 983h1v1h-1zM686 983h1v1h-1zM696 983h1v1h-1zM706 983h1v1h-1zM716 983h1v1h-1zM736 983h1v1h-1zM746 983h1v1h-1zM756 983h1v1h-1zM766 983h1v1h-1zM776 983h1v1h-1zM796 983h1v1h-1zM806 983h1v1h-1zM816 983h1v1h-1zM826 983h1v1h-1zM836 983h1v1h-1zM856 983h1v1h-1zM866 983h1v1h-1zM876 983h1v1h-1zM886 983h1v1h-1zM896 983h1v1h-1zM916 983h1v1h-1zM926 983h1v1h-1zM936 983h1v1h-1zM946 983h1v1h-1zM956 983h1v1h-1zM976 983h1v1h-1zM986 983h1v1h-1zM996 983h1v1h-1zM1006 983h1v1h-1zM1016 983h1v1h-1zM1036 983h1v1h-1zM1046 983h1v1h-1zM1056 983h1v1h-1zM1066 983h1v1h-1zM1076 983h1v1h-1zM1096 983h1v1h-1zM1106 983h1v1h-1zM1116 983h1v1h-1zM1126 983h1v1h-1zM1136 983h1v1h-1zM1156 983h1v1h-1zM1166 983h1v1h-1zM1176 983h1v1h-1zM1186 983h1v1h-1zM1196 983h1v1h-1zM1216 983h1v1h-1zM1226 983h1v1h-1zM1236 983h1v1h-1zM1246 983h1v1h-1zM1256 983h1v1h-1zM1276 983h1v1h-1zM1286 983h1v1h-1zM1296 983h1v1h-1zM1306 983h1v1h-1zM1316 983h1v1h-1zM1336 983h1v1h-1zM1346 983h1v1h-1zM1356 983h1v1h-1zM1366 983h1v1h-1zM1376 983h1v1h-1zM186 539h1v1h-1zM186 545h1v1h-1zM186 551h1v1h-1zM186 557h1v1h-1zM186 569h1v1h-1zM186 575h1v1h-1zM186 581h1v1h-1zM186 587h1v1h-1zM186 599h1v1h-1zM186 605h1v1h-1zM186 611h1v1h-1zM186 617h1v1h-1zM186 629h1v1h-1zM186 635h1v1h-1zM186 641h1v1h-1zM186 647h1v1h-1zM186 659h1v1h-1zM186 665h1v1h-1zM186 671h1v1h-1zM186 677h1v1h-1zM186 689h1v1h-1zM186 695h1v1h-1zM186 701h1v1h-1zM186 707h1v1h-1zM186 719h1v1h-1zM186 725h1v1h-1zM186 731h1v1h-1zM186 737h1v1h-1zM186 749h1v1h-1zM186 755h1v1h-1zM186 761h1v1h-1zM186 767h1v1h-1zM186 779h1v1h-1zM186 785h1v1h-1zM186 791h1v1h-1zM186 797h1v1h-1zM186 809h1v1h-1zM186 815h1v1h-1zM186 821h1v1h-1zM186 827h1v1h-1zM186 839h1v1h-1zM186 845h1v1h-1zM186 851h1v1h-1zM186 857h1v1h-1zM186 869h1v1h-1zM186 875h1v1h-1zM186 881h1v1h-1zM186 887h1v1h-1zM186 899h1v1h-1zM186 905h1v1h-1zM186 911h1v1h-1zM186 917h1v1h-1zM186 929h1v1h-1zM186 935h1v1h-1zM186 941h1v1h-1zM186 947h1v1h-1zM186 959h1v1h-1zM186 965h1v1h-1zM186 971h1v1h-1zM186 977h1v1h-1zM186 989h1v1h-1zM186 995h1v1h-1zM186 1001h1v1h-1zM186 1007h1v1h-1zM366 539h1v1h-1zM366 545h1v1h-1zM366 551h1v1h-1zM366 557h1v1h-1zM366 569h1v1h-1zM366 575h1v1h-1zM366 581h1v1h-1zM366 587h1v1h-1zM366 599h1v1h-1zM366 605h1v1h-1zM366 611h1v1h-1zM366 617h1v1h-1zM366 629h1v1h-1zM366 635h1v1h-1zM366 641h1v1h-1zM366 647h1v1h-1zM366 659h1v1h-1zM366 665h1v1h-1zM366 671h1v1h-1zM366 677h1v1h-1zM366 689h1v1h-1zM366 695h1v1h-1zM366 701h1v1h-1zM366 707h1v1h-1zM366 719h1v1h-1zM366 725h1v1h-1zM366 731h1v1h-1zM366 737h1v1h-1zM366 749h1v1h-1zM366 755h1v1h-1zM366 761h1v1h-1zM366 767h1v1h-1zM366 779h1v1h-1zM366 785h1v1h-1zM366 791h1v1h-1zM366 797h1v1h-1zM366 809h1v1h-1zM366 815h1v1h-1zM366 821h1v1h-1zM366 827h1v1h-1zM366 839h1v1h-1zM366 845h1v1h-1zM366 851h1v1h-1zM366 857h1v1h-1zM366 869h1v1h-1zM366 875h1v1h-1zM366 881h1v1h-1zM366 887h1v1h-1zM366 899h1v1h-1zM366 905h1v1h-1zM366 911h1v1h-1zM366 917h1v1h-1zM366 929h1v1h-1zM366 935h1v1h-1zM366 941h1v1h-1zM366 947h1v1h-1zM366 959h1v1h-1zM366 965h1v1h-1zM366 971h1v1h-1zM366 977h1v1h-1zM366 989h1v1h-1zM366 995h1v1h-1zM366 1001h1v1h-1zM366 1007h1v1h-1zM546 539h1v1h-1zM546 545h1v1h-1zM546 551h1v1h-1zM546 557h1v1h-1zM546 569h1v1h-1zM546 575h1v1h-1zM546 581h1v1h-1zM546 587h1v1h-1zM546 599h1v1h-1zM546 605h1v1h-1zM546 611h1v1h-1zM546 617h1v1h-1zM546 629h1v1h-1zM546 635h1v1h-1zM546 641h1v1h-1zM546 647h1v1h-1zM546 659h1v1h-1zM546 665h1v1h-1zM546 671h1v1h-1zM546 677h1v1h-1zM546 689h1v1h-1zM546 695h1v1h-1zM546 701h1v1h-1zM546 707h1v1h-1zM546 719h1v1h-1zM546 725h1v1h-1zM546 731h1v1h-1zM546 737h1v1h-1zM546 749h1v1h-1zM546 755h1v1h-1zM546 761h1v1h-1zM546 767h1v1h-1zM546 779h1v1h-1zM546 785h1v1h-1zM546 791h1v1h-1zM546 797h1v1h-1zM546 809h1v1h-1zM546 815h1v1h-1zM546 821h1v1h-1zM546 827h1v1h-1zM546 839h1v1h-1zM546 845h1v1h-1zM546 851h1v1h-1zM546 857h1v1h-1zM546 869h1v1h-1zM546 875h1v1h-1zM546 881h1v1h-1zM546 887h1v1h-1zM546 899h1v1h-1zM546 905h1v1h-1zM546 911h1v1h-1zM546 917h1v1h-1zM546 929h1v1h-1zM546 935h1v1h-1zM546 941h1v1h-1zM546 947h1v1h-1zM546 959h1v1h-1zM546 965h1v1h-1zM546 971h1v1h-1zM546 977h1v1h-1zM546 989h1v1h-1zM546 995h1v1h-1zM546 1001h1v1h-1zM546 1007h1v1h-1zM726 539h1v1h-1zM726 545h1v1h-1zM726 551h1v1h-1zM726 557h1v1h-1zM726 569h1v1h-1zM726 575h1v1h-1zM726 581h1v1h-1zM726 587h1v1h-1zM726 599h1v1h-1zM726 605h1v1h-1zM726 611h1v1h-1zM726 617h1v1h-1zM726 629h1v1h-1zM726 635h1v1h-1zM726 641h1v1h-1zM726 647h1v1h-1zM726 659h1v1h-1zM726 665h1v1h-1zM726 671h1v1h-1zM726 677h1v1h-1zM726 689h1v1h-1zM726 695h1v1h-1zM726 701h1v1h-1zM726 707h1v1h-1zM726 719h1v1h-1zM726 725h1v1h-1zM726 731h1v1h-1zM726 737h1v1h-1zM726 749h1v1h-1zM726 755h1v1h-1zM726 761h1v1h-1zM726 767h1v1h-1zM726 779h1v1h-1zM726 785h1v1h-1zM726 791h1v1h-1zM726 797h1v1h-1zM726 809h1v1h-1zM726 815h1v1h-1zM726 821h1v1h-1zM726 827h1v1h-1zM726 839h1v1h-1zM726 845h1v1h-1zM726 851h1v1h-1zM726 857h1v1h-1zM726 869h1v1h-1zM726 875h1v1h-1zM726 881h1v1h-1zM726 887h1v1h-1zM726 899h1v1h-1zM726 905h1v1h-1zM726 911h1v1h-1zM726 917h1v1h-1zM726 929h1v1h-1zM726 935h1v1h-1zM726 941h1v1h-1zM726 947h1v1h-1zM726 959h1v1h-1zM726 965h1v1h-1zM726 971h1v1h-1zM726 977h1v1h-1zM726 989h1v1h-1zM726 995h1v1h-1zM726 1001h1v1h-1zM726 1007h1v1h-1zM906 539h1v1h-1zM906 545h1v1h-1zM906 551h1v1h-1zM906 557h1v1h-1zM906 569h1v1h-1zM906 575h1v1h-1zM906 581h1v1h-1zM906 587h1v1h-1zM906 599h1v1h-1zM906 605h1v1h-1zM906 611h1v1h-1zM906 617h1v1h-1zM906 629h1v1h-1zM906 635h1v1h-1zM906 641h1v1h-1zM906 647h1v1h-1zM906 659h1v1h-1zM906 665h1v1h-1zM906 671h1v1h-1zM906 677h1v1h-1zM906 689h1v1h-1zM906 695h1v1h-1zM906 701h1v1h-1zM906 707h1v1h-1zM906 719h1v1h-1zM906 725h1v1h-1zM906 731h1v1h-1zM906 737h1v1h-1zM906 749h1v1h-1zM906 755h1v1h-1zM906 761h1v1h-1zM906 767h1v1h-1zM906 779h1v1h-1zM906 785h1v1h-1zM906 791h1v1h-1zM906 797h1v1h-1zM906 809h1v1h-1zM906 815h1v1h-1zM906 821h1v1h-1zM906 827h1v1h-1zM906 839h1v1h-1zM906 845h1v1h-1zM906 851h1v1h-1zM906 857h1v1h-1zM906 869h1v1h-1zM906 875h1v1h-1zM906 881h1v1h-1zM906 887h1v1h-1zM906 899h1v1h-1zM906 905h1v1h-1zM906 911h1v1h-1zM906 917h1v1h-1zM906 929h1v1h-1zM906 935h1v1h-1zM906 941h1v1h-1zM906 947h1v1h-1zM906 959h1v1h-1zM906 965h1v1h-1zM906 971h1v1h-1zM906 977h1v1h-1zM906 989h1v1h-1zM906 995h1v1h-1zM906 1001h1v1h-1zM906 1007h1v1h-1zM1086 539h1v1h-1zM1086 545h1v1h-1zM1086 551h1v1h-1zM1086 557h1v1h-1zM1086 569h1v1h-1zM1086 575h1v1h-1zM1086 581h1v1h-1zM1086 587h1v1h-1zM1086 599h1v1h-1zM1086 605h1v1h-1zM1086 611h1v1h-1zM1086 617h1v1h-1zM1086 629h1v1h-1zM1086 635h1v1h-1zM1086 641h1v1h-1zM1086 647h1v1h-1zM1086 659h1v1h-1zM1086 665h1v1h-1zM1086 671h1v1h-1zM1086 677h1v1h-1zM1086 689h1v1h-1zM1086 695h1v1h-1zM1086 701h1v1h-1zM1086 707h1v1h-1zM1086 719h1v1h-1zM1086 725h1v1h-1zM1086 731h1v1h-1zM1086 737h1v1h-1zM1086 749h1v1h-1zM1086 755h1v1h-1zM1086 761h1v1h-1zM1086 767h1v1h-1zM1086 779h1v1h-1zM1086 785h1v1h-1zM1086 791h1v1h-1zM1086 797h1v1h-1zM1086 809h1v1h-1zM1086 815h1v1h-1zM1086 821h1v1h-1zM1086 827h1v1h-1zM1086 839h1v1h-1zM1086 845h1v1h-1zM1086 851h1v1h-1zM1086 857h1v1h-1zM1086 869h1v1h-1zM1086 875h1v1h-1zM1086 881h1v1h-1zM1086 887h1v1h-1zM1086 899h1v1h-1zM1086 905h1v1h-1zM1086 911h1v1h-1zM1086 917h1v1h-1zM1086 929h1v1h-1zM1086 935h1v1h-1zM1086 941h1v1h-1zM1086 947h1v1h-1zM1086 959h1v1h-1zM1086 965h1v1h-1zM1086 971h1v1h-1zM1086 977h1v1h-1zM1086 989h1v1h-1zM1086 995h1v1h-1zM1086 1001h1v1h-1zM1086 1007h1v1h-1zM1266 539h1v1h-1zM1266 545h1v1h-1zM1266 551h1v1h-1zM1266 557h1v1h-1zM1266 569h1v1h-1zM1266 575h1v1h-1zM1266 581h1v1h-1zM1266 587h1v1h-1zM1266 599h1v1h-1zM1266 605h1v1h-1zM1266 611h1v1h-1zM1266 617h1v1h-1zM1266 629h1v1h-1zM1266 635h1v1h-1zM1266 641h1v1h-1zM1266 647h1v1h-1zM1266 659h1v1h-1zM1266 665h1v1h-1zM1266 671h1v1h-1zM1266 677h1v1h-1zM1266 689h1v1h-1zM1266 695h1v1h-1zM1266 701h1v1h-1zM1266 707h1v1h-1zM1266 719h1v1h-1zM1266 725h1v1h-1zM1266 731h1v1h-1zM1266 737h1v1h-1zM1266 749h1v1h-1zM1266 755h1v1h-1zM1266 761h1v1h-1zM1266 767h1v1h-1zM1266 779h1v1h-1zM1266 785h1v1h-1zM1266 791h1v1h-1zM1266 797h1v1h-1zM1266 809h1v1h-1zM1266 815h1v1h-1zM1266 821h1v1h-1zM1266 827h1v1h-1zM1266 839h1v1h-1zM1266 845h1v1h-1zM1266 851h1v1h-1zM1266 857h1v1h-1zM1266 869h1v1h-1zM1266 875h1v1h-1zM1266 881h1v1h-1zM1266 887h1v1h-1zM1266 899h1v1h-1zM1266 905h1v1h-1zM1266 911h1v1h-1zM1266 917h1v1h-1zM1266 929h1v1h-1zM1266 935h1v1h-1zM1266 941h1v1h-1zM1266 947h1v1h-1zM1266 959h1v1h-1zM1266 965h1v1h-1zM1266 971h1v1h-1zM1266 977h1v1h-1zM1266 989h1v1h-1zM1266 995h1v1h-1zM1266 1001h1v1h-1zM1266 1007h1v1h-1z"/>
<path fill="#ffffff" d="M66 562h1v1h-1zM65 563h1v1h-1zM67 563h1v1h-1zM66 564h1v1h-1zM126 562h1v1h-1zM125 563h1v1h-1zM127 563h1v1h-1zM126 564h1v1h-1zM186 562h1v1h-1zM185 563h1v1h-1zM187 563h1v1h-1zM186 564h1v1h-1zM246 562h1v1h-1zM245 563h1v1h-1zM247 563h1v1h-1zM246 564h1v1h-1zM306 562h1v1h-1zM305 563h1v1h-1zM307 563h1v1h-1zM306 564h1v1h-1zM366 562h1v1h-1zM365 563h1v1h-1zM367 563h1v1h-1zM366 564h1v1h-1zM426 562h1v1h-1zM425 563h1v1h-1zM427 563h1v1h-1zM426 564h1v1h-1zM486 562h1v1h-1zM485 563h1v1h-1zM487 563h1v1h-1zM486 564h1v1h-1zM546 562h1v1h-1zM545 563h1v1h-1zM547 563h1v1h-1zM546 564h1v1h-1zM606 562h1v1h-1zM605 563h1v1h-1zM607 563h1v1h-1zM606 564h1v1h-1zM666 562h1v1h-1zM665 563h1v1h-1zM667 563h1v1h-1zM666 564h1v1h-1zM726 562h1v1h-1zM725 563h1v1h-1zM727 563h1v1h-1zM726 564h1v1h-1zM786 562h1v1h-1zM785 563h1v1h-1zM787 563h1v1h-1zM786 564h1v1h-1zM846 562h1v1h-1zM845 563h1v1h-1zM847 563h1v1h-1zM846 564h1v1h-1zM906 562h1v1h-1zM905 563h1v1h-1zM907 563h1v1h-1zM906 564h1v1h-1zM966 562h1v1h-1zM965 563h1v1h-1zM967 563h1v1h-1zM966 564h1v1h-1zM1026 562h1v1h-1zM1025 563h1v1h-1zM1027 563h1v1h-1zM1026 564h1v1h-1zM1086 562h1v1h-1zM1085 563h1v1h-1zM1087 563h1v1h-1zM1086 564h1v1h-1zM1146 562h1v1h-1zM1145 563h1v1h-1zM1147 563h1v1h-1zM1146 564h1v1h-1zM1206 562h1v1h-1zM1205 563h1v1h-1zM1207 563h1v1h-1zM1206 564h1v1h-1zM1266 562h1v1h-1zM1265 563h1v1h-1zM1267 563h1v1h-1zM1266 564h1v1h-1zM1326 562h1v1h-1zM1325 563h1v1h-1zM1327 563h1v1h-1zM1326 564h1v1h-1zM66 592h1v1h-1zM65 593h1v1h-1zM67 593h1v1h-1zM66 594h1v1h-1zM126 592h1v1h-1zM125 593h1v1h-1zM127 593h1v1h-1zM126 594h1v1h-1zM186 592h1v1h-1zM185 593h1v1h-1zM187 593h1v1h-1zM186 594h1v1h-1zM246 592h1v1h-1zM245 593h1v1h-1zM247 593h1v1h-1zM246 594h1v1h-1zM306 592h1v1h-1zM305 593h1v1h-1zM307 593h1v1h-1zM306 594h1v1h-1zM366 592h1v1h-1zM365 593h1v1h-1zM367 593h1v1h-1zM366 594h1v1h-1zM426 592h1v1h-1zM425 593h1v1h-1zM427 593h1v1h-1zM426 594h1v1h-1zM486 592h1v1h-1zM485 593h1v1h-1zM487 593h1v1h-1zM486 594h1v1h-1zM546 592h1v1h-1zM545 593h1v1h-1zM547 593h1v1h-1zM546 594h1v1h-1zM606 592h1v1h-1zM605 593h1v1h-1zM607 593h1v1h-1zM606 594h1v1h-1zM666 592h1v1h-1zM665 593h1v1h-1zM667 593h1v1h-1zM666 594h1v1h-1zM726 592h1v1h-1zM725 593h1v1h-1zM727 593h1v1h-1zM726 594h1v1h-1zM786 592h1v1h-1zM785 593h1v1h-1zM787 593h1v1h-1zM786 594h1v1h-1zM846 592h1v1h-1zM845 593h1v1h-1zM847 593h1v1h-1zM846 594h1v1h-1zM906 592h1v1h-1zM905 593h1v1h-1zM907 593h1v1h-1zM906 594h1v1h-1zM966 592h1v1h-1zM965 593h1v1h-1zM967 593h1v1h-1zM966 594h1v1h-1zM1026 592h1v1h-1zM1025 593h1v1h-1zM1027 593h1v1h-1zM1026 594h1v1h-1zM1086 592h1v1h-1zM1085 593h1v1h-1zM1087 593h1v1h-1zM1086 594h1v1h-1zM1146 592h1v1h-1zM1145 593h1v1h-1zM1147 593h1v1h-1zM1146 594h1v1h-1zM1206 592h1v1h-1zM1205 593h1v1h-1zM1207 593h1v1h-1zM1206 594h1v1h-1zM1266 592h1v1h-1zM1265 593h1v1h-1zM1267 593h1v1h-1zM1266 594h1v1h-1zM1326 592h1v1h-1zM1325 593h1v1h-1zM1327 593h1v1h-1zM1326 594h1v1h-1zM66 622h1v1h-1zM65 623h1v1h-1zM67 623h1v1h-1zM66 624h1v1h-1zM126 622h1v1h-1zM125 623h1v1h-1zM127 623h1v1h-1zM126 624h1v1h-1zM186 622h1v1h-1zM185 623h1v1h-1zM187 623h1v1h-1zM186 624h1v1h-1zM246 622h1v1h-1zM245 623h1v1h-1zM247 623h1v1h-1zM246 624h1v1h-1zM306 622h1v1h-1zM305 623h1v1h-1zM307 623h1v1h-1zM306 624h1v1h-1zM366 622h1v1h-1zM365 623h1v1h-1zM367 623h1v1h-1zM366 624h1v1h-1zM426 622h1v1h-1zM425 623h1v1h-1zM427 623h1v1h-1zM426 624h1v1h-1zM486 622h1v1h-1zM485 623h1v1h-1zM487 623h1v1h-1zM486 624h1v1h-1zM546 622h1v1h-1zM545 623h1v1h-1zM547 623h1v1h-1zM546 624h1v1h-1zM606 622h1v1h-1zM605 623h1v1h-1zM607 623h1v1h-1zM606 624h1v1h-1zM666 622h1v1h-1zM665 623h1v1h-1zM667 623h1v1h-1zM666 624h1v1h-1zM726 622h1v1h-1zM725 623h1v1h-1zM727 623h1v1h-1zM726 624h1v1h-1zM786 622h1v1h-1zM785 623h1v1h-1zM787 623h1v1h-1zM786 624h1v1h-1zM846 622h1v1h-1zM845 623h1v1h-1zM847 623h1v1h-1zM846 624h1v1h-1zM906 622h1v1h-1zM905 623h1v1h-1zM907 623h1v1h-1zM906 624h1v1h-1zM966 622h1v1h-1zM965 623h1v1h-1zM967 623h1v1h-1zM966 624h1v1h-1zM1026 622h1v1h-1zM1025 623h1v1h-1zM1027 623h1v1h-1zM1026 624h1v1h-1zM1086 622h1v1h-1zM1085 623h1v1h-1zM1087 623h1v1h-1zM1086 624h1v1h-1zM1146 622h1v1h-1zM1145 623h1v1h-1zM1147 623h1v1h-1zM1146 624h1v1h-1zM1206 622h1v1h-1zM1205 623h1v1h-1zM1207 623h1v1h-1zM1206 624h1v1h-1zM1266 622h1v1h-1zM1265 623h1v1h-1zM1267 623h1v1h-1zM1266 624h1v1h-1zM1326 622h1v1h-1zM1325 623h1v1h-1zM1327 623h1v1h-1zM1326 624h1v1h-1zM66 652h1v1h-1zM65 653h1v1h-1zM67 653h1v1h-1zM66 654h1v1h-1zM126 652h1v1h-1zM125 653h1v1h-1zM127 653h1v1h-1zM126 654h1v1h-1zM186 652h1v1h-1zM185 653h1v1h-1zM187 653h1v1h-1zM186 654h1v1h-1zM246 652h1v1h-1zM245 653h1v1h-1zM247 653h1v1h-1zM246 654h1v1h-1zM306 652h1v1h-1zM305 653h1v1h-1zM307 653h1v1h-1zM306 654h1v1h-1zM366 652h1v1h-1zM365 653h1v1h-1zM367 653h1v1h-1zM366 654h1v1h-1zM426 652h1v1h-1zM425 653h1v1h-1zM427 653h1v1h-1zM426 654h1v1h-1zM486 652h1v1h-1zM485 653h1v1h-1zM487 653h1v1h-1zM486 654h1v1h-1zM546 652h1v1h-1zM545 653h1v1h-1zM547 653h1v1h-1zM546 654h1v1h-1zM606 652h1v1h-1zM605 653h1v1h-1zM607 653h1v1h-1zM606 654h1v1h-1zM666 652h1v1h-1zM665 653h1v1h-1zM667 653h1v1h-1zM666 654h1v1h-1zM726 652h1v1h-1zM725 653h1v1h-1zM727 653h1v1h-1zM726 654h1v1h-1zM786 652h1v1h-1zM785 653h1v1h-1zM787 653h1v1h-1zM786 654h1v1h-1zM846 652h1v1h-1zM845 653h1v1h-1zM847 653h1v1h-1zM846 654h1v1h-1zM906 652h1v1h-1zM905 653h1v1h-1zM907 653h1v1h-1zM906 654h1v1h-1zM966 652h1v1h-1zM965 653h1v1h-1zM967 653h1v1h-1zM966 654h1v1h-1zM1026 652h1v1h-1zM1025 653h1v1h-1zM1027 653h1v1h-1zM1026 654h1v1h-1zM1086 652h1v1h-1zM1085 653h1v1h-1zM1087 653h1v1h-1zM1086 654h1v1h-1zM1146 652h1v1h-1zM1145 653h1v1h-1zM1147 653h1v1h-1zM1146 654h1v1h-1zM1206 652h1v1h-1zM1205 653h1v1h-1zM1207 653h1v1h-1zM1206 654h1v1h-1zM1266 652h1v1h-1zM1265 653h1v1h-1zM1267 653h1v1h-1zM1266 654h1v1h-1zM1326 652h1v1h-1zM1325 653h1v1h-1zM1327 653h1v1h-1zM1326 654h1v1h-1zM66 682h1v1h-1zM65 683h1v1h-1zM67 683h1v1h-1zM66 684h1v1h-1zM126 682h1v1h-1zM125 683h1v1h-1zM127 683h1v1h-1zM126 684h1v1h-1zM186 682h1v1h-1zM185 683h1v1h-1zM187 683h1v1h-1zM186 684h1v1h-1zM246 682h1v1h-1zM245 683h1v1h-1zM247 683h1v1h-1zM246 684h1v1h-1zM306 682h1v1h-1zM305 683h1v1h-1zM307 683h1v1h-1zM306 684h1v1h-1zM366 682h1v1h-1zM365 683h1v1h-1zM367 683h1v1h-1zM366 684h1v1h-1zM426 682h1v1h-1zM425 683h1v1h-1zM427 683h1v1h-1zM426 684h1v1h-1zM486 682h1v1h-1zM485 683h1v1h-1zM487 683h1v1h-1zM486 684h1v1h-1zM546 682h1v1h-1zM545 683h1v1h-1zM547 683h1v1h-1zM546 684h1v1h-1zM606 682h1v1h-1zM605 683h1v1h-1zM607 683h1v1h-1zM606 684h1v1h-1zM666 682h1v1h-1zM665 683h1v1h-1zM667 683h1v1h-1zM666 684h1v1h-1zM726 682h1v1h-1zM725 683h1v1h-1zM727 683h1v1h-1zM726 684h1v1h-1zM786 682h1v1h-1zM785 683h1v1h-1zM787 683h1v1h-1zM786 684h1v1h-1zM846 682h1v1h-1zM845 683h1v1h-1zM847 683h1v1h-1zM846 684h1v1h-1zM906 682h1v1h-1zM905 683h1v1h-1zM907 683h1v1h-1zM906 684h1v1h-1zM966 682h1v1h-1zM965 683h1v1h-1zM967 683h1v1h-1zM966 684h1v1h-1zM1026 682h1v1h-1zM1025 683h1v1h-1zM1027 683h1v1h-1zM1026 684h1v1h-1zM1086 682h1v1h-1zM1085 683h1v1h-1zM1087 683h1v1h-1zM1086 684h1v1h-1zM1146 682h1v1h-1zM1145 683h1v1h-1zM1147 683h1v1h-1zM1146 684h1v1h-1zM1206 682h1v1h-1zM1205 683h1v1h-1zM1207 683h1v1h-1zM1206 684h1v1h-1zM1266 682h1v1h-1zM1265 683h1v1h-1zM1267 683h1v1h-1zM1266 684h1v1h-1zM1326 682h1v1h-1zM1325 683h1v1h-1zM1327 683h1v1h-1zM1326 684h1v1h-1zM66 712h1v1h-1zM65 713h1v1h-1zM67 713h1v1h-1zM66 714h1v1h-1zM126 712h1v1h-1zM125 713h1v1h-1zM127 713h1v1h-1zM126 714h1v1h-1zM186 712h1v1h-1zM185 713h1v1h-1zM187 713h1v1h-1zM186 714h1v1h-1zM246 712h1v1h-1zM245 713h1v1h-1zM247 713h1v1h-1zM246 714h1v1h-1zM306 712h1v1h-1zM305 713h1v1h-1zM307 713h1v1h-1zM306 714h1v1h-1zM366 712h1v1h-1zM365 713h1v1h-1zM367 713h1v1h-1zM366 714h1v1h-1zM426 712h1v1h-1zM425 713h1v1h-1zM427 713h1v1h-1zM426 714h1v1h-1zM486 712h1v1h-1zM485 713h1v1h-1zM487 713h1v1h-1zM486 714h1v1h-1zM546 712h1v1h-1zM545 713h1v1h-1zM547 713h1v1h-1zM546 714h1v1h-1zM606 712h1v1h-1zM605 713h1v1h-1zM607 713h1v1h-1zM606 714h1v1h-1zM666 712h1v1h-1zM665 713h1v1h-1zM667 713h1v1h-1zM666 714h1v1h-1zM726 712h1v1h-1zM725 713h1v1h-1zM727 713h1v1h-1zM726 714h1v1h-1zM786 712h1v1h-1zM785 713h1v1h-1zM787 713h1v1h-1zM786 714h1v1h-1zM846 712h1v1h-1zM845 713h1v1h-1zM847 713h1v1h-1zM846 714h1v1h-1zM906 712h1v1h-1zM905 713h1v1h-1zM907 713h1v1h-1zM906 714h1v1h-1zM966 712h1v1h-1zM965 713h1v1h-1zM967 713h1v1h-1zM966 714h1v1h-1zM1026 712h1v1h-1zM1025 713h1v1h-1zM1027 713h1v1h-1zM1026 714h1v1h-1zM1086 712h1v1h-1zM1085 713h1v1h-1zM1087 713h1v1h-1zM1086 714h1v1h-1zM1146 712h1v1h-1zM1145 713h1v1h-1zM1147 713h1v1h-1zM1146 714h1v1h-1zM1206 712h1v1h-1zM1205 713h1v1h-1zM1207 713h1v1h-1zM1206 714h1v1h-1zM1266 712h1v1h-1zM1265 713h1v1h-1zM1267 713h1v1h-1zM1266 714h1v1h-1zM1326 712h1v1h-1zM1325 713h1v1h-1zM1327 713h1v1h-1zM1326 714h1v1h-1zM66 742h1v1h-1zM65 743h1v1h-1zM67 743h1v1h-1zM66 744h1v1h-1zM126 742h1v1h-1zM125 743h1v1h-1zM127 743h1v1h-1zM126 744h1v1h-1zM186 742h1v1h-1zM185 743h1v1h-1zM187 743h1v1h-1zM186 744h1v1h-1zM246 742h1v1h-1zM245 743h1v1h-1zM247 743h1v1h-1zM246 744h1v1h-1zM306 742h1v1h-1zM305 743h1v1h-1zM307 743h1v1h-1zM306 744h1v1h-1zM366 742h1v1h-1zM365 743h1v1h-1zM367 743h1v1h-1zM366 744h1v1h-1zM426 742h1v1h-1zM425 743h1v1h-1zM427 743h1v1h-1zM426 744h1v1h-1zM486 742h1v1h-1zM485 743h1v1h-1zM487 743h1v1h-1zM486 744h1v1h-1zM546 742h1v1h-1zM545 743h1v1h-1zM547 743h1v1h-1zM546 744h1v1h-1zM606 742h1v1h-1zM605 743h1v1h-1zM607 743h1v1h-1zM606 744h1v1h-1zM666 742h1v1h-1zM665 743h1v1h-1zM667 743h1v1h-1zM666 744h1v1h-1zM726 742h1v1h-1zM725 743h1v1h-1zM727 743h1v1h-1zM726 744h1v1h-1zM786 742h1v1h-1zM785 743h1v1h-1zM787 743h1v1h-1zM786 744h1v1h-1zM846 742h1v1h-1zM845 743h1v1h-1zM847 743h1v1h-1zM846 744h1v1h-1zM906 742h1v1h-1zM905 743h1v1h-1zM907 743h1v1h-1zM906 744h1v1h-1zM966 742h1v1h-1zM965 743h1v1h-1zM967 743h1v1h-1zM966 744h1v1h-1zM1026 742h1v1h-1zM1025 743h1v1h-1zM1027 743h1v1h-1zM1026 744h1v1h-1zM1086 742h1v1h-1zM1085 743h1v1h-1zM1087 743h1v1h-1zM1086 744h1v1h-1zM1146 742h1v1h-1zM1145 743h1v1h-1zM1147 743h1v1h-1zM1146 744h1v1h-1zM1206 742h1v1h-1zM1205 743h1v1h-1zM1207 743h1v1h-1zM1206 744h1v1h-1zM1266 742h1v1h-1zM1265 743h1v1h-1zM1267 743h1v1h-1zM1266 744h1v1h-1zM1326 742h1v1h-1zM1325 743h1v1h-1zM1327 743h1v1h-1zM1326 744h1v1h-1zM66 772h1v1h-1zM65 773h1v1h-1zM67 773h1v1h-1zM66 774h1v1h-1zM126 772h1v1h-1zM125 773h1v1h-1zM127 773h1v1h-1zM126 774h1v1h-1zM186 772h1v1h-1zM185 773h1v1h-1zM187 773h1v1h-1zM186 774h1v1h-1zM246 772h1v1h-1zM245 773h1v1h-1zM247 773h1v1h-1zM246 774h1v1h-1zM306 772h1v1h-1zM305 773h1v1h-1zM307 773h1v1h-1zM306 774h1v1h-1zM366 772h1v1h-1zM365 773h1v1h-1zM367 773h1v1h-1zM366 774h1v1h-1zM426 772h1v1h-1zM425 773h1v1h-1zM427 773h1v1h-1zM426 774h1v1h-1zM486 772h1v1h-1zM485 773h1v1h-1zM487 773h1v1h-1zM486 774h1v1h-1zM546 772h1v1h-1zM545 773h1v1h-1zM547 773h1v1h-1zM546 774h1v1h-1zM606 772h1v1h-1zM605 773h1v1h-1zM607 773h1v1h-1zM606 774h1v1h-1zM666 772h1v1h-1zM665 773h1v1h-1zM667 773h1v1h-1zM666 774h1v1h-1zM726 772h1v1h-1zM725 773h1v1h-1zM727 773h1v1h-1zM726 774h1v1h-1zM786 772h1v1h-1zM785 773h1v1h-1zM787 773h1v1h-1zM786 774h1v1h-1zM846 772h1v1h-1zM845 773h1v1h-1zM847 773h1v1h-1zM846 774h1v1h-1zM906 772h1v1h-1zM905 773h1v1h-1zM907 773h1v1h-1zM906 774h1v1h-1zM966 772h1v1h-1zM965 773h1v1h-1zM967 773h1v1h-1zM966 774h1v1h-1zM1026 772h1v1h-1zM1025 773h1v1h-1zM1027 773h1v1h-1zM1026 774h1v1h-1zM1086 772h1v1h-1zM1085 773h1v1h-1zM1087 773h1v1h-1zM1086 774h1v1h-1zM1146 772h1v1h-1zM1145 773h1v1h-1zM1147 773h1v1h-1zM1146 774h1v1h-1zM1206 772h1v1h-1zM1205 773h1v1h-1zM1207 773h1v1h-1zM1206 774h1v1h-1zM1266 772h1v1h-1zM1265 773h1v1h-1zM1267 773h1v1h-1zM1266 774h1v1h-1zM1326 772h1v1h-1zM1325 773h1v1h-1zM1327 773h1v1h-1zM1326 774h1v1h-1zM66 802h1v1h-1zM65 803h1v1h-1zM67 803h1v1h-1zM66 804h1v1h-1zM126 802h1v1h-1zM125 803h1v1h-1zM127 803h1v1h-1zM126 804h1v1h-1zM186 802h1v1h-1zM185 803h1v1h-1zM187 803h1v1h-1zM186 804h1v1h-1zM246 802h1v1h-1zM245 803h1v1h-1zM247 803h1v1h-1zM246 804h1v1h-1zM306 802h1v1h-1zM305 803h1v1h-1zM307 803h1v1h-1zM306 804h1v1h-1zM366 802h1v1h-1zM365 803h1v1h-1zM367 803h1v1h-1zM366 804h1v1h-1zM426 802h1v1h-1zM425 803h1v1h-1zM427 803h1v1h-1zM426 804h1v1h-1zM486 802h1v1h-1zM485 803h1v1h-1zM487 803h1v1h-1zM486 804h1v1h-1zM546 802h1v1h-1zM545 803h1v1h-1zM547 803h1v1h-1zM546 804h1v1h-1zM606 802h1v1h-1zM605 803h1v1h-1zM607 803h1v1h-1zM606 804h1v1h-1zM666 802h1v1h-1zM665 803h1v1h-1zM667 803h1v1h-1zM666 804h1v1h-1zM726 802h1v1h-1zM725 803h1v1h-1zM727 803h1v1h-1zM726 804h1v1h-1zM786 802h1v1h-1zM785 803h1v1h-1zM787 803h1v1h-1zM786 804h1v1h-1zM846 802h1v1h-1zM845 803h1v1h-1zM847 803h1v1h-1zM846 804h1v1h-1zM906 802h1v1h-1zM905 803h1v1h-1zM907 803h1v1h-1zM906 804h1v1h-1zM966 802h1v1h-1zM965 803h1v1h-1zM967 803h1v1h-1zM966 804h1v1h-1zM1026 802h1v1h-1zM1025 803h1v1h-1zM1027 803h1v1h-1zM1026 804h1v1h-1zM1086 802h1v1h-1zM1085 803h1v1h-1zM1087 803h1v1h-1zM1086 804h1v1h-1zM1146 802h1v1h-1zM1145 803h1v1h-1zM1147 803h1v1h-1zM1146 804h1v1h-1zM1206 802h1v1h-1zM1205 803h1v1h-1zM1207 803h1v1h-1zM1206 804h1v1h-1zM1266 802h1v1h-1zM1265 803h1v1h-1zM1267 803h1v1h-1zM1266 804h1v1h-1zM1326 802h1v1h-1zM1325 803h1v1h-1zM1327 803h1v1h-1zM1326 804h1v1h-1zM66 832h1v1h-1zM65 833h1v1h-1zM67 833h1v1h-1zM66 834h1v1h-1zM126 832h1v1h-1zM125 833h1v1h-1zM127 833h1v1h-1zM126 834h1v1h-1zM186 832h1v1h-1zM185 833h1v1h-1zM187 833h1v1h-1zM186 834h1v1h-1zM246 832h1v1h-1zM245 833h1v1h-1zM247 833h1v1h-1zM246 834h1v1h-1zM306 832h1v1h-1zM305 833h1v1h-1zM307 833h1v1h-1zM306 834h1v1h-1zM366 832h1v1h-1zM365 833h1v1h-1zM367 833h1v1h-1zM366 834h1v1h-1zM426 832h1v1h-1zM425 833h1v1h-1zM427 833h1v1h-1zM426 834h1v1h-1zM486 832h1v1h-1zM485 833h1v1h-1zM487 833h1v1h-1zM486 834h1v1h-1zM546 832h1v1h-1zM545 833h1v1h-1zM547 833h1v1h-1zM546 834h1v1h-1zM606 832h1v1h-1zM605 833h1v1h-1zM607 833h1v1h-1zM606 834h1v1h-1zM666 832h1v1h-1zM665 833h1v1h-1zM667 833h1v1h-1zM666 834h1v1h-1zM726 832h1v1h-1zM725 833h1v1h-1zM727 833h1v1h-1zM726 834h1v1h-1zM786 832h1v1h-1zM785 833h1v1h-1zM787 833h1v1h-1zM786 834h1v1h-1zM846 832h1v1h-1zM845 833h1v1h-1zM847 833h1v1h-1zM846 834h1v1h-1zM906 832h1v1h-1zM905 833h1v1h-1zM907 833h1v1h-1zM906 834h1v1h-1zM966 832h1v1h-1zM965 833h1v1h-1zM967 833h1v1h-1zM966 834h1v1h-1zM1026 832h1v1h-1zM1025 833h1v1h-1zM1027 833h1v1h-1zM1026 834h1v1h-1zM1086 832h1v1h-1zM1085 833h1v1h-1zM1087 833h1v1h-1zM1086 834h1v1h-1zM1146 832h1v1h-1zM1145 833h1v1h-1zM1147 833h1v1h-1zM1146 834h1v1h-1zM1206 832h1v1h-1zM1205 833h1v1h-1zM1207 833h1v1h-1zM1206 834h1v1h-1zM1266 832h1v1h-1zM1265 833h1v1h-1zM1267 833h1v1h-1zM1266 834h1v1h-1zM1326 832h1v1h-1zM1325 833h1v1h-1zM1327 833h1v1h-1zM1326 834h1v1h-1zM66 862h1v1h-1zM65 863h1v1h-1zM67 863h1v1h-1zM66 864h1v1h-1zM126 862h1v1h-1zM125 863h1v1h-1zM127 863h1v1h-1zM126 864h1v1h-1zM186 862h1v1h-1zM185 863h1v1h-1zM187 863h1v1h-1zM186 864h1v1h-1zM246 862h1v1h-1zM245 863h1v1h-1zM247 863h1v1h-1zM246 864h1v1h-1zM306 862h1v1h-1zM305 863h1v1h-1zM307 863h1v1h-1zM306 864h1v1h-1zM366 862h1v1h-1zM365 863h1v1h-1zM367 863h1v1h-1zM366 864h1v1h-1zM426 862h1v1h-1zM425 863h1v1h-1zM427 863h1v1h-1zM426 864h1v1h-1zM486 862h1v1h-1zM485 863h1v1h-1zM487 863h1v1h-1zM486 864h1v1h-1zM546 862h1v1h-1zM545 863h1v1h-1zM547 863h1v1h-1zM546 864h1v1h-1zM606 862h1v1h-1zM605 863h1v1h-1zM607 863h1v1h-1zM606 864h1v1h-1zM666 862h1v1h-1zM665 863h1v1h-1zM667 863h1v1h-1zM666 864h1v1h-1zM726 862h1v1h-1zM725 863h1v1h-1zM727 863h1v1h-1zM726 864h1v1h-1zM786 862h1v1h-1zM785 863h1v1h-1zM787 863h1v1h-1zM786 864h1v1h-1zM846 862h1v1h-1zM845 863h1v1h-1zM847 863h1v1h-1zM846 864h1v1h-1zM906 862h1v1h-1zM905 863h1v1h-1zM907 863h1v1h-1zM906 864h1v1h-1zM966 862h1v1h-1zM965 863h1v1h-1zM967 863h1v1h-1zM966 864h1v1h-1zM1026 862h1v1h-1zM1025 863h1v1h-1zM1027 863h1v1h-1zM1026 864h1v1h-1zM1086 862h1v1h-1zM1085 863h1v1h-1zM1087 863h1v1h-1zM1086 864h1v1h-1zM1146 862h1v1h-1zM1145 863h1v1h-1zM1147 863h1v1h-1zM1146 864h1v1h-1zM1206 862h1v1h-1zM1205 863h1v1h-1zM1207 863h1v1h-1zM1206 864h1v1h-1zM1266 862h1v1h-1zM1265 863h1v1h-1zM1267 863h1v1h-1zM1266 864h1v1h-1zM1326 862h1v1h-1zM1325 863h1v1h-1zM1327 863h1v1h-1zM1326 864h1v1h-1zM66 892h1v1h-1zM65 893h1v1h-1zM67 893h1v1h-1zM66 894h1v1h-1zM126 892h1v1h-1zM125 893h1v1h-1zM127 893h1v1h-1zM126 894h1v1h-1zM186 892h1v1h-1zM185 893h1v1h-1zM187 893h1v1h-1zM186 894h1v1h-1zM246 892h1v1h-1zM245 893h1v1h-1zM247 893h1v1h-1zM246 894h1v1h-1zM306 892h1v1h-1zM305 893h1v1h-1zM307 893h1v1h-1zM306 894h1v1h-1zM366 892h1v1h-1zM365 893h1v1h-1zM367 893h1v1h-1zM366 894h1v1h-1zM426 892h1v1h-1zM425 893h1v1h-1zM427 893h1v1h-1zM426 894h1v1h-1zM486 892h1v1h-1zM485 893h1v1h-1zM487 893h1v1h-1zM486 894h1v1h-1zM546 892h1v1h-1zM545 893h1v1h-1zM547 893h1v1h-1zM546 894h1v1h-1zM606 892h1v1h-1zM605 893h1v1h-1zM607 893h1v1h-1zM606 894h1v1h-1zM666 892h1v1h-1zM665 893h1v1h-1zM667 893h1v1h-1zM666 894h1v1h-1zM726 892h1v1h-1zM725 893h1v1h-1zM727 893h1v1h-1zM726 894h1v1h-1zM786 892h1v1h-1zM785 893h1v1h-1zM787 893h1v1h-1zM786 894h1v1h-1zM846 892h1v1h-1zM845 893h1v1h-1zM847 893h1v1h-1zM846 894h1v1h-1zM906 892h1v1h-1zM905 893h1v1h-1zM907 893h1v1h-1zM906 894h1v1h-1zM966 892h1v1h-1zM965 893h1v1h-1zM967 893h1v1h-1zM966 894h1v1h-1zM1026 892h1v1h-1zM1025 893h1v1h-1zM1027 893h1v1h-1zM1026 894h1v1h-1zM1086 892h1v1h-1zM1085 893h1v1h-1zM1087 893h1v1h-1zM1086 894h1v1h-1zM1146 892h1v1h-1zM1145 893h1v1h-1zM1147 893h1v1h-1zM1146 894h1v1h-1zM1206 892h1v1h-1zM1205 893h1v1h-1zM1207 893h1v1h-1zM1206 894h1v1h-1zM1266 892h1v1h-1zM1265 893h1v1h-1zM1267 893h1v1h-1zM1266 894h1v1h-1zM1326 892h1v1h-1zM1325 893h1v1h-1zM1327 893h1v1h-1zM1326 894h1v1h-1zM66 922h1v1h-1zM65 923h1v1h-1zM67 923h1v1h-1zM66 924h1v1h-1zM126 922h1v1h-1zM125 923h1v1h-1zM127 923h1v1h-1zM126 924h1v1h-1zM186 922h1v1h-1zM185 923h1v1h-1zM187 923h1v1h-1zM186 924h1v1h-1zM246 922h1v1h-1zM245 923h1v1h-1zM247 923h1v1h-1zM246 924h1v1h-1zM306 922h1v1h-1zM305 923h1v1h-1zM307 923h1v1h-1zM306 924h1v1h-1zM366 922h1v1h-1zM365 923h1v1h-1zM367 923h1v1h-1zM366 924h1v1h-1zM426 922h1v1h-1zM425 923h1v1h-1zM427 923h1v1h-1zM426 924h1v1h-1zM486 922h1v1h-1zM485 923h1v1h-1zM487 923h1v1h-1zM486 924h1v1h-1zM546 922h1v1h-1zM545 923h1v1h-1zM547 923h1v1h-1zM546 924h1v1h-1zM606 922h1v1h-1zM605 923h1v1h-1zM607 923h1v1h-1zM606 924h1v1h-1zM666 922h1v1h-1zM665 923h1v1h-1zM667 923h1v1h-1zM666 924h1v1h-1zM726 922h1v1h-1zM725 923h1v1h-1zM727 923h1v1h-1zM726 924h1v1h-1zM786 922h1v1h-1zM785 923h1v1h-1zM787 923h1v1h-1zM786 924h1v1h-1zM846 922h1v1h-1zM845 923h1v1h-1zM847 923h1v1h-1zM846 924h1v1h-1zM906 922h1v1h-1zM905 923h1v1h-1zM907 923h1v1h-1zM906 924h1v1h-1zM966 922h1v1h-1zM965 923h1v1h-1zM967 923h1v1h-1zM966 924h1v1h-1zM1026 922h1v1h-1zM1025 923h1v1h-1zM1027 923h1v1h-1zM1026 924h1v1h-1zM1086 922h1v1h-1zM1085 923h1v1h-1zM1087 923h1v1h-1zM1086 924h1v1h-1zM1146 922h1v1h-1zM1145 923h1v1h-1zM1147 923h1v1h-1zM1146 924h1v1h-1zM1206 922h1v1h-1zM1205 923h1v1h-1zM1207 923h1v1h-1zM1206 924h1v1h-1zM1266 922h1v1h-1zM1265 923h1v1h-1zM1267 923h1v1h-1zM1266 924h1v1h-1zM1326 922h1v1h-1zM1325 923h1v1h-1zM1327 923h1v1h-1zM1326 924h1v1h-1zM66 952h1v1h-1zM65 953h1v1h-1zM67 953h1v1h-1zM66 954h1v1h-1zM126 952h1v1h-1zM125 953h1v1h-1zM127 953h1v1h-1zM126 954h1v1h-1zM186 952h1v1h-1zM185 953h1v1h-1zM187 953h1v1h-1zM186 954h1v1h-1zM246 952h1v1h-1zM245 953h1v1h-1zM247 953h1v1h-1zM246 954h1v1h-1zM306 952h1v1h-1zM305 953h1v1h-1zM307 953h1v1h-1zM306 954h1v1h-1zM366 952h1v1h-1zM365 953h1v1h-1zM367 953h1v1h-1zM366 954h1v1h-1zM426 952h1v1h-1zM425 953h1v1h-1zM427 953h1v1h-1zM426 954h1v1h-1zM486 952h1v1h-1zM485 953h1v1h-1zM487 953h1v1h-1zM486 954h1v1h-1zM546 952h1v1h-1zM545 953h1v1h-1zM547 953h1v1h-1zM546 954h1v1h-1zM606 952h1v1h-1zM605 953h1v1h-1zM607 953h1v1h-1zM606 954h1v1h-1zM666 952h1v1h-1zM665 953h1v1h-1zM667 953h1v1h-1zM666 954h1v1h-1zM726 952h1v1h-1zM725 953h1v1h-1zM727 953h1v1h-1zM726 954h1v1h-1zM786 952h1v1h-1zM785 953h1v1h-1zM787 953h1v1h-1zM786 954h1v1h-1zM846 952h1v1h-1zM845 953h1v1h-1zM847 953h1v1h-1zM846 954h1v1h-1zM906 952h1v1h-1zM905 953h1v1h-1zM907 953h1v1h-1zM906 954h1v1h-1zM966 952h1v1h-1zM965 953h1v1h-1zM967 953h1v1h-1zM966 954h1v1h-1zM1026 952h1v1h-1zM1025 953h1v1h-1zM1027 953h1v1h-1zM1026 954h1v1h-1zM1086 952h1v1h-1zM1085 953h1v1h-1zM1087 953h1v1h-1zM1086 954h1v1h-1zM1146 952h1v1h-1zM1145 953h1v1h-1zM1147 953h1v1h-1zM1146 954h1v1h-1zM1206 952h1v1h-1zM1205 953h1v1h-1zM1207 953h1v1h-1zM1206 954h1v1h-1zM1266 952h1v1h-1zM1265 953h1v1h-1zM1267 953h1v1h-1zM1266 954h1v1h-1zM1326 952h1v1h-1zM1325 953h1v1h-1zM1327 953h1v1h-1zM1326 954h1v1h-1zM66 982h1v1h-1zM65 983h1v1h-1zM67 983h1v1h-1zM66 984h1v1h-1zM126 982h1v1h-1zM125 983h1v1h-1zM127 983h1v1h-1zM126 984h1v1h-1zM186 982h1v1h-1zM185 983h1v1h-1zM187 983h1v1h-1zM186 984h1v1h-1zM246 982h1v1h-1zM245 983h1v1h-1zM247 983h1v1h-1zM246 984h1v1h-1zM306 982h1v1h-1zM305 983h1v1h-1zM307 983h1v1h-1zM306 984h1v1h-1zM366 982h1v1h-1zM365 983h1v1h-1zM367 983h1v1h-1zM366 984h1v1h-1zM426 982h1v1h-1zM425 983h1v1h-1zM427 983h1v1h-1zM426 984h1v1h-1zM486 982h1v1h-1zM485 983h1v1h-1zM487 983h1v1h-1zM486 984h1v1h-1zM546 982h1v1h-1zM545 983h1v1h-1zM547 983h1v1h-1zM546 984h1v1h-1zM606 982h1v1h-1zM605 983h1v1h-1zM607 983h1v1h-1zM606 984h1v1h-1zM666 982h1v1h-1zM665 983h1v1h-1zM667 983h1v1h-1zM666 984h1v1h-1zM726 982h1v1h-1zM725 983h1v1h-1zM727 983h1v1h-1zM726 984h1v1h-1zM786 982h1v1h-1zM785 983h1v1h-1zM787 983h1v1h-1zM786 984h1v1h-1zM846 982h1v1h-1zM845 983h1v1h-1zM847 983h1v1h-1zM846 984h1v1h-1zM906 982h1v1h-1zM905 983h1v1h-1zM907 983h1v1h-1zM906 984h1v1h-1zM966 982h1v1h-1zM965 983h1v1h-1zM967 983h1v1h-1zM966 984h1v1h-1zM1026 982h1v1h-1zM1025 983h1v1h-1zM1027 983h1v1h-1zM1026 984h1v1h-1zM1086 982h1v1h-1zM1085 983h1v1h-1zM1087 983h1v1h-1zM1086 984h1v1h-1zM1146 982h1v1h-1zM1145 983h1v1h-1zM1147 983h1v1h-1zM1146 984h1v1h-1zM1206 982h1v1h-1zM1205 983h1v1h-1zM1207 983h1v1h-1zM1206 984h1v1h-1zM1266 982h1v1h-1zM1265 983h1v1h-1zM1267 983h1v1h-1zM1266 984h1v1h-1zM1326 982h1v1h-1zM1325 983h1v1h-1zM1327 983h1v1h-1zM1326 984h1v1h-1z"/>
<path fill="#ffffff" d="M6 534h1380v1h-1380zM6 1013h1380v1h-1380zM6 534h1v480h-1zM1385 534h1v480h-1zM16 535h1v1h-1zM16 1012h1v1h-1zM26 535h1v1h-1zM26 1012h1v1h-1zM36 535h1v1h-1zM36 1012h1v1h-1zM46 535h1v1h-1zM46 1012h1v1h-1zM56 535h1v1h-1zM56 1012h1v1h-1zM66 535h1v3h-1zM66 1010h1v3h-1zM76 535h1v1h-1zM76 1012h1v1h-1zM86 535h1v1h-1zM86 1012h1v1h-1zM96 535h1v1h-1zM96 1012h1v1h-1zM106 535h1v1h-1zM106 1012h1v1h-1zM116 535h1v1h-1zM116 1012h1v1h-1zM126 535h1v3h-1zM126 1010h1v3h-1zM136 535h1v1h-1zM136 1012h1v1h-1zM146 535h1v1h-1zM146 1012h1v1h-1zM156 535h1v1h-1zM156 1012h1v1h-1zM166 535h1v1h-1zM166 1012h1v1h-1zM176 535h1v1h-1zM176 1012h1v1h-1zM186 535h1v3h-1zM186 1010h1v3h-1zM196 535h1v1h-1zM196 1012h1v1h-1zM206 535h1v1h-1zM206 1012h1v1h-1zM216 535h1v1h-1zM216 1012h1v1h-1zM226 535h1v1h-1zM226 1012h1v1h-1zM236 535h1v1h-1zM236 1012h1v1h-1zM246 535h1v3h-1zM246 1010h1v3h-1zM256 535h1v1h-1zM256 1012h1v1h-1zM266 535h1v1h-1zM266 1012h1v1h-1zM276 535h1v1h-1zM276 1012h1v1h-1zM286 535h1v1h-1zM286 1012h1v1h-1zM296 535h1v1h-1zM296 1012h1v1h-1zM306 535h1v3h-1zM306 1010h1v3h-1zM316 535h1v1h-1zM316 1012h1v1h-1zM326 535h1v1h-1zM326 1012h1v1h-1zM336 535h1v1h-1zM336 1012h1v1h-1zM346 535h1v1h-1zM346 1012h1v1h-1zM356 535h1v1h-1zM356 1012h1v1h-1zM366 535h1v3h-1zM366 1010h1v3h-1zM376 535h1v1h-1zM376 1012h1v1h-1zM386 535h1v1h-1zM386 1012h1v1h-1zM396 535h1v1h-1zM396 1012h1v1h-1zM406 535h1v1h-1zM406 1012h1v1h-1zM416 535h1v1h-1zM416 1012h1v1h-1zM426 535h1v3h-1zM426 1010h1v3h-1zM436 535h1v1h-1zM436 1012h1v1h-1zM446 535h1v1h-1zM446 1012h1v1h-1zM456 535h1v1h-1zM456 1012h1v1h-1zM466 535h1v1h-1zM466 1012h1v1h-1zM476 535h1v1h-1zM476 1012h1v1h-1zM486 535h1v3h-1zM486 1010h1v3h-1zM496 535h1v1h-1zM496 1012h1v1h-1zM506 535h1v1h-1zM506 1012h1v1h-1zM516 535h1v1h-1zM516 1012h1v1h-1zM526 535h1v1h-1zM526 1012h1v1h-1zM536 535h1v1h-1zM536 1012h1v1h-1zM546 535h1v3h-1zM546 1010h1v3h-1zM556 535h1v1h-1zM556 1012h1v1h-1zM566 535h1v1h-1zM566 1012h1v1h-1zM576 535h1v1h-1zM576 1012h1v1h-1zM586 535h1v1h-1zM586 1012h1v1h-1zM596 535h1v1h-1zM596 1012h1v1h-1zM606 535h1v3h-1zM606 1010h1v3h-1zM616 535h1v1h-1zM616 1012h1v1h-1zM626 535h1v1h-1zM626 1012h1v1h-1zM636 535h1v1h-1zM636 1012h1v1h-1zM646 535h1v1h-1zM646 1012h1v1h-1zM656 535h1v1h-1zM656 1012h1v1h-1zM666 535h1v3h-1zM666 1010h1v3h-1zM676 535h1v1h-1zM676 1012h1v1h-1zM686 535h1v1h-1zM686 1012h1v1h-1zM696 535h1v1h-1zM696 1012h1v1h-1zM706 535h1v1h-1zM706 1012h1v1h-1zM716 535h1v1h-1zM716 1012h1v1h-1zM726 535h1v3h-1zM726 1010h1v3h-1zM736 535h1v1h-1zM736 1012h1v1h-1zM746 535h1v1h-1zM746 1012h1v1h-1zM756 535h1v1h-1zM756 1012h1v1h-1zM766 535h1v1h-1zM766 1012h1v1h-1zM776 535h1v1h-1zM776 1012h1v1h-1zM786 535h1v3h-1zM786 1010h1v3h-1zM796 535h1v1h-1zM796 1012h1v1h-1zM806 535h1v1h-1zM806 1012h1v1h-1zM816 535h1v1h-1zM816 1012h1v1h-1zM826 535h1v1h-1zM826 1012h1v1h-1zM836 535h1v1h-1zM836 1012h1v1h-1zM846 535h1v3h-1zM846 1010h1v3h-1zM856 535h1v1h-1zM856 1012h1v1h-1zM866 535h1v1h-1zM866 1012h1v1h-1zM876 535h1v1h-1zM876 1012h1v1h-1zM886 535h1v1h-1zM886 1012h1v1h-1zM896 535h1v1h-1zM896 1012h1v1h-1zM906 535h1v3h-1zM906 1010h1v3h-1zM916 535h1v1h-1zM916 1012h1v1h-1zM926 535h1v1h-1zM926 1012h1v1h-1zM936 535h1v1h-1zM936 1012h1v1h-1zM946 535h1v1h-1zM946 1012h1v1h-1zM956 535h1v1h-1zM956 1012h1v1h-1zM966 535h1v3h-1zM966 1010h1v3h-1zM976 535h1v1h-1zM976 1012h1v1h-1zM986 535h1v1h-1zM986 1012h1v1h-1zM996 535h1v1h-1zM996 1012h1v1h-1zM1006 535h1v1h-1zM1006 1012h1v1h-1zM1016 535h1v1h-1zM1016 1012h1v1h-1zM1026 535h1v3h-1zM1026 1010h1v3h-1zM1036 535h1v1h-1zM1036 1012h1v1h-1zM1046 535h1v1h-1zM1046 1012h1v1h-1zM1056 535h1v1h-1zM1056 1012h1v1h-1zM1066 535h1v1h-1zM1066 1012h1v1h-1zM1076 535h1v1h-1zM1076 1012h1v1h-1zM1086 535h1v3h-1zM1086 1010h1v3h-1zM1096 535h1v1h-1zM1096 1012h1v1h-1zM1106 535h1v1h-1zM1106 1012h1v1h-1zM1116 535h1v1h-1zM1116 1012h1v1h-1zM1126 535h1v1h-1zM1126 1012h1v1h-1zM1136 535h1v1h-1zM1136 1012h1v1h-1zM1146 535h1v3h-1zM1146 1010h1v3h-1zM1156 535h1v1h-1zM1156 1012h1v1h-1zM1166 535h1v1h-1zM1166 1012h1v1h-1zM1176 535h1v1h-1zM1176 1012h1v1h-1zM1186 535h1v1h-1zM1186 1012h1v1h-1zM1196 535h1v1h-1zM1196 1012h1v1h-1zM1206 535h1v3h-1zM1206 1010h1v3h-1zM1216 535h1v1h-1zM1216 1012h1v1h-1zM1226 535h1v1h-1zM1226 1012h1v1h-1zM1236 535h1v1h-1zM1236 1012h1v1h-1zM1246 535h1v1h-1zM1246 1012h1v1h-1zM1256 535h1v1h-1zM1256 1012h1v1h-1zM1266 535h1v3h-1zM1266 1010h1v3h-1zM1276 535h1v1h-1zM1276 1012h1v1h-1zM1286 535h1v1h-1zM1286 1012h1v1h-1zM1296 535h1v1h-1zM1296 1012h1v1h-1zM1306 535h1v1h-1zM1306 1012h1v1h-1zM1316 535h1v1h-1zM1316 1012h1v1h-1zM1326 535h1v3h-1zM1326 1010h1v3h-1zM1336 535h1v1h-1zM1336 1012h1v1h-1zM1346 535h1v1h-1zM1346 1012h1v1h-1zM1356 535h1v1h-1zM1356 1012h1v1h-1zM1366 535h1v1h-1zM1366 1012h1v1h-1zM1376 535h1v1h-1zM1376 1012h1v1h-1zM7 539h1v1h-1zM1384 539h1v1h-1zM7 545h1v1h-1zM1384 545h1v1h-1zM7 551h1v1h-1zM1384 551h1v1h-1zM7 557h1v1h-1zM1384 557h1v1h-1zM7 563h3v1h-3zM1382 563h3v1h-3zM7 569h1v1h-1zM1384 569h1v1h-1zM7 575h1v1h-1zM1384 575h1v1h-1zM7 581h1v1h-1zM1384 581h1v1h-1zM7 587h1v1h-1zM1384 587h1v1h-1zM7 593h3v1h-3zM1382 593h3v1h-3zM7 599h1v1h-1zM1384 599h1v1h-1zM7 605h1v1h-1zM1384 605h1v1h-1zM7 611h1v1h-1zM1384 611h1v1h-1zM7 617h1v1h-1zM1384 617h1v1h-1zM7 623h3v1h-3zM1382 623h3v1h-3zM7 629h1v1h-1zM1384 629h1v1h-1zM7 635h1v1h-1zM1384 635h1v1h-1zM7 641h1v1h-1zM1384 641h1v1h-1zM7 647h1v1h-1zM1384 647h1v1h-1zM7 653h3v1h-3zM1382 653h3v1h-3zM7 659h1v1h-1zM1384 659h1v1h-1zM7 665h1v1h-1zM1384 665h1v1h-1zM7 671h1v1h-1zM1384 671h1v1h-1zM7 677h1v1h-1zM1384 677h1v1h-1zM7 683h3v1h-3zM1382 683h3v1h-3zM7 689h1v1h-1zM1384 689h1v1h-1zM7 695h1v1h-1zM1384 695h1v1h-1zM7 701h1v1h-1zM1384 701h1v1h-1zM7 707h1v1h-1zM1384 707h1v1h-1zM7 713h3v1h-3zM1382 713h3v1h-3zM7 719h1v1h-1zM1384 719h1v1h-1zM7 725h1v1h-1zM1384 725h1v1h-1zM7 731h1v1h-1zM1384 731h1v1h-1zM7 737h1v1h-1zM1384 737h1v1h-1zM7 743h3v1h-3zM1382 743h3v1h-3zM7 749h1v1h-1zM1384 749h1v1h-1zM7 755h1v1h-1zM1384 755h1v1h-1zM7 761h1v1h-1zM1384 761h1v1h-1zM7 767h1v1h-1zM1384 767h1v1h-1zM7 773h3v1h-3zM1382 773h3v1h-3zM7 779h1v1h-1zM1384 779h1v1h-1zM7 785h1v1h-1zM1384 785h1v1h-1zM7 791h1v1h-1zM1384 791h1v1h-1zM7 797h1v1h-1zM1384 797h1v1h-1zM7 803h3v1h-3zM1382 803h3v1h-3zM7 809h1v1h-1zM1384 809h1v1h-1zM7 815h1v1h-1zM1384 815h1v1h-1zM7 821h1v1h-1zM1384 821h1v1h-1zM7 827h1v1h-1zM1384 827h1v1h-1zM7 833h3v1h-3zM1382 833h3v1h-3zM7 839h1v1h-1zM1384 839h1v1h-1zM7 845h1v1h-1zM1384 845h1v1h-1zM7 851h1v1h-1zM1384 851h1v1h-1zM7 857h1v1h-1zM1384 857h1v1h-1zM7 863h3v1h-3zM1382 863h3v1h-3zM7 869h1v1h-1zM1384 869h1v1h-1zM7 875h1v1h-1zM1384 875h1v1h-1zM7 881h1v1h-1zM1384 881h1v1h-1zM7 887h1v1h-1zM1384 887h1v1h-1zM7 893h3v1h-3zM1382 893h3v1h-3zM7 899h1v1h-1zM1384 899h1v1h-1zM7 905h1v1h-1zM1384 905h1v1h-1zM7 911h1v1h-1zM1384 911h1v1h-1zM7 917h1v1h-1zM1384 917h1v1h-1zM7 923h3v1h-3zM1382 923h3v1h-3zM7 929h1v1h-1zM1384 929h1v1h-1zM7 935h1v1h-1zM1384 935h1v1h-1zM7 941h1v1h-1zM1384 941h1v1h-1zM7 947h1v1h-1zM1384 947h1v1h-1zM7 953h3v1h-3zM1382 953h3v1h-3zM7 959h1v1h-1zM1384 959h1v1h-1zM7 965h1v1h-1zM1384 965h1v1h-1zM7 971h1v1h-1zM1384 971h1v1h-1zM7 977h1v1h-1zM1384 977h1v1h-1zM7 983h3v1h-3zM1382 983h3v1h-3zM7 989h1v1h-1zM1384 989h1v1h-1zM7 995h1v1h-1zM1384 995h1v1h-1zM7 1001h1v1h-1zM1384 1001h1v1h-1zM7 1007h1v1h-1zM1384 1007h1v1h-1z"/>
<path fill="#00ffff" d="M6 966h1380v1h-1380z"/>
<polyline fill="none" stroke="#ff00ff" stroke-width="1" shape-rendering="crispEdges" points="6,903 11,904.2 16,906.4 21,908 25,907.1 29,906.9 33,906.4 37,905.5 41,904.7 45,904.6 49,906.1 53,905.1 57,905.5 61.3,904 65.7,904.4 70,902.5 74,902.7 78,903.6 82,903.2 86,903.5 90.3,904.4 94.7,904.2 99,905.5 103.2,904.7 107.5,904.2 111.8,902.5 116,901.5 120,903.4 124,904.8 128,906 132,905.5 136,907 140,906.9 144,906.6 148,906.4 152,907.5 159,906 163,905.5 167,903.6 171,902.5 175.3,904.6 179.7,906.5 184,907.5 189,909.9 194,912.3 199,913.5 203,912.3 207,912 211,910.5 215.5,910.7 220,911.8 224.5,911.9 229,911.5 233.3,910.3 237.7,909.8 242,910 246.5,912.2 251,916.3 255.5,918.1 260,921 265,921.2 270,920.6 275,921 279,920.2 283,919.1 287,918.5 291.7,918.2 296.3,918.7 301,918.5 305.7,917.8 310.3,917.6 315,916 319.5,915.2 324,914.5 328.5,913.3 333,911.5 337,913.2 341,913.4 345,913.3 349,915.3 353,915.5 357,917 361,917.6 365,917.7 369,918.7 373,919 377.2,919.1 381.5,920.8 385.8,921 390,921.5 394.5,920.7 399,920 403.5,921 408,920 412.8,918.9 417.5,915.3 422.2,914.5 427,912 432,911.3 437,911 441.8,911.1 446.5,912.1 451.2,913.7 456,914 461.5,914.2 467,913 471.7,913.2 476.3,915.2 481,916 485.8,913.7 490.5,913.4 495.2,911.2 500,910 504.7,909.7 509.3,908.9 514,907 518.1,906.9 522.2,907.8 526.4,906.5 530.5,906 534.6,906.9 538.8,905.8 542.9,906 547,906.5 551.4,906.1 555.8,906.3 560.2,905.3 564.6,904.9 569,905.5 574.5,907.2 580,907.5 585,906.2 590,906.3 595,904.5 599.5,906.2 604,906.3 608.5,907.4 613,908.5 618.5,906.5 624,904.5 628.5,904 633,903.2 637.5,902.4 642,901.5 646.8,902.1 651.5,903 656.2,902.6 661,903 665.7,901.5 670.3,900.7 675,899 679.5,898.2 684,897.9 688.5,898.7 693,897.5 698.5,898.8 704,900 708.8,901.5 713.5,901.9 718.2,904 723,905.5 727.7,904 732.3,901.3 737,900.5 742,901 747,901.4 752,901.5 757,902 762,904.4 767,905.5 771.7,904.6 776.3,904.2 781,903 786,903.2 791,904.4 796,904.5 800.7,903.9 805.3,901.6 810,901.5 814.8,898.8 819.5,898.1 824.2,896.7 829,894 836,892.5 841.5,894.6 847,897.5 852.5,898.2 858,899 863,900.5 868,901.3 873,903 877.2,903.6 881.5,904.4 885.8,905.4 890,906.5 894.3,907.8 898.7,908.5 903,910 907,908.3 911,907.5 915,904.6 919,904 923.7,905.5 928.3,907.1 933,908 938,907.3 943,906.8 948,907 953.5,903.5 959,899 963.5,900 968,901.4 972.5,903.4 977,905 981.7,904.2 986.3,901.9 991,901.5 996,901.2 1001,901.2 1006,901.5 1010.7,903.6 1015.3,904.4 1020,906 1024.3,905.4 1028.7,902.9 1033,902 1037.3,901.3 1041.7,900.4 1046,898.5 1050.7,898.6 1055.3,898.3 1060,899 1064.2,899.2 1068.3,900.9 1072.5,901.2 1076.7,903.2 1080.8,904.2 1085,904.5 1089.3,902.1 1093.7,900.4 1098,899.6 1102.3,897.4 1106.7,895.9 1111,893.5 1115.5,893 1120,892.3 1124.5,892.4 1129,892.5 1133.1,893.2 1137.3,892.4 1141.4,892.7 1145.6,892.9 1149.7,893.1 1153.9,893.2 1158,893.5 1162.7,895.6 1167.3,895.5 1172,897.5 1176.5,895 1181,895 1185.5,893.3 1190,891 1195,892.7 1200,892.5 1205,893.5 1209.7,893.8 1214.3,893.3 1219,892 1223.8,892.5 1228.5,894.4 1233.2,895.6 1238,896 1242.7,895 1247.3,893.4 1252,892 1256.1,891 1260.3,890.6 1264.4,889.8 1268.6,888.9 1272.7,889.3 1276.9,888.2 1281,888 1285.5,889.3 1290,888.7 1294.5,891 1299,891 1303.5,891 1308,891 1312.5,890.6 1317,889.5 1322,890.7 1327,890.6 1332,891 1336.5,890 1341,891.2 1345.5,890 1350,890.5 1354.7,890.8 1359.3,892.1 1364,892.5 1369.5,890.3 1375,888 1380,885.6 1385,883.5"/>
<polyline fill="none" stroke="#ff3c3c" stroke-width="1" shape-rendering="crispEdges" points="6,611.5 66,617.5 126,658.5 186,670.5 246,677.5 306,717 426,736.5 486,774 606,795 666,828.5 726,846"/>
<polyline fill="none" stroke="#4848ff" stroke-width="1" shape-rendering="crispEdges" points="6,696.5 66,701.5 126,701 186,700.5 246,705.5 306,717 366,724 426,731.5 486,746 606,761.5 666,776 726,784"/>
<path fill="#ffffff" d="M7 768h1v1h-1zM8 767h1v2h-1zM9 768h1v3h-1zM10 770h1v2h-1zM11 770h1v2h-1zM12 770h1v1h-1zM13 764h1v4h-1zM14 769h1v7h-1zM15 769h1v4h-1zM16 769h1v1h-1zM17 768h1v2h-1zM18 768h1v1h-1zM19 768h1v2h-1zM20 769h1v2h-1zM21 771h1v2h-1zM22 769h1v3h-1zM23 771h1v3h-1zM24 762h1v7h-1zM25 766h1v5h-1zM26 770h1v2h-1zM27 772h1v2h-1zM28 766h1v5h-1zM29 770h1v5h-1zM30 770h1v3h-1zM31 765h1v4h-1zM32 768h1v4h-1zM33 769h1v2h-1zM34 770h1v2h-1zM35 771h1v1h-1zM36 768h1v3h-1zM37 767h1v2h-1zM38 767h1v1h-1zM39 765h1v2h-1zM40 765h1v2h-1zM41 766h1v2h-1zM42 769h1v3h-1zM43 764h1v5h-1zM44 766h1v3h-1zM45 765h1v3h-1zM46 769h1v5h-1zM47 770h1v3h-1zM48 770h1v1h-1zM49 769h1v2h-1zM50 769h1v1h-1zM51 770h1v2h-1zM52 770h1v2h-1zM53 769h1v2h-1zM54 771h1v3h-1zM55 770h1v3h-1zM56 770h1v2h-1zM57 771h1v1h-1zM58 770h1v2h-1zM59 767h1v3h-1zM60 769h1v4h-1zM61 770h1v2h-1zM62 770h1v1h-1zM63 770h1v1h-1zM64 773h1v4h-1zM65 771h1v4h-1zM66 767h1v3h-1zM67 769h1v3h-1zM68 766h1v4h-1zM69 769h1v5h-1zM70 770h1v3h-1zM71 766h1v3h-1zM72 766h1v1h-1zM73 770h1v5h-1zM74 773h1v2h-1zM75 769h1v3h-1zM76 772h1v4h-1zM77 765h1v6h-1zM78 765h1v2h-1zM79 766h1v1h-1zM80 770h1v5h-1zM81 769h1v4h-1zM82 768h1v2h-1zM83 764h1v3h-1zM84 768h1v5h-1zM85 771h1v2h-1zM86 768h1v3h-1zM87 766h1v2h-1zM88 766h1v1h-1zM89 771h1v6h-1zM90 768h1v5h-1zM91 763h1v4h-1zM92 766h1v5h-1zM93 771h1v3h-1zM94 770h1v3h-1zM95 769h1v2h-1zM96 770h1v3h-1zM97 771h1v2h-1zM98 764h1v5h-1zM99 767h1v4h-1zM100 768h1v2h-1zM101 766h1v2h-1zM102 766h1v1h-1zM103 769h1v4h-1zM104 770h1v2h-1zM105 768h1v2h-1zM106 766h1v2h-1zM107 766h1v2h-1zM108 766h1v2h-1zM109 761h1v4h-1zM110 765h1v6h-1zM111 770h1v1h-1zM112 768h1v2h-1zM113 768h1v1h-1zM114 769h1v3h-1zM115 772h1v2h-1zM116 763h1v6h-1zM117 767h1v5h-1zM118 771h1v2h-1zM119 767h1v4h-1zM120 765h1v2h-1zM121 767h1v4h-1zM122 772h1v3h-1zM123 774h1v2h-1zM124 774h1v2h-1zM125 764h1v6h-1zM126 766h1v4h-1zM127 769h1v2h-1zM128 770h1v1h-1zM129 770h1v2h-1zM130 768h1v3h-1zM131 769h1v3h-1zM132 770h1v2h-1zM133 770h1v1h-1zM134 770h1v1h-1zM135 771h1v3h-1zM136 773h1v1h-1zM137 772h1v2h-1zM138 767h1v4h-1zM139 766h1v2h-1zM140 767h1v3h-1zM141 771h1v4h-1zM142 768h1v4h-1zM143 768h1v2h-1zM144 771h1v3h-1zM145 771h1v2h-1zM146 759h1v7h-1zM147 764h1v6h-1zM148 770h1v2h-1zM149 767h1v3h-1zM150 768h1v3h-1zM151 770h1v2h-1zM152 773h1v3h-1zM153 769h1v4h-1zM154 770h1v2h-1zM155 772h1v3h-1zM156 773h1v2h-1zM157 765h1v5h-1zM158 768h1v4h-1zM159 772h1v2h-1zM160 767h1v4h-1zM161 766h1v2h-1zM162 766h1v2h-1zM163 769h1v3h-1zM164 771h1v1h-1zM165 770h1v2h-1zM166 770h1v1h-1zM167 770h1v2h-1zM168 772h1v2h-1zM169 766h1v5h-1zM170 768h1v3h-1zM171 770h1v1h-1zM172 769h1v2h-1zM173 769h1v1h-1zM174 769h1v2h-1zM175 767h1v3h-1zM176 769h1v3h-1zM177 759h1v7h-1zM178 765h1v8h-1zM179 771h1v2h-1zM180 769h1v2h-1zM181 763h1v4h-1zM182 767h1v6h-1zM183 772h1v1h-1zM184 767h1v4h-1zM185 767h1v2h-1zM186 769h1v2h-1zM187 772h1v4h-1zM188 771h1v3h-1zM189 769h1v2h-1zM190 769h1v1h-1zM191 769h1v1h-1zM192 768h1v2h-1zM193 770h1v3h-1zM194 764h1v5h-1zM195 764h1v2h-1zM196 770h1v7h-1zM197 774h1v2h-1zM198 770h1v3h-1zM199 770h1v2h-1zM200 766h1v4h-1zM201 767h1v2h-1zM202 769h1v3h-1zM203 769h1v2h-1zM204 769h1v1h-1zM205 769h1v1h-1zM206 764h1v4h-1zM207 768h1v5h-1zM208 770h1v2h-1zM209 770h1v2h-1zM210 772h1v2h-1zM211 768h1v4h-1zM212 768h1v2h-1zM213 769h1v1h-1zM214 770h1v2h-1zM215 771h1v1h-1zM216 769h1v2h-1zM217 770h1v2h-1zM218 771h1v1h-1zM219 771h1v1h-1zM220 771h1v1h-1zM221 772h1v2h-1zM222 771h1v2h-1zM223 766h1v4h-1zM224 769h1v4h-1zM225 766h1v4h-1zM226 769h1v4h-1zM227 769h1v3h-1zM228 769h1v1h-1zM229 767h1v2h-1zM230 768h1v3h-1zM231 770h1v1h-1zM232 768h1v2h-1zM233 769h1v3h-1zM234 769h1v2h-1zM235 766h1v3h-1zM236 768h1v4h-1zM237 771h1v1h-1zM238 770h1v2h-1zM239 769h1v2h-1zM240 766h1v3h-1zM241 768h1v3h-1zM242 771h1v3h-1zM243 773h1v1h-1zM244 771h1v2h-1zM245 772h1v2h-1zM246 773h1v1h-1zM247 768h1v4h-1zM248 770h1v3h-1zM249 772h1v2h-1zM250 772h1v2h-1zM251 769h1v3h-1zM252 768h1v2h-1zM253 769h1v2h-1zM254 768h1v2h-1zM255 767h1v2h-1zM256 766h1v2h-1zM257 766h1v1h-1zM258 766h1v1h-1zM259 766h1v1h-1zM260 767h1v2h-1zM261 768h1v2h-1zM262 770h1v3h-1zM263 767h1v4h-1zM264 768h1v3h-1zM265 766h1v3h-1zM266 768h1v4h-1zM267 771h1v1h-1zM268 772h1v3h-1zM269 768h1v4h-1zM270 768h1v2h-1zM271 771h1v3h-1zM272 766h1v5h-1zM273 768h1v4h-1zM274 771h1v2h-1zM275 767h1v4h-1zM276 769h1v4h-1zM277 771h1v2h-1zM278 770h1v2h-1zM279 770h1v2h-1zM280 768h1v3h-1zM281 770h1v3h-1zM282 770h1v2h-1zM283 770h1v2h-1zM284 769h1v2h-1zM285 771h1v3h-1zM286 772h1v2h-1zM287 769h1v3h-1zM288 767h1v2h-1zM289 770h1v5h-1zM290 765h1v6h-1zM291 766h1v2h-1zM292 768h1v3h-1zM293 770h1v2h-1zM294 765h1v4h-1zM295 767h1v4h-1zM296 768h1v2h-1zM297 766h1v2h-1zM298 767h1v3h-1zM299 769h1v1h-1zM300 766h1v3h-1zM301 766h1v2h-1zM302 768h1v3h-1zM303 770h1v1h-1zM304 768h1v2h-1zM305 765h1v3h-1zM306 766h1v3h-1zM307 769h1v3h-1zM308 771h1v1h-1zM309 768h1v3h-1zM310 768h1v2h-1zM311 769h1v2h-1zM312 770h1v1h-1zM313 770h1v1h-1zM314 767h1v3h-1zM315 770h1v4h-1zM316 771h1v2h-1zM317 764h1v5h-1zM318 768h1v6h-1zM319 773h1v1h-1zM320 766h1v5h-1zM321 769h1v4h-1zM322 769h1v3h-1zM323 770h1v2h-1zM324 766h1v4h-1zM325 771h1v6h-1zM326 770h1v4h-1zM327 770h1v1h-1zM328 768h1v2h-1zM329 769h1v2h-1zM330 770h1v2h-1zM331 771h1v2h-1zM332 768h1v3h-1zM333 769h1v2h-1zM334 770h1v1h-1zM335 766h1v3h-1zM336 767h1v2h-1zM337 765h1v3h-1zM338 770h1v6h-1zM339 772h1v3h-1zM340 769h1v3h-1zM341 771h1v3h-1zM342 766h1v5h-1zM343 770h1v5h-1zM344 775h1v2h-1zM345 769h1v5h-1zM346 769h1v2h-1zM347 770h1v1h-1zM348 769h1v2h-1zM349 770h1v2h-1zM350 769h1v2h-1zM351 771h1v4h-1zM352 770h1v3h-1zM353 766h1v3h-1zM354 770h1v5h-1zM355 771h1v3h-1zM356 772h1v3h-1zM357 771h1v3h-1zM358 766h1v4h-1zM359 768h1v3h-1zM360 770h1v2h-1zM361 770h1v2h-1zM362 768h1v2h-1zM363 768h1v2h-1zM364 769h1v1h-1zM365 768h1v2h-1zM366 770h1v4h-1zM367 767h1v4h-1zM368 770h1v4h-1zM369 766h1v5h-1zM370 768h1v4h-1zM371 766h1v4h-1zM372 769h1v5h-1zM373 769h1v3h-1zM374 767h1v2h-1zM375 769h1v4h-1zM376 769h1v3h-1zM377 770h1v3h-1zM378 769h1v3h-1zM379 770h1v2h-1zM380 771h1v1h-1zM381 772h1v2h-1zM382 770h1v3h-1zM383 770h1v2h-1zM384 766h1v4h-1zM385 766h1v1h-1zM386 767h1v3h-1zM387 769h1v1h-1zM388 765h1v3h-1zM389 768h1v4h-1zM390 768h1v3h-1zM391 771h1v4h-1zM392 774h1v1h-1zM393 773h1v2h-1zM394 774h1v3h-1zM395 770h1v4h-1zM396 772h1v4h-1zM397 765h1v6h-1zM398 764h1v2h-1zM399 766h1v3h-1zM400 767h1v2h-1zM401 768h1v2h-1zM402 766h1v3h-1zM403 769h1v4h-1zM404 770h1v2h-1zM405 771h1v2h-1zM406 767h1v4h-1zM407 767h1v1h-1zM408 767h1v2h-1zM409 769h1v3h-1zM410 768h1v3h-1zM411 772h1v5h-1zM412 771h1v4h-1zM413 771h1v1h-1zM414 768h1v3h-1zM415 771h1v5h-1zM416 768h1v5h-1zM417 769h1v3h-1zM418 771h1v1h-1zM419 768h1v3h-1zM420 769h1v3h-1zM421 770h1v2h-1zM422 766h1v3h-1zM423 768h1v3h-1zM424 766h1v3h-1zM425 766h1v1h-1zM426 768h1v4h-1zM427 768h1v3h-1zM428 770h1v4h-1zM429 766h1v5h-1zM430 768h1v3h-1zM431 768h1v2h-1zM432 771h1v5h-1zM433 770h1v4h-1zM434 767h1v3h-1zM435 768h1v3h-1zM436 771h1v3h-1zM437 771h1v2h-1zM438 768h1v3h-1zM439 766h1v2h-1zM440 769h1v4h-1zM441 765h1v5h-1zM442 767h1v4h-1zM443 769h1v2h-1zM444 769h1v2h-1zM445 771h1v2h-1zM446 767h1v4h-1zM447 767h1v1h-1zM448 767h1v2h-1zM449 770h1v4h-1zM450 772h1v2h-1zM451 768h1v3h-1zM452 767h1v2h-1zM453 767h1v2h-1zM454 768h1v2h-1zM455 768h1v2h-1zM456 768h1v2h-1zM457 771h1v3h-1zM458 767h1v4h-1zM459 770h1v5h-1zM460 772h1v2h-1zM461 768h1v3h-1zM462 768h1v2h-1zM463 769h1v1h-1zM464 771h1v4h-1zM465 767h1v5h-1zM466 770h1v5h-1zM467 766h1v5h-1zM468 767h1v2h-1zM469 769h1v3h-1zM470 772h1v2h-1zM471 770h1v3h-1zM472 768h1v2h-1zM473 770h1v4h-1zM474 768h1v4h-1zM475 767h1v2h-1zM476 766h1v2h-1zM477 766h1v2h-1zM478 770h1v5h-1zM479 771h1v3h-1zM480 768h1v3h-1zM481 769h1v3h-1zM482 768h1v3h-1zM483 766h1v2h-1zM484 765h1v2h-1zM485 768h1v4h-1zM486 767h1v3h-1zM487 769h1v4h-1zM488 769h1v3h-1zM489 770h1v3h-1zM490 772h1v1h-1zM491 773h1v3h-1zM492 774h1v2h-1zM493 772h1v2h-1zM494 773h1v3h-1zM495 773h1v2h-1zM496 770h1v3h-1zM497 769h1v2h-1zM498 770h1v2h-1zM499 773h1v4h-1zM500 771h1v4h-1zM501 772h1v2h-1zM502 769h1v3h-1zM503 767h1v2h-1zM504 769h1v4h-1zM505 773h1v2h-1zM506 771h1v3h-1zM507 768h1v3h-1zM508 766h1v2h-1zM509 769h1v4h-1zM510 768h1v3h-1zM511 768h1v2h-1zM512 768h1v2h-1zM513 771h1v4h-1zM514 766h1v5h-1zM515 766h1v2h-1zM516 770h1v5h-1zM517 765h1v6h-1zM518 768h1v5h-1zM519 769h1v3h-1zM520 764h1v4h-1zM521 765h1v3h-1zM522 767h1v2h-1zM523 770h1v3h-1zM524 772h1v1h-1zM525 767h1v4h-1zM526 767h1v1h-1zM527 768h1v2h-1zM528 769h1v2h-1zM529 770h1v1h-1zM530 770h1v2h-1zM531 771h1v1h-1zM532 771h1v1h-1zM533 772h1v3h-1zM534 770h1v3h-1zM535 770h1v2h-1zM536 771h1v1h-1zM537 764h1v5h-1zM538 767h1v4h-1zM539 766h1v3h-1zM540 769h1v4h-1zM541 768h1v3h-1zM542 771h1v4h-1zM543 766h1v5h-1zM544 768h1v4h-1zM545 771h1v1h-1zM546 769h1v2h-1zM547 768h1v2h-1zM548 768h1v2h-1zM549 768h1v2h-1zM550 767h1v2h-1zM551 769h1v4h-1zM552 767h1v4h-1zM553 768h1v3h-1zM554 771h1v3h-1zM555 770h1v3h-1zM556 768h1v2h-1zM557 766h1v2h-1zM558 766h1v2h-1zM559 766h1v2h-1zM560 767h1v2h-1zM561 770h1v4h-1zM562 773h1v2h-1zM563 768h1v4h-1zM564 768h1v2h-1zM565 770h1v2h-1zM566 764h1v5h-1zM567 767h1v4h-1zM568 771h1v3h-1zM569 769h1v3h-1zM570 766h1v3h-1zM571 770h1v5h-1zM572 771h1v3h-1zM573 770h1v2h-1zM574 768h1v2h-1zM575 760h1v5h-1zM576 764h1v5h-1zM577 770h1v4h-1zM578 765h1v5h-1zM579 769h1v5h-1zM580 768h1v4h-1zM581 757h1v7h-1zM582 764h1v9h-1zM583 770h1v2h-1zM584 769h1v2h-1zM585 773h1v5h-1zM586 769h1v5h-1zM587 765h1v3h-1zM588 765h1v1h-1zM589 768h1v5h-1zM590 768h1v3h-1zM591 769h1v3h-1zM592 770h1v2h-1zM593 770h1v2h-1zM594 770h1v2h-1zM595 771h1v2h-1zM596 771h1v2h-1zM597 766h1v4h-1zM598 767h1v2h-1zM599 768h1v2h-1zM600 770h1v2h-1zM601 771h1v1h-1zM602 772h1v2h-1zM603 774h1v2h-1zM604 766h1v6h-1zM605 769h1v5h-1zM606 767h1v4h-1zM607 768h1v3h-1zM608 770h1v1h-1zM609 767h1v3h-1zM610 766h1v2h-1zM611 767h1v3h-1zM612 769h1v1h-1zM613 772h1v5h-1zM614 776h1v1h-1zM615 768h1v5h-1zM616 769h1v3h-1zM617 774h1v4h-1zM618 771h1v4h-1zM619 771h1v1h-1zM620 768h1v3h-1zM621 769h1v3h-1zM622 771h1v1h-1zM623 769h1v2h-1zM624 769h1v2h-1zM625 770h1v2h-1zM626 769h1v2h-1zM627 770h1v2h-1zM628 769h1v2h-1zM629 770h1v2h-1zM630 770h1v2h-1zM631 770h1v1h-1zM632 771h1v3h-1zM633 768h1v4h-1zM634 768h1v2h-1zM635 770h1v3h-1zM636 765h1v5h-1zM637 767h1v3h-1zM638 770h1v2h-1zM639 770h1v2h-1zM640 768h1v2h-1zM641 771h1v4h-1zM642 764h1v6h-1zM643 767h1v4h-1zM644 771h1v2h-1zM645 765h1v5h-1zM646 767h1v3h-1zM647 766h1v3h-1zM648 766h1v2h-1zM649 767h1v2h-1zM650 769h1v3h-1zM651 770h1v2h-1zM652 771h1v2h-1zM653 772h1v2h-1zM654 772h1v2h-1zM655 766h1v4h-1zM656 767h1v3h-1zM657 765h1v3h-1zM658 768h1v5h-1zM659 763h1v6h-1zM660 766h1v5h-1zM661 768h1v2h-1zM662 768h1v1h-1zM663 766h1v2h-1zM664 771h1v6h-1zM665 775h1v2h-1zM666 767h1v5h-1zM667 768h1v3h-1zM668 767h1v3h-1zM669 764h1v3h-1zM670 766h1v3h-1zM671 764h1v3h-1zM672 765h1v3h-1zM673 768h1v3h-1zM674 770h1v1h-1zM675 770h1v2h-1zM676 771h1v2h-1zM677 770h1v2h-1zM678 769h1v2h-1zM679 768h1v2h-1zM680 769h1v2h-1zM681 770h1v2h-1zM682 771h1v1h-1zM683 768h1v3h-1zM684 769h1v3h-1zM685 765h1v4h-1zM686 766h1v3h-1zM687 769h1v3h-1zM688 771h1v2h-1zM689 769h1v3h-1zM690 768h1v2h-1zM691 771h1v5h-1zM692 771h1v3h-1zM693 771h1v2h-1zM694 771h1v2h-1zM695 763h1v5h-1zM696 767h1v5h-1zM697 772h1v2h-1zM698 769h1v3h-1zM699 768h1v2h-1zM700 768h1v1h-1zM701 771h1v4h-1zM702 771h1v3h-1zM703 770h1v2h-1zM704 770h1v1h-1zM705 771h1v3h-1zM706 769h1v3h-1zM707 736h1v18h-1zM708 753h1v19h-1zM709 766h1v4h-1zM710 768h1v3h-1zM711 766h1v3h-1zM712 767h1v3h-1zM713 767h1v2h-1zM714 769h1v4h-1zM715 763h1v6h-1zM716 763h1v1h-1zM717 765h1v3h-1zM718 763h1v3h-1zM719 768h1v6h-1zM720 774h1v2h-1zM721 770h1v4h-1zM722 767h1v3h-1zM723 768h1v2h-1zM724 769h1v1h-1zM725 769h1v2h-1zM726 768h1v2h-1zM727 771h1v4h-1zM728 769h1v4h-1zM729 769h1v1h-1zM730 768h1v2h-1zM731 768h1v1h-1zM732 766h1v2h-1zM733 767h1v3h-1zM734 761h1v5h-1zM735 765h1v6h-1zM736 768h1v2h-1zM737 770h1v4h-1zM738 770h1v3h-1zM739 773h1v5h-1zM740 767h1v6h-1zM741 765h1v2h-1zM742 769h1v5h-1zM743 765h1v5h-1zM744 770h1v6h-1zM745 771h1v3h-1zM746 772h1v2h-1zM747 771h1v2h-1zM748 769h1v2h-1zM749 769h1v2h-1zM750 770h1v1h-1zM751 767h1v3h-1zM752 767h1v1h-1zM753 769h1v3h-1zM754 770h1v2h-1zM755 769h1v2h-1zM756 769h1v2h-1zM757 771h1v2h-1zM758 772h1v1h-1zM759 772h1v2h-1zM760 763h1v6h-1zM761 766h1v5h-1zM762 769h1v2h-1zM763 769h1v1h-1zM764 769h1v2h-1zM765 770h1v1h-1zM766 766h1v3h-1zM767 768h1v3h-1zM768 771h1v2h-1zM769 768h1v3h-1zM770 768h1v1h-1zM771 769h1v2h-1zM772 769h1v2h-1zM773 766h1v3h-1zM774 769h1v5h-1zM775 766h1v5h-1zM776 768h1v3h-1zM777 770h1v1h-1zM778 769h1v2h-1zM779 766h1v3h-1zM780 766h1v1h-1zM781 768h1v3h-1zM782 769h1v2h-1zM783 769h1v2h-1zM784 769h1v2h-1zM785 767h1v2h-1zM786 768h1v2h-1zM787 770h1v2h-1zM788 770h1v2h-1zM789 767h1v3h-1zM790 770h1v5h-1zM791 770h1v3h-1zM792 771h1v3h-1zM793 768h1v4h-1zM794 769h1v2h-1zM795 771h1v3h-1zM796 768h1v4h-1zM797 768h1v2h-1zM798 769h1v2h-1zM799 770h1v2h-1zM800 767h1v3h-1zM801 767h1v2h-1zM802 769h1v2h-1zM803 770h1v1h-1zM804 766h1v3h-1zM805 767h1v2h-1zM806 770h1v3h-1zM807 768h1v3h-1zM808 771h1v5h-1zM809 768h1v5h-1zM810 770h1v4h-1zM811 770h1v3h-1zM812 769h1v2h-1zM813 769h1v2h-1zM814 770h1v1h-1zM815 770h1v2h-1zM816 771h1v1h-1zM817 767h1v3h-1zM818 768h1v3h-1zM819 770h1v2h-1zM820 771h1v1h-1zM821 771h1v2h-1zM822 763h1v6h-1zM823 767h1v5h-1zM824 772h1v2h-1zM825 770h1v3h-1zM826 765h1v4h-1zM827 768h1v5h-1zM828 768h1v3h-1zM829 767h1v2h-1zM830 769h1v4h-1zM831 773h1v2h-1zM832 770h1v3h-1zM833 767h1v3h-1zM834 768h1v2h-1zM835 768h1v2h-1zM836 765h1v3h-1zM837 768h1v5h-1zM838 768h1v3h-1zM839 768h1v2h-1zM840 771h1v3h-1zM841 770h1v3h-1zM842 768h1v2h-1zM843 768h1v2h-1zM844 771h1v4h-1zM845 774h1v2h-1zM846 770h1v4h-1zM847 770h1v1h-1zM848 767h1v3h-1zM849 764h1v3h-1zM850 764h1v2h-1zM851 767h1v3h-1zM852 768h1v2h-1zM853 769h1v2h-1zM854 771h1v2h-1zM855 769h1v3h-1zM856 769h1v1h-1zM857 769h1v1h-1zM858 769h1v2h-1zM859 768h1v2h-1zM860 768h1v2h-1zM861 769h1v2h-1zM862 772h1v4h-1zM863 769h1v4h-1zM864 771h1v3h-1zM865 773h1v2h-1zM866 767h1v5h-1zM867 768h1v2h-1zM868 769h1v2h-1zM869 772h1v4h-1zM870 775h1v1h-1zM871 771h1v3h-1zM872 768h1v3h-1zM873 767h1v2h-1zM874 770h1v5h-1zM875 768h1v4h-1zM876 768h1v2h-1zM877 770h1v2h-1zM878 772h1v2h-1zM879 769h1v3h-1zM880 770h1v2h-1zM881 770h1v2h-1zM882 771h1v3h-1zM883 764h1v6h-1zM884 764h1v1h-1zM885 767h1v5h-1zM886 771h1v2h-1zM887 769h1v3h-1zM888 770h1v2h-1zM889 768h1v3h-1zM890 770h1v3h-1zM891 770h1v2h-1zM892 768h1v2h-1zM893 767h1v2h-1zM894 769h1v3h-1zM895 771h1v2h-1zM896 770h1v2h-1zM897 770h1v2h-1zM898 772h1v3h-1zM899 766h1v5h-1zM900 769h1v5h-1zM901 769h1v3h-1zM902 771h1v3h-1zM903 769h1v3h-1zM904 766h1v3h-1zM905 767h1v2h-1zM906 769h1v2h-1zM907 771h1v3h-1zM908 771h1v2h-1zM909 765h1v4h-1zM910 768h1v4h-1zM911 770h1v2h-1zM912 770h1v1h-1zM913 768h1v2h-1zM914 769h1v2h-1zM915 763h1v5h-1zM916 769h1v7h-1zM917 774h1v2h-1zM918 769h1v4h-1zM919 769h1v2h-1zM920 769h1v2h-1zM921 766h1v3h-1zM922 766h1v2h-1zM923 769h1v4h-1zM924 772h1v1h-1zM925 769h1v3h-1zM926 767h1v2h-1zM927 768h1v2h-1zM928 766h1v3h-1zM929 767h1v2h-1zM930 769h1v2h-1zM931 769h1v2h-1zM932 769h1v2h-1zM933 770h1v1h-1zM934 770h1v2h-1zM935 770h1v2h-1zM936 770h1v1h-1zM937 767h1v3h-1zM938 768h1v3h-1zM939 770h1v2h-1zM940 772h1v2h-1zM941 770h1v3h-1zM942 762h1v5h-1zM943 766h1v6h-1zM944 771h1v1h-1zM945 769h1v2h-1zM946 768h1v2h-1zM947 767h1v2h-1zM948 769h1v3h-1zM949 769h1v2h-1zM950 760h1v6h-1zM951 763h1v5h-1zM952 769h1v3h-1zM953 768h1v3h-1zM954 772h1v5h-1zM955 766h1v6h-1zM956 766h1v2h-1zM957 770h1v5h-1zM958 769h1v4h-1zM959 770h1v2h-1zM960 769h1v2h-1zM961 770h1v3h-1zM962 773h1v2h-1zM963 771h1v3h-1zM964 765h1v4h-1zM965 769h1v5h-1zM966 767h1v4h-1zM967 769h1v4h-1zM968 774h1v3h-1zM969 764h1v7h-1zM970 763h1v2h-1zM971 770h1v8h-1zM972 771h1v4h-1zM973 770h1v2h-1zM974 771h1v2h-1zM975 772h1v1h-1zM976 771h1v2h-1zM977 769h1v2h-1zM978 764h1v4h-1zM979 767h1v4h-1zM980 770h1v1h-1zM981 770h1v1h-1zM982 769h1v2h-1zM983 764h1v4h-1zM984 767h1v5h-1zM985 771h1v1h-1zM986 768h1v3h-1zM987 768h1v1h-1zM988 765h1v3h-1zM989 766h1v2h-1zM990 769h1v4h-1zM991 769h1v3h-1zM992 770h1v3h-1zM993 769h1v3h-1zM994 769h1v2h-1zM995 770h1v2h-1zM996 767h1v3h-1zM997 767h1v2h-1zM998 766h1v2h-1zM999 767h1v3h-1zM1000 768h1v2h-1zM1001 771h1v4h-1zM1002 771h1v3h-1zM1003 772h1v3h-1zM1004 768h1v4h-1zM1005 768h1v2h-1zM1006 767h1v2h-1zM1007 767h1v2h-1zM1008 768h1v2h-1zM1009 766h1v3h-1zM1010 765h1v2h-1zM1011 768h1v4h-1zM1012 769h1v2h-1zM1013 772h1v4h-1zM1014 767h1v5h-1zM1015 769h1v4h-1zM1016 770h1v2h-1zM1017 772h1v3h-1zM1018 771h1v3h-1zM1019 768h1v3h-1zM1020 770h1v3h-1zM1021 768h1v3h-1zM1022 768h1v1h-1zM1023 768h1v2h-1zM1024 770h1v2h-1zM1025 771h1v1h-1zM1026 772h1v2h-1zM1027 770h1v3h-1zM1028 771h1v2h-1zM1029 768h1v3h-1zM1030 758h1v6h-1zM1031 763h1v6h-1zM1032 766h1v2h-1zM1033 769h1v5h-1zM1034 763h1v6h-1zM1035 764h1v3h-1zM1036 767h1v3h-1zM1037 770h1v2h-1zM1038 770h1v2h-1zM1039 772h1v3h-1zM1040 769h1v4h-1zM1041 769h1v1h-1zM1042 767h1v2h-1zM1043 766h1v2h-1zM1044 759h1v5h-1zM1045 764h1v7h-1zM1046 771h1v2h-1zM1047 769h1v3h-1zM1048 766h1v3h-1zM1049 761h1v4h-1zM1050 768h1v9h-1zM1051 771h1v4h-1zM1052 771h1v1h-1zM1053 771h1v1h-1zM1054 765h1v4h-1zM1055 767h1v3h-1zM1056 772h1v5h-1zM1057 767h1v6h-1zM1058 768h1v3h-1zM1059 767h1v3h-1zM1060 770h1v5h-1zM1061 769h1v4h-1zM1062 767h1v2h-1zM1063 768h1v3h-1zM1064 771h1v3h-1zM1065 768h1v4h-1zM1066 769h1v2h-1zM1067 765h1v4h-1zM1068 767h1v3h-1zM1069 772h1v4h-1zM1070 769h1v4h-1zM1071 769h1v2h-1zM1072 773h1v4h-1zM1073 766h1v6h-1zM1074 767h1v2h-1zM1075 767h1v2h-1zM1076 767h1v2h-1zM1077 769h1v2h-1zM1078 769h1v2h-1zM1079 767h1v2h-1zM1080 771h1v6h-1zM1081 774h1v2h-1zM1082 771h1v3h-1zM1083 770h1v2h-1zM1084 770h1v2h-1zM1085 766h1v4h-1zM1086 770h1v5h-1zM1087 773h1v2h-1zM1088 771h1v2h-1zM1089 772h1v2h-1zM1090 769h1v3h-1zM1091 769h1v1h-1zM1092 771h1v3h-1zM1093 773h1v2h-1zM1094 770h1v3h-1zM1095 768h1v2h-1zM1096 769h1v2h-1zM1097 770h1v1h-1zM1098 768h1v2h-1zM1099 769h1v2h-1zM1100 767h1v3h-1zM1101 768h1v3h-1zM1102 770h1v1h-1zM1103 770h1v1h-1zM1104 769h1v2h-1zM1105 770h1v3h-1zM1106 771h1v2h-1zM1107 769h1v2h-1zM1108 770h1v2h-1zM1109 770h1v2h-1zM1110 769h1v2h-1zM1111 768h1v2h-1zM1112 768h1v1h-1zM1113 769h1v2h-1zM1114 767h1v3h-1zM1115 769h1v3h-1zM1116 770h1v2h-1zM1117 772h1v3h-1zM1118 769h1v4h-1zM1119 769h1v1h-1zM1120 770h1v3h-1zM1121 769h1v3h-1zM1122 772h1v4h-1zM1123 776h1v2h-1zM1124 770h1v5h-1zM1125 770h1v2h-1zM1126 766h1v4h-1zM1127 768h1v3h-1zM1128 771h1v3h-1zM1129 765h1v5h-1zM1130 768h1v4h-1zM1131 767h1v3h-1zM1132 767h1v1h-1zM1133 767h1v1h-1zM1134 772h1v6h-1zM1135 776h1v2h-1zM1136 773h1v3h-1zM1137 766h1v5h-1zM1138 769h1v5h-1zM1139 775h1v3h-1zM1140 772h1v4h-1zM1141 770h1v2h-1zM1142 769h1v2h-1zM1143 767h1v2h-1zM1144 767h1v2h-1zM1145 771h1v4h-1zM1146 764h1v6h-1zM1147 766h1v4h-1zM1148 771h1v3h-1zM1149 770h1v3h-1zM1150 770h1v2h-1zM1151 768h1v3h-1zM1152 769h1v2h-1zM1153 770h1v2h-1zM1154 770h1v2h-1zM1155 770h1v1h-1zM1156 769h1v2h-1zM1157 757h1v7h-1zM1158 760h1v4h-1zM1159 765h1v4h-1zM1160 770h1v4h-1zM1161 773h1v1h-1zM1162 763h1v6h-1zM1163 769h1v8h-1zM1164 769h1v5h-1zM1165 769h1v1h-1zM1166 771h1v3h-1zM1167 767h1v4h-1zM1168 770h1v4h-1zM1169 769h1v3h-1zM1170 769h1v1h-1zM1171 765h1v3h-1zM1172 770h1v7h-1zM1173 766h1v6h-1zM1174 769h1v4h-1zM1175 770h1v2h-1zM1176 771h1v2h-1zM1177 770h1v2h-1zM1178 770h1v2h-1zM1179 771h1v1h-1zM1180 768h1v3h-1zM1181 768h1v2h-1zM1182 772h1v4h-1zM1183 771h1v3h-1zM1184 772h1v2h-1zM1185 769h1v3h-1zM1186 768h1v2h-1zM1187 769h1v3h-1zM1188 770h1v2h-1zM1189 771h1v2h-1zM1190 768h1v3h-1zM1191 768h1v2h-1zM1192 769h1v1h-1zM1193 769h1v1h-1zM1194 772h1v5h-1zM1195 772h1v3h-1zM1196 769h1v3h-1zM1197 770h1v2h-1zM1198 772h1v2h-1zM1199 769h1v3h-1zM1200 769h1v1h-1zM1201 766h1v3h-1zM1202 765h1v2h-1zM1203 768h1v4h-1zM1204 773h1v3h-1zM1205 766h1v6h-1zM1206 764h1v2h-1zM1207 765h1v2h-1zM1208 767h1v3h-1zM1209 768h1v2h-1zM1210 765h1v3h-1zM1211 769h1v5h-1zM1212 769h1v3h-1zM1213 771h1v3h-1zM1214 767h1v4h-1zM1215 769h1v4h-1zM1216 765h1v5h-1zM1217 765h1v2h-1zM1218 770h1v5h-1zM1219 774h1v1h-1zM1220 767h1v5h-1zM1221 766h1v2h-1zM1222 766h1v2h-1zM1223 767h1v1h-1zM1224 763h1v3h-1zM1225 763h1v2h-1zM1226 766h1v4h-1zM1227 767h1v2h-1zM1228 768h1v3h-1zM1229 770h1v1h-1zM1230 767h1v3h-1zM1231 768h1v3h-1zM1232 771h1v3h-1zM1233 771h1v2h-1zM1234 770h1v2h-1zM1235 770h1v1h-1zM1236 767h1v3h-1zM1237 764h1v3h-1zM1238 770h1v8h-1zM1239 774h1v3h-1zM1240 769h1v4h-1zM1241 768h1v2h-1zM1242 769h1v2h-1zM1243 770h1v2h-1zM1244 767h1v3h-1zM1245 769h1v3h-1zM1246 772h1v3h-1zM1247 774h1v2h-1zM1248 769h1v4h-1zM1249 768h1v2h-1zM1250 767h1v2h-1zM1251 764h1v3h-1zM1252 764h1v1h-1zM1253 765h1v2h-1zM1254 767h1v2h-1zM1255 769h1v2h-1zM1256 772h1v3h-1zM1257 770h1v3h-1zM1258 769h1v2h-1zM1259 770h1v2h-1zM1260 770h1v2h-1zM1261 772h1v4h-1zM1262 773h1v2h-1zM1263 769h1v3h-1zM1264 765h1v3h-1zM1265 768h1v5h-1zM1266 771h1v2h-1zM1267 757h1v8h-1zM1268 761h1v6h-1zM1269 767h1v2h-1zM1270 768h1v2h-1zM1271 767h1v2h-1zM1272 768h1v3h-1zM1273 770h1v2h-1zM1274 770h1v2h-1zM1275 770h1v2h-1zM1276 766h1v4h-1zM1277 769h1v4h-1zM1278 772h1v1h-1zM1279 770h1v2h-1zM1280 773h1v4h-1zM1281 765h1v7h-1zM1282 767h1v4h-1zM1283 771h1v2h-1zM1284 766h1v4h-1zM1285 768h1v4h-1zM1286 770h1v2h-1zM1287 769h1v2h-1zM1288 766h1v3h-1zM1289 767h1v3h-1zM1290 766h1v3h-1zM1291 767h1v2h-1zM1292 768h1v1h-1zM1293 764h1v3h-1zM1294 766h1v3h-1zM1295 770h1v3h-1zM1296 771h1v2h-1zM1297 767h1v3h-1zM1298 768h1v3h-1zM1299 771h1v2h-1zM1300 770h1v2h-1zM1301 764h1v4h-1zM1302 764h1v2h-1zM1303 767h1v3h-1zM1304 767h1v2h-1zM1305 767h1v1h-1zM1306 771h1v6h-1zM1307 771h1v4h-1zM1308 771h1v2h-1zM1309 773h1v2h-1zM1310 764h1v6h-1zM1311 766h1v4h-1zM1312 769h1v1h-1zM1313 766h1v3h-1zM1314 769h1v5h-1zM1315 768h1v4h-1zM1316 771h1v4h-1zM1317 770h1v3h-1zM1318 772h1v4h-1zM1319 770h1v4h-1zM1320 769h1v2h-1zM1321 771h1v3h-1zM1322 768h1v4h-1zM1323 767h1v2h-1zM1324 767h1v2h-1zM1325 769h1v3h-1zM1326 771h1v1h-1zM1327 766h1v4h-1zM1328 769h1v5h-1zM1329 771h1v2h-1zM1330 770h1v2h-1zM1331 771h1v3h-1zM1332 768h1v4h-1zM1333 766h1v2h-1zM1334 768h1v4h-1zM1335 766h1v4h-1zM1336 769h1v4h-1zM1337 770h1v2h-1zM1338 768h1v2h-1zM1339 768h1v1h-1zM1340 769h1v2h-1zM1341 767h1v3h-1zM1342 763h1v3h-1zM1343 768h1v6h-1zM1344 767h1v4h-1zM1345 764h1v3h-1zM1346 765h1v2h-1zM1347 768h1v3h-1zM1348 770h1v2h-1zM1349 771h1v1h-1zM1350 769h1v2h-1zM1351 769h1v1h-1zM1352 769h1v1h-1zM1353 770h1v2h-1zM1354 769h1v2h-1zM1355 765h1v3h-1zM1356 767h1v4h-1zM1357 768h1v2h-1zM1358 769h1v2h-1zM1359 768h1v2h-1zM1360 768h1v2h-1zM1361 768h1v2h-1zM1362 770h1v3h-1zM1363 770h1v2h-1zM1364 772h1v4h-1zM1365 775h1v2h-1zM1366 766h1v6h-1zM1367 768h1v4h-1zM1368 771h1v2h-1zM1369 773h1v2h-1zM1370 769h1v4h-1zM1371 764h1v4h-1zM1372 759h1v4h-1zM1373 763h1v5h-1zM1374 768h1v3h-1zM1375 767h1v3h-1zM1376 770h1v4h-1zM1377 773h1v1h-1zM1378 769h1v3h-1zM1379 769h1v2h-1zM1380 770h1v1h-1zM1381 769h1v2h-1zM1382 772h1v4h-1zM1383 763h1v7h-1zM1384 766h1v5h-1z"/>
<path fill="#ffff00" d="M6 773h1380v1h-1380z"/>
<polyline fill="none" stroke="#00ffff" stroke-width="1" points="6.5,769.5 10.5,773.5 6.5,777.5"/>
<path fill="none" stroke="#00ff00" stroke-width="1" shape-rendering="crispEdges" d="M6.5 952.5 H126.5 V924.5 H127.5 V895.5 H165.5 V924.5 H166.5 V952.5 H170.5 V924.5 H171.5 V895.5 H186.5 V866.5 H187.5 V838.5 H247.5 V810.5 H248.5 V781.5 H256.5 V753.5 H257.5 V725.5 H284.5 V753.5 H285.5 V781.5 H290.5 V753.5 H291.5 V725.5 H315.5 V753.5 H316.5 V781.5 H351.5 V753.5 H352.5 V725.5 H388.5 V696.5 H389.5 V667.5 H398.5 V696.5 H399.5 V725.5 H402.5 V696.5 H403.5 V667.5 H409.5 V696.5 H410.5 V725.5 H426.5 V753.5 H427.5 V781.5 H441.5 V753.5 H442.5 V725.5 H510.5 V753.5 H511.5 V781.5 H522.5 V753.5 H523.5 V725.5 H530.5 V753.5 H531.5 V781.5 H536.5 V753.5 H537.5 V725.5 H593.5 V753.5 H594.5 V781.5 H596.5 V753.5 H597.5 V725.5 H634.5 V753.5 H635.5 V781.5 H646.5 V753.5 H647.5 V725.5 H665.5 V753.5 H666.5 V781.5 H700.5 V753.5 H701.5 V725.5 H753.5 V696.5 H754.5 V667.5 H776.5 V696.5 H777.5 V725.5 H786.5 V696.5 H787.5 V667.5 H811.5 V696.5 H812.5 V725.5 H830.5 V753.5 H831.5 V781.5 H839.5 V753.5 H840.5 V725.5 H858.5 V696.5 H859.5 V667.5 H883.5 V638.5 H884.5 V610.5 H953.5 V638.5 H954.5 V667.5 H964.5 V638.5 H965.5 V610.5 H1019.5 V582.5 H1020.5 V553.5 H1020.5 V582.5 H1021.5 V610.5 H1083.5 V582.5 H1084.5 V553.5 H1089.5 V582.5 H1090.5 V610.5 H1106.5 V638.5 H1107.5 V667.5 H1154.5 V638.5 H1155.5 V610.5 H1187.5 V638.5 H1188.5 V667.5 H1195.5 V638.5 H1196.5 V610.5 H1357.5 V582.5 H1358.5 V553.5 H1366.5 V582.5 H1367.5 V610.5 H1381.5 V638.5 H1382.5 V667.5 H1385"/>
</svg>
<svg width="1395" height="1034" viewBox="0 0 1395 1034" style="left:0;top:0">
<defs><clipPath id="cov"><polygon points="1243,50 1250,49 1275,67.7 1298,85 1310,100 1323,120.5 1333,135.6 1326,146 1333,151 1333,166 1343,181 1346,196 1343,216 1320,221 1333,254 1331,282 1320,274 1298,266 1301,318 1290,334 1266,349 1246,368 1234,368 1213,375 1195,375 1178,376 1160,376 1147,372 1130,370 1116,362 1090,350 1072,332 1067.6,289.6 1043,304 1040,302 1028,284 1018,264 1013,241 1015,221 1009,214 1010,196 1008,178 1015,168 1015,151 1023,136 1033,125.5 1045,123 1055,110 1068,100 1068,80 1078,67.6 1093,65 1096,68 1088,100 1086,125.5 1088,151 1101,163 1108,170 1125,180 1144,192 1173,205 1178,206 1214,196 1248,169 1260,153 1265,136 1268,120 1266,95 1258,74 1248,58"/></clipPath></defs>
<g clip-path="url(#cov)" fill="none" stroke-width="3.2">
<circle cx="1178" cy="206" r="1.25" stroke="#00ffff" stroke-dasharray="0 0.26 1.05 2.36 0.52 1.57 0.52 1.05 0.52 0"/>
<circle cx="1178" cy="206" r="1.25" stroke="#00f000" stroke-dasharray="0.26 1.05 0.26 4.71 1.05 0.52"/>
<circle cx="1178" cy="206" r="1.25" stroke="#006000" stroke-dasharray="0 1.57 2.09 0.52 1.57 2.09"/>
<circle cx="1178" cy="206" r="3.75" stroke="#00ffff" stroke-dasharray="0 11 1.57 9.42 1.57 0"/>
<circle cx="1178" cy="206" r="3.75" stroke="#006000" stroke-dasharray="0 7.85 3.14 1.57 8.64 2.36"/>
<circle cx="1178" cy="206" r="3.75" stroke="#00f000" stroke-dasharray="7.85 13.35 0.79 1.57"/>
<circle cx="1178" cy="206" r="6.25" stroke="#006000" stroke-dasharray="0 10.47 5.24 9.16 2.62 5.24 6.54 0"/>
<circle cx="1178" cy="206" r="6.25" stroke="#00f000" stroke-dasharray="10.47 5.24 9.16 2.62 5.24 6.54"/>
<circle cx="1178" cy="206" r="8.75" stroke="#00ffff" stroke-dasharray="0 21.99 1.83 14.66 11 5.5"/>
<circle cx="1178" cy="206" r="8.75" stroke="#006000" stroke-dasharray="0 16.49 5.5 1.83 3.67 21.99 5.5 0"/>
<circle cx="1178" cy="206" r="8.75" stroke="#00f000" stroke-dasharray="16.49 11 11 16.49"/>
<circle cx="1178" cy="206" r="11.25" stroke="#00ffff" stroke-dasharray="0 49.48 14.14 7.07"/>
<circle cx="1178" cy="206" r="11.25" stroke="#006000" stroke-dasharray="0 21.21 7.07 35.34 7.07 0"/>
<circle cx="1178" cy="206" r="11.25" stroke="#00f000" stroke-dasharray="21.21 7.07 21.21 21.21"/>
<circle cx="1178" cy="206" r="13.75" stroke="#00ffff" stroke-dasharray="11.52 74.87"/>
<circle cx="1178" cy="206" r="13.75" stroke="#00f000" stroke-dasharray="0 11.52 2.88 5.76 8.64 14.4 43.2 0"/>
<circle cx="1178" cy="206" r="13.75" stroke="#006000" stroke-dasharray="0 14.4 5.76 8.64 14.4 43.2"/>
<circle cx="1178" cy="206" r="16.25" stroke="#00ffff" stroke-dasharray="15.32 22.12 3.4 35.74 5.11 20.42"/>
<circle cx="1178" cy="206" r="16.25" stroke="#00f000" stroke-dasharray="0 23.82 13.61 13.61 23.82 6.81 20.42 0"/>
<circle cx="1178" cy="206" r="16.25" stroke="#006000" stroke-dasharray="0 15.32 8.51 17.02 10.21 23.82 1.7 25.53"/>
<circle cx="1178" cy="206" r="18.75" stroke="#00ffff" stroke-dasharray="13.74 29.45 15.71 33.38 1.96 23.56"/>
<circle cx="1178" cy="206" r="18.75" stroke="#00f000" stroke-dasharray="0 27.49 15.71 15.71 11.78 3.93 17.67 15.71 9.82 0"/>
<circle cx="1178" cy="206" r="18.75" stroke="#006000" stroke-dasharray="0 13.74 13.74 43.2 3.93 19.63 13.74 9.82"/>
<circle cx="1178" cy="206" r="21.25" stroke="#00ffff" stroke-dasharray="6.68 4.45 6.68 31.15 15.58 40.06 17.8 11.13"/>
<circle cx="1178" cy="206" r="21.25" stroke="#00f000" stroke-dasharray="0 6.68 4.45 6.68 6.68 53.41 26.7 17.8 11.13 0"/>
<circle cx="1178" cy="206" r="21.25" stroke="#006000" stroke-dasharray="0 24.48 24.48 15.58 13.35 55.63"/>
<circle cx="1178" cy="206" r="23.75" stroke="#00ffff" stroke-dasharray="7.46 9.95 24.87 19.9 14.92 72.13"/>
<circle cx="1178" cy="206" r="23.75" stroke="#00f000" stroke-dasharray="0 7.46 9.95 72.13 44.77 2.49 7.46 4.97"/>
<circle cx="1178" cy="206" r="23.75" stroke="#006000" stroke-dasharray="0 42.28 19.9 14.92 12.44 44.77 2.49 7.46 4.97 0"/>
<circle cx="1178" cy="206" r="26.25" stroke="#00ffff" stroke-dasharray="24.74 11 13.74 32.99 5.5 76.97"/>
<circle cx="1178" cy="206" r="26.25" stroke="#00f000" stroke-dasharray="0 49.48 5.5 16.49 11 54.98 24.74 2.75"/>
<circle cx="1178" cy="206" r="26.25" stroke="#006000" stroke-dasharray="0 24.74 11 19.24 16.49 16.49 49.48 24.74 2.75 0"/>
<circle cx="1178" cy="206" r="28.75" stroke="#006000" stroke-dasharray="6.02 93.33 6.02 3.01 51.18 21.07"/>
<circle cx="1178" cy="206" r="28.75" stroke="#00ffff" stroke-dasharray="0 6.02 48.17 36.13 9.03 81.29"/>
<circle cx="1178" cy="206" r="28.75" stroke="#00f000" stroke-dasharray="0 54.19 36.13 15.05 3.01 51.18 21.07 0"/>
<circle cx="1178" cy="206" r="31.25" stroke="#006000" stroke-dasharray="6.54 29.45 9.82 22.91 9.82 39.27 78.54 0"/>
<circle cx="1178" cy="206" r="31.25" stroke="#00ffff" stroke-dasharray="0 6.54 29.45 9.82 3.27 52.36 16.36 78.54"/>
<circle cx="1178" cy="206" r="31.25" stroke="#00f000" stroke-dasharray="0 49.09 19.63 9.82 22.91 94.9"/>
<circle cx="1178" cy="206" r="33.75" stroke="#006000" stroke-dasharray="14.14 60.08 10.6 67.15 3.53 17.67 38.88 0"/>
<circle cx="1178" cy="206" r="33.75" stroke="#00ffff" stroke-dasharray="0 14.14 10.6 10.6 35.34 28.27 7.07 3.53 21.21 81.29"/>
<circle cx="1178" cy="206" r="33.75" stroke="#00f000" stroke-dasharray="0 24.74 10.6 35.34 3.53 10.6 14.14 7.07 3.53 21.21 21.21 3.53 17.67 38.88"/>
<circle cx="1178" cy="206" r="36.25" stroke="#006000" stroke-dasharray="41.76 7.59 1.9 3.8 3.8 20.88 5.69 3.8 13.29 36.06 7.59 30.37 3.8 20.88 7.59 7.59 5.69 5.69"/>
<circle cx="1178" cy="206" r="36.25" stroke="#00ffff" stroke-dasharray="0 41.76 7.59 1.9 3.8 3.8 17.08 9.49 3.8 32.27 17.08 89.21"/>
<circle cx="1178" cy="206" r="36.25" stroke="#00f000" stroke-dasharray="0 75.92 3.8 22.78 18.98 24.67 30.37 3.8 20.88 7.59 7.59 5.69 5.69 0"/>
<circle cx="1178" cy="206" r="38.75" stroke="#006000" stroke-dasharray="12.17 2.03 30.43 8.12 2.03 42.61 14.2 32.46 6.09 2.03 8.12 6.09 4.06 22.32 4.06 18.26 12.17 8.12 4.06 4.06"/>
<circle cx="1178" cy="206" r="38.75" stroke="#00ffff" stroke-dasharray="0 12.17 2.03 30.43 8.12 8.12 20.29 68.98 2.03 91.3"/>
<circle cx="1178" cy="206" r="38.75" stroke="#00f000" stroke-dasharray="0 54.78 6.09 20.29 16.23 14.2 32.46 16.23 6.09 4.06 22.32 4.06 18.26 12.17 8.12 4.06 4.06 0"/>
<circle cx="1178" cy="206" r="41.25" stroke="#006000" stroke-dasharray="49.68 4.32 45.36 6.48 12.96 8.64 2.16 15.12 4.32 12.96 12.96 2.16 21.6 6.48 8.64 8.64 25.92 10.8"/>
<circle cx="1178" cy="206" r="41.25" stroke="#00ffff" stroke-dasharray="0 49.68 4.32 120.95 2.16 21.6 6.48 54"/>
<circle cx="1178" cy="206" r="41.25" stroke="#00f000" stroke-dasharray="0 99.35 6.48 12.96 8.64 2.16 15.12 4.32 12.96 51.84 8.64 25.92 10.8 0"/>
<circle cx="1178" cy="206" r="43.75" stroke="#006000" stroke-dasharray="52.69 11.45 43.52 4.58 13.74 52.69 6.87 11.45 18.33 9.16 2.29 9.16 34.36 4.58"/>
<circle cx="1178" cy="206" r="43.75" stroke="#00ffff" stroke-dasharray="0 52.69 11.45 80.18 4.58 36.65 11.45 18.33 9.16 50.4"/>
<circle cx="1178" cy="206" r="43.75" stroke="#00f000" stroke-dasharray="0 107.66 4.58 13.74 18.33 4.58 29.78 48.11 9.16 34.36 4.58 0"/>
<circle cx="1178" cy="206" r="46.25" stroke="#006000" stroke-dasharray="2.42 19.37 14.53 9.69 16.95 7.26 31.48 4.84 21.79 96.87 21.79 9.69 33.9 0"/>
<circle cx="1178" cy="206" r="46.25" stroke="#00ffff" stroke-dasharray="0 2.42 19.37 14.53 9.69 16.95 7.26 31.48 4.84 184.04"/>
<circle cx="1178" cy="206" r="46.25" stroke="#00f000" stroke-dasharray="0 128.35 96.87 21.79 9.69 33.9"/>
<circle cx="1178" cy="206" r="48.75" stroke="#006000" stroke-dasharray="10.21 17.87 38.29 7.66 22.97 5.11 5.11 15.32 20.42 28.08 15.32 15.32 10.21 30.63 10.21 28.08 25.53 0"/>
<circle cx="1178" cy="206" r="48.75" stroke="#00ffff" stroke-dasharray="0 10.21 17.87 38.29 7.66 22.97 5.11 5.11 15.32 35.74 12.76 15.32 15.32 12.76 2.55 89.34"/>
<circle cx="1178" cy="206" r="48.75" stroke="#00f000" stroke-dasharray="0 142.94 15.32 53.6 2.55 2.55 25.53 10.21 28.08 25.53"/>
<circle cx="1178" cy="206" r="51.25" stroke="#006000" stroke-dasharray="72.45 10.73 77.82 18.78 10.73 29.52 2.68 32.2 13.42 26.83 8.05 2.68 16.1 0"/>
<circle cx="1178" cy="206" r="51.25" stroke="#00ffff" stroke-dasharray="0 72.45 10.73 209.31 2.68 8.05 2.68 16.1"/>
<circle cx="1178" cy="206" r="51.25" stroke="#00f000" stroke-dasharray="0 161.01 18.78 10.73 29.52 2.68 32.2 13.42 24.15 29.52"/>
<circle cx="1178" cy="206" r="53.75" stroke="#00ffff" stroke-dasharray="0 151.97 5.63 157.6 5.63 8.44 2.81 5.63"/>
<circle cx="1178" cy="206" r="53.75" stroke="#006000" stroke-dasharray="5.63 14.07 115.39 2.81 14.07 25.33 5.63 87.24 2.81 36.59 5.63 5.63 8.44 8.44"/>
<circle cx="1178" cy="206" r="53.75" stroke="#00f000" stroke-dasharray="0 5.63 14.07 115.39 2.81 19.7 19.7 5.63 87.24 2.81 36.59 22.51 5.63 0"/>
<circle cx="1178" cy="206" r="56.25" stroke="#00ffff" stroke-dasharray="0 82.47 11.78 235.62 5.89 8.84 8.84 0"/>
<circle cx="1178" cy="206" r="56.25" stroke="#006000" stroke-dasharray="5.89 32.4 44.18 11.78 53.01 5.89 44.18 5.89 11.78 120.75 8.84 8.84"/>
<circle cx="1178" cy="206" r="56.25" stroke="#00f000" stroke-dasharray="0 5.89 32.4 108.97 5.89 44.18 5.89 11.78 114.86 23.56"/>
<circle cx="1178" cy="206" r="58.75" stroke="#00ffff" stroke-dasharray="0 86.13 18.46 76.9 9.23 178.42"/>
<circle cx="1178" cy="206" r="58.75" stroke="#006000" stroke-dasharray="12.3 6.15 3.08 83.06 49.22 12.3 15.38 9.23 3.08 119.97 12.3 30.76 12.3 0"/>
<circle cx="1178" cy="206" r="58.75" stroke="#00f000" stroke-dasharray="0 12.3 6.15 3.08 64.6 67.68 12.3 27.69 119.97 12.3 30.76 12.3"/>
<circle cx="1178" cy="206" r="61.25" stroke="#00ffff" stroke-dasharray="0 76.97 6.41 16.04 9.62 41.69 9.62 28.86 22.45 173.18"/>
<circle cx="1178" cy="206" r="61.25" stroke="#006000" stroke-dasharray="12.83 70.55 3.21 22.45 32.07 38.48 9.62 67.35 3.21 125.07"/>
<circle cx="1178" cy="206" r="61.25" stroke="#00f000" stroke-dasharray="0 12.83 64.14 9.62 12.83 41.69 9.62 9.62 16.04 35.28 44.9 3.21 125.07 0"/>
<circle cx="1178" cy="206" r="61.25" stroke="#0000ff" stroke-dasharray="0 176.39 3.21 205.25"/>
<circle cx="1178" cy="206" r="63.75" stroke="#00ffff" stroke-dasharray="0 83.45 13.35 10.01 10.01 3.34 3.34 73.43 20.03 76.77 23.37 73.43 10.01 0"/>
<circle cx="1178" cy="206" r="63.75" stroke="#006000" stroke-dasharray="56.75 13.35 3.34 43.39 3.34 3.34 10.01 13.35 20.03 50.07 16.69 33.38 26.7 50.07 6.68 50.07"/>
<circle cx="1178" cy="206" r="63.75" stroke="#00f000" stroke-dasharray="0 56.75 13.35 3.34 10.01 13.35 10.01 26.7 13.35 20.03 30.04 36.72 33.38 50.07 26.7 6.68 40.06 10.01"/>
<circle cx="1178" cy="206" r="66.25" stroke="#00ffff" stroke-dasharray="0 111 10.41 38.16 3.47 41.63 24.28 31.22 3.47 48.56 17.34 55.5 6.94 17.34 6.94 0"/>
<circle cx="1178" cy="206" r="66.25" stroke="#006000" stroke-dasharray="69.38 52.03 24.28 10.41 3.47 3.47 13.88 13.88 6.94 90.19 24.28 104.07"/>
<circle cx="1178" cy="206" r="66.25" stroke="#00f000" stroke-dasharray="0 69.38 41.63 34.69 10.41 20.81 13.88 6.94 6.94 24.28 31.22 3.47 24.28 41.63 55.5 6.94 17.34 6.94"/>
<circle cx="1178" cy="206" r="68.75" stroke="#006000" stroke-dasharray="7.2 3.6 89.99 14.4 21.6 147.59 10.8 14.4 32.4 89.99"/>
<circle cx="1178" cy="206" r="68.75" stroke="#00ffff" stroke-dasharray="0 7.2 3.6 154.79 36 68.4 3.6 129.59 14.4 7.2 7.2 0"/>
<circle cx="1178" cy="206" r="68.75" stroke="#00f000" stroke-dasharray="0 100.79 14.4 21.6 28.8 36 68.4 3.6 10.8 10.8 14.4 32.4 61.2 14.4 7.2 7.2"/>
<circle cx="1178" cy="206" r="71.25" stroke="#006000" stroke-dasharray="7.46 1.87 31.71 1.87 26.11 3.73 48.5 5.6 18.65 31.71 11.19 5.6 11.19 93.27 7.46 35.44 18.65 42.9 13.06 9.33 13.06 9.33"/>
<circle cx="1178" cy="206" r="71.25" stroke="#00ffff" stroke-dasharray="0 7.46 1.87 179.07 5.6 11.19 7.46 1.87 5.6 59.69 3.73 11.19 3.73 11.19 3.73 26.11 1.87 27.98 1.87 76.48"/>
<circle cx="1178" cy="206" r="71.25" stroke="#00f000" stroke-dasharray="0 41.04 1.87 26.11 3.73 48.5 5.6 18.65 31.71 35.44 1.87 5.6 59.69 3.73 11.19 11.19 3.73 3.73 26.11 20.52 9.33 1.87 31.71 13.06 9.33 13.06 9.33 0"/>
<circle cx="1178" cy="206" r="73.75" stroke="#00ffff" stroke-dasharray="0 1.93 7.72 69.51 9.65 121.64 9.65 52.13 7.72 88.82 7.72 19.31 1.93 55.99 5.79 3.86"/>
<circle cx="1178" cy="206" r="73.75" stroke="#0000ff" stroke-dasharray="0 341.75 3.86 30.89 1.93 84.95"/>
<circle cx="1178" cy="206" r="73.75" stroke="#006000" stroke-dasharray="1.93 7.72 61.78 5.79 1.93 9.65 28.96 1.93 36.68 28.96 25.1 34.75 5.79 32.82 1.93 3.86 27.03 30.89 21.24 50.2 19.31 1.93 13.52 9.65"/>
<circle cx="1178" cy="206" r="73.75" stroke="#5050ff" stroke-dasharray="0 316.65 7.72 139.02"/>
<circle cx="1178" cy="206" r="73.75" stroke="#00f000" stroke-dasharray="0 71.44 5.79 40.55 1.93 36.68 28.96 34.75 25.1 5.79 21.24 7.72 3.86 1.93 3.86 34.75 17.38 3.86 1.93 30.89 17.38 1.93 21.24 19.31 1.93 19.31 3.86 0"/>
<circle cx="1178" cy="206" r="76.25" stroke="#0000ff" stroke-dasharray="0 373.29 2 103.8"/>
<circle cx="1178" cy="206" r="76.25" stroke="#006000" stroke-dasharray="7.98 9.98 71.86 2 3.99 13.97 49.91 13.97 5.99 13.97 7.98 5.99 9.98 7.98 2 31.94 2 3.99 7.98 11.98 55.89 19.96 11.98 2 3.99 55.89 43.92 0"/>
<circle cx="1178" cy="206" r="76.25" stroke="#00ffff" stroke-dasharray="0 7.98 9.98 71.86 2 11.98 5.99 49.91 3.99 53.9 5.99 117.78 7.98 29.94 21.96 7.98 13.97 55.89"/>
<circle cx="1178" cy="206" r="76.25" stroke="#00f000" stroke-dasharray="0 95.82 7.98 59.89 9.98 5.99 13.97 7.98 5.99 15.97 2 2 31.94 2 3.99 7.98 11.98 63.88 11.98 39.92 7.98 13.97 11.98 43.92"/>
<circle cx="1178" cy="206" r="78.75" stroke="#0000ff" stroke-dasharray="0 360.79 4.12 20.62 6.19 103.08"/>
<circle cx="1178" cy="206" r="78.75" stroke="#006000" stroke-dasharray="12.37 6.19 47.42 16.49 6.19 6.19 4.12 4.12 2.06 18.56 43.3 32.99 10.31 8.25 20.62 39.17 72.16 24.74 10.31 63.91 45.36 0"/>
<circle cx="1178" cy="206" r="78.75" stroke="#00ffff" stroke-dasharray="0 12.37 6.19 51.54 12.37 10.31 2.06 4.12 4.12 6.19 14.43 43.3 26.8 74.22 2.06 80.41 6.19 35.05 22.68 16.49 10.31 53.6"/>
<circle cx="1178" cy="206" r="78.75" stroke="#00f000" stroke-dasharray="0 65.97 4.12 18.56 4.12 12.37 4.12 84.53 6.19 10.31 8.25 20.62 28.86 2.06 8.25 78.34 4.12 4.12 10.31 39.17 16.49 10.31 8.25 45.36"/>
<circle cx="1178" cy="206" r="81.25" stroke="#00ffff" stroke-dasharray="0 82.96 10.64 10.64 25.53 42.54 29.78 8.51 2.13 53.18 2.13 8.51 2.13 25.53 25.53 19.14 2.13 19.14 4.25 31.91 21.27 8.51 6.38 4.25 4.25 2.13 2.13 10.64 2.13 42.54"/>
<circle cx="1178" cy="206" r="81.25" stroke="#006000" stroke-dasharray="40.42 6.38 36.16 10.64 10.64 25.53 42.54 36.16 2.13 2.13 8.51 4.25 19.14 29.78 2.13 21.27 6.38 25.53 19.14 2.13 10.64 106.36 42.54 0"/>
<circle cx="1178" cy="206" r="81.25" stroke="#00f000" stroke-dasharray="0 40.42 6.38 155.28 6.38 12.76 4.25 19.14 21.27 2.13 6.38 4.25 19.14 70.19 2.13 12.76 23.4 21.27 8.51 6.38 4.25 8.51 10.64 44.67"/>
<circle cx="1178" cy="206" r="81.25" stroke="#0000ff" stroke-dasharray="0 361.61 6.38 6.38 8.51 68.07 2.13 57.43"/>
<circle cx="1178" cy="206" r="83.75" stroke="#00ffff" stroke-dasharray="0 109.63 24.12 50.43 21.93 70.16 4.39 39.47 21.93 37.27 6.58 26.31 2.19 6.58 19.73 85.51"/>
<circle cx="1178" cy="206" r="83.75" stroke="#0000ff" stroke-dasharray="0 315.73 2.19 67.97 17.54 122.78"/>
<circle cx="1178" cy="206" r="83.75" stroke="#006000" stroke-dasharray="17.54 2.19 26.31 6.58 19.73 2.19 35.08 24.12 41.66 2.19 6.58 37.27 19.73 4.39 6.58 50.43 13.16 2.19 2.19 21.93 4.39 2.19 30.7 24.12 8.77 2.19 2.19 65.78 43.85 0"/>
<circle cx="1178" cy="206" r="83.75" stroke="#5050ff" stroke-dasharray="0 346.43 2.19 177.6"/>
<circle cx="1178" cy="206" r="83.75" stroke="#00f000" stroke-dasharray="0 17.54 2.19 26.31 6.58 19.73 2.19 100.86 2.19 28.5 15.35 19.73 4.39 6.58 24.12 4.39 21.93 114.01 4.39 19.73 41.66 43.85"/>
<circle cx="1178" cy="206" r="86.25" stroke="#00ffff" stroke-dasharray="0 72.26 4.52 36.13 11.29 6.77 2.26 58.71 24.84 112.9 45.16 36.13 2.26 27.1 15.81 11.29 4.52 70"/>
<circle cx="1178" cy="206" r="86.25" stroke="#0000ff" stroke-dasharray="0 413.22 2.26 126.45"/>
<circle cx="1178" cy="206" r="86.25" stroke="#006000" stroke-dasharray="33.87 6.77 31.61 4.52 18.06 4.52 13.55 13.55 4.52 20.32 29.35 6.77 4.52 36.13 24.84 9.03 2.26 36.13 4.52 2.26 2.26 2.26 18.06 47.42 33.87 4.52 15.81 49.68 60.97 0"/>
<circle cx="1178" cy="206" r="86.25" stroke="#5050ff" stroke-dasharray="0 374.83 2.26 164.84"/>
<circle cx="1178" cy="206" r="86.25" stroke="#00f000" stroke-dasharray="0 33.87 6.77 54.19 4.52 24.84 2.26 6.77 18.06 29.35 6.77 29.35 11.29 24.84 9.03 2.26 36.13 4.52 2.26 2.26 2.26 119.68 9.03 15.81 11.29 4.52 9.03 60.97"/>
<circle cx="1178" cy="206" r="88.75" stroke="#00ffff" stroke-dasharray="0 76.67 4.65 137.08 13.94 20.91 11.62 88.29 37.18 39.5 9.29 9.29 20.91 41.82 9.29 37.18"/>
<circle cx="1178" cy="206" r="88.75" stroke="#006000" stroke-dasharray="20.91 32.53 20.91 6.97 46.47 18.59 20.91 2.32 16.26 6.97 25.56 18.59 16.26 16.26 6.97 39.5 37.18 37.18 16.26 9.29 6.97 4.65 2.32 9.29 9.29 55.76 6.97 9.29 37.18 0"/>
<circle cx="1178" cy="206" r="88.75" stroke="#00f000" stroke-dasharray="0 20.91 32.53 20.91 2.32 51.12 18.59 20.91 2.32 16.26 6.97 39.5 4.65 27.88 4.65 6.97 39.5 153.35 34.85 53.44"/>
<circle cx="1178" cy="206" r="88.75" stroke="#0000ff" stroke-dasharray="0 406.61 9.29 6.97 4.65 130.11"/>
<circle cx="1178" cy="206" r="91.25" stroke="#0000ff" stroke-dasharray="0 420.45 7.17 7.17 4.78 133.78"/>
<circle cx="1178" cy="206" r="91.25" stroke="#006000" stroke-dasharray="16.72 16.72 9.56 2.39 86 11.94 47.78 19.11 7.17 28.67 19.11 16.72 2.39 19.11 4.78 11.94 47.78 33.44 19.11 7.17 2.39 9.56 4.78 11.94 7.17 35.83 23.89 23.89 26.28 0"/>
<circle cx="1178" cy="206" r="91.25" stroke="#00ffff" stroke-dasharray="0 16.72 4.78 243.67 16.72 28.67 2.39 54.95 33.44 28.67 4.78 9.56 11.94 7.17 19.11 90.78"/>
<circle cx="1178" cy="206" r="91.25" stroke="#00f000" stroke-dasharray="0 21.5 11.94 9.56 2.39 86 11.94 47.78 19.11 7.17 28.67 38.22 19.11 4.78 2.39 2.39 7.17 162.45 16.72 23.89 23.89 26.28"/>
<circle cx="1178" cy="206" r="93.75" stroke="#00ffff" stroke-dasharray="0 36.82 4.91 12.27 7.36 4.91 2.45 51.54 19.63 132.54 14.73 105.54 7.36 44.18 4.91 7.36 19.63 4.91 29.45 76.09 2.45 0"/>
<circle cx="1178" cy="206" r="93.75" stroke="#0000ff" stroke-dasharray="0 390.24 2.45 41.72 9.82 4.91 7.36 132.54"/>
<circle cx="1178" cy="206" r="93.75" stroke="#006000" stroke-dasharray="24.54 4.91 7.36 14.73 2.45 7.36 4.91 2.45 51.54 34.36 44.18 17.18 9.82 27 19.63 14.73 95.72 34.36 17.18 41.72 4.91 44.18 29.45 7.36 24.54 2.45"/>
<circle cx="1178" cy="206" r="93.75" stroke="#5050ff" stroke-dasharray="0 382.88 7.36 9.82 17.18 171.81"/>
<circle cx="1178" cy="206" r="93.75" stroke="#00f000" stroke-dasharray="0 24.54 4.91 12.27 9.82 88.36 14.73 44.18 17.18 9.82 27 257.71 14.73 29.45 7.36 27"/>
<circle cx="1178" cy="206" r="96.25" stroke="#00ffff" stroke-dasharray="0 57.96 22.68 17.64 5.04 32.76 12.6 98.27 5.04 25.2 5.04 7.56 12.6 15.12 2.52 83.15 20.16 60.48 2.52 35.28 5.04 35.28 12.6 30.24"/>
<circle cx="1178" cy="206" r="96.25" stroke="#0000ff" stroke-dasharray="0 393.09 2.52 52.92 5.04 10.08 12.6 10.08 17.64 100.79"/>
<circle cx="1178" cy="206" r="96.25" stroke="#006000" stroke-dasharray="45.36 2.52 10.08 22.68 15.12 7.56 32.76 30.24 45.36 2.52 17.64 32.76 12.6 5.04 7.56 12.6 15.12 2.52 73.07 7.56 2.52 27.72 12.6 95.75 22.68 35.28 7.56 0"/>
<circle cx="1178" cy="206" r="96.25" stroke="#5050ff" stroke-dasharray="0 211.66 2.52 181.43 5.04 22.68 7.56 12.6 5.04 5.04 10.08 12.6 7.56 20.16 17.64 5.04 12.6 65.52"/>
<circle cx="1178" cy="206" r="96.25" stroke="#00f000" stroke-dasharray="0 45.36 2.52 47.88 2.52 50.4 17.64 65.52 15.12 5.04 12.6 309.94 22.68 7.56"/>
<circle cx="1178" cy="206" r="98.75" stroke="#00ffff" stroke-dasharray="0 69.8 12.93 12.93 18.1 25.85 10.34 106 2.59 38.78 12.93 7.76 5.17 95.65 41.36 46.53 23.27 12.93 10.34 25.85 10.34 12.93 5.17 12.93"/>
<circle cx="1178" cy="206" r="98.75" stroke="#0000ff" stroke-dasharray="0 460.18 5.17 36.19 5.17 113.75"/>
<circle cx="1178" cy="206" r="98.75" stroke="#006000" stroke-dasharray="69.8 12.93 12.93 18.1 25.85 10.34 7.76 18.1 5.17 7.76 49.12 33.61 18.1 25.85 2.59 5.17 28.44 10.34 36.19 155.12 25.85 28.44 2.59 10.34"/>
<circle cx="1178" cy="206" r="98.75" stroke="#5050ff" stroke-dasharray="0 351.6 10.34 43.95 12.93 46.53 36.19 28.44 12.93 77.56"/>
<circle cx="1178" cy="206" r="98.75" stroke="#00f000" stroke-dasharray="0 157.7 18.1 5.17 7.76 49.12 18.1 2.59 12.93 18.1 7.76 12.93 5.17 82.73 7.76 183.55 12.93 7.76 10.34 0"/>
<circle cx="1178" cy="206" r="101.25" stroke="#00ffff" stroke-dasharray="0 82.17 5.3 71.57 7.95 66.27 7.95 21.21 5.3 39.76 21.21 15.9 5.3 71.57 2.65 5.3 15.9 95.43 5.3 68.92 15.9 5.3"/>
<circle cx="1178" cy="206" r="101.25" stroke="#0000ff" stroke-dasharray="0 392.31 13.25 39.76 5.3 66.27 21.21 39.76 5.3 53.01"/>
<circle cx="1178" cy="206" r="101.25" stroke="#006000" stroke-dasharray="47.71 10.6 23.86 5.3 31.81 5.3 15.9 13.25 5.3 39.76 2.65 21.21 10.6 7.95 5.3 5.3 2.65 26.51 10.6 42.41 10.6 5.3 42.41 13.25 10.6 45.06 15.9 26.51 13.25 21.21 2.65 5.3 31.81 5.3 21.21 31.81"/>
<circle cx="1178" cy="206" r="101.25" stroke="#5050ff" stroke-dasharray="0 328.69 5.3 82.17 5.3 2.65 5.3 21.21 10.6 15.9 26.51 132.54"/>
<circle cx="1178" cy="206" r="101.25" stroke="#00f000" stroke-dasharray="0 47.71 10.6 60.97 5.3 15.9 13.25 13.25 31.81 2.65 21.21 23.86 5.3 2.65 7.95 5.3 13.25 10.6 15.9 296.88 10.6 15.9 5.3 0"/>
<circle cx="1178" cy="206" r="103.75" stroke="#00ffff" stroke-dasharray="0 5.43 2.72 40.74 16.3 40.74 2.72 46.17 24.45 43.46 2.72 16.3 5.43 67.9 13.58 24.45 5.43 65.19 5.43 16.3 21.73 70.62 5.43 10.86 5.43 92.35"/>
<circle cx="1178" cy="206" r="103.75" stroke="#0000ff" stroke-dasharray="0 198.28 2.72 130.38 8.15 35.31 5.43 27.16 8.15 130.38 5.43 100.5"/>
<circle cx="1178" cy="206" r="103.75" stroke="#006000" stroke-dasharray="5.43 2.72 21.73 5.43 13.58 16.3 40.74 2.72 5.43 27.16 5.43 32.59 8.15 32.59 2.72 13.58 5.43 5.43 57.04 24.45 2.72 10.86 10.86 5.43 16.3 5.43 27.16 8.15 8.15 16.3 2.72 29.88 21.73 2.72 10.86 10.86 8.15 24.45 2.72 5.43 32.59 10.86 16.3 32.59"/>
<circle cx="1178" cy="206" r="103.75" stroke="#5050ff" stroke-dasharray="0 114.08 10.86 214.58 2.72 86.92 10.86 2.72 2.72 21.73 5.43 21.73 2.72 10.86 10.86 8.15 10.86 5.43 2.72 46.17 10.86 16.3 2.72 29.88"/>
<circle cx="1178" cy="206" r="103.75" stroke="#00f000" stroke-dasharray="0 29.88 5.43 89.63 16.3 5.43 8.15 32.59 10.86 2.72 19.01 5.43 10.86 67.9 10.86 306.93 29.88 0"/>
<circle cx="1178" cy="206" r="106.25" stroke="#00ffff" stroke-dasharray="0 52.85 27.82 52.85 5.56 27.82 19.47 41.72 2.78 19.47 8.34 2.78 13.91 52.85 16.69 16.69 22.25 5.56 25.03 11.13 41.72 2.78 8.34 75.1 5.56 8.34 8.34 47.29 25.03 19.47"/>
<circle cx="1178" cy="206" r="106.25" stroke="#0000ff" stroke-dasharray="0 344.92 13.91 25.03 5.56 30.6 5.56 52.85 11.13 2.78 8.34 47.29 5.56 5.56 8.34 100.14"/>
<circle cx="1178" cy="206" r="106.25" stroke="#006000" stroke-dasharray="52.85 27.82 47.29 11.13 27.82 91.79 2.78 13.91 36.16 13.91 2.78 30.6 2.78 52.85 5.56 80.67 27.82 58.41 36.16 36.16 5.56 2.78"/>
<circle cx="1178" cy="206" r="106.25" stroke="#5050ff" stroke-dasharray="0 467.31 2.78 19.47 2.78 36.16 19.47 27.82 11.13 80.67"/>
<circle cx="1178" cy="206" r="106.25" stroke="#00f000" stroke-dasharray="0 127.95 5.56 52.85 41.72 2.78 19.47 61.2 13.91 322.67 11.13 5.56 2.78 0"/>
<circle cx="1178" cy="206" r="108.75" stroke="#00ffff" stroke-dasharray="0 8.54 5.69 56.94 45.55 5.69 2.85 8.54 8.54 45.55 5.69 28.47 8.54 2.85 48.4 62.64 11.39 2.85 2.85 14.24 17.08 5.69 25.62 2.85 2.85 14.24 68.33 99.65 2.85 37.01 19.93 11.39"/>
<circle cx="1178" cy="206" r="108.75" stroke="#0000ff" stroke-dasharray="0 355.88 2.85 2.85 14.24 17.08 5.69 173.67 39.86 71.18"/>
<circle cx="1178" cy="206" r="108.75" stroke="#006000" stroke-dasharray="8.54 5.69 56.94 45.55 5.69 19.93 31.32 108.19 8.54 2.85 31.32 17.08 2.85 79.72 2.85 11.39 5.69 68.33 28.47 74.02 8.54 59.79"/>
<circle cx="1178" cy="206" r="108.75" stroke="#5050ff" stroke-dasharray="0 429.91 8.54 102.49 31.32 51.25 28.47 31.32"/>
<circle cx="1178" cy="206" r="108.75" stroke="#00f000" stroke-dasharray="0 125.27 8.54 39.86 14.24 5.69 28.47 8.54 2.85 56.94 2.85 31.32 17.08 330.26 11.39 0"/>
<circle cx="1178" cy="206" r="111.25" stroke="#00ffff" stroke-dasharray="0 5.83 8.74 78.64 40.78 2.91 8.74 84.46 5.83 32.04 34.95 20.39 2.91 2.91 2.91 26.21 26.21 5.83 14.56 5.83 125.24 37.86 2.91 49.51 5.83 34.95 20.39 11.65"/>
<circle cx="1178" cy="206" r="111.25" stroke="#0000ff" stroke-dasharray="0 72.81 20.39 113.59 23.3 174.75 5.83 125.24 11.65 29.13 5.83 23.3 20.39 72.81"/>
<circle cx="1178" cy="206" r="111.25" stroke="#006000" stroke-dasharray="5.83 8.74 43.69 87.38 5.83 14.56 11.65 17.48 11.65 96.11 20.39 2.91 2.91 20.39 8.74 26.21 5.83 157.28 8.74 26.21 23.3 26.21 8.74 58.25"/>
<circle cx="1178" cy="206" r="111.25" stroke="#5050ff" stroke-dasharray="0 151.45 14.56 390.28 17.48 66.99 26.21 20.39 5.83 5.83"/>
<circle cx="1178" cy="206" r="111.25" stroke="#00f000" stroke-dasharray="0 58.25 14.56 61.16 2.91 40.78 17.48 40.78 32.04 64.08 17.48 343.68 5.83 0"/>
<circle cx="1178" cy="206" r="113.75" stroke="#00ffff" stroke-dasharray="0 56.58 8.93 56.58 14.89 2.98 14.89 62.54 32.76 35.74 2.98 71.47 32.76 5.96 163.79 56.58 17.87 5.96 14.89 23.82 23.82 8.93"/>
<circle cx="1178" cy="206" r="113.75" stroke="#0000ff" stroke-dasharray="0 86.36 23.82 26.8 2.98 71.47 5.96 71.47 5.96 268.02 5.96 145.92"/>
<circle cx="1178" cy="206" r="113.75" stroke="#006000" stroke-dasharray="56.58 53.6 11.91 50.63 8.93 26.8 2.98 38.71 17.87 44.67 29.78 50.63 5.96 199.52 5.96 2.98 11.91 17.87 5.96 71.47"/>
<circle cx="1178" cy="206" r="113.75" stroke="#5050ff" stroke-dasharray="0 154.85 17.87 104.23 8.93 8.93 17.87 256.11 29.78 5.96 2.98 50.63 23.82 23.82 8.93 0"/>
<circle cx="1178" cy="206" r="113.75" stroke="#00f000" stroke-dasharray="0 65.52 20.85 95.29 26.8 59.56 8.93 65.52 17.87 354.38"/>
<circle cx="1178" cy="206" r="116.25" stroke="#00ffff" stroke-dasharray="0 12.17 9.13 39.56 12.17 15.22 12.17 45.65 6.09 3.04 12.17 54.78 45.65 57.82 9.13 21.3 6.09 12.17 18.26 3.04 18.26 9.13 30.43 9.13 57.82 12.17 30.43 63.91 3.04 3.04 6.09 30.43 15.22 24.35 18.26 3.04"/>
<circle cx="1178" cy="206" r="116.25" stroke="#0000ff" stroke-dasharray="0 140 6.09 124.78 3.04 118.69 3.04 57.82 9.13 112.61 9.13 146.08"/>
<circle cx="1178" cy="206" r="116.25" stroke="#006000" stroke-dasharray="12.17 9.13 33.48 3.04 3.04 39.56 39.56 12.17 3.04 21.3 12.17 79.13 3.04 9.13 27.39 27.39 18.26 63.91 6.09 191.74 3.04 3.04 6.09 24.35 18.26 30.43 9.13 21.3"/>
<circle cx="1178" cy="206" r="116.25" stroke="#5050ff" stroke-dasharray="0 54.78 3.04 109.56 9.13 130.87 18.26 88.26 3.04 103.48 12.17 30.43 12.17 9.13 30.43 3.04 3.04 9.13 3.04 6.09 12.17 33.48 15.22 27.39 3.04 0"/>
<circle cx="1178" cy="206" r="116.25" stroke="#00f000" stroke-dasharray="0 73.04 15.22 100.43 33.48 51.74 6.09 73.04 3.04 6.09 12.17 356.08"/>
<circle cx="1178" cy="206" r="118.75" stroke="#00ffff" stroke-dasharray="0 9.33 31.09 6.22 6.22 12.44 18.65 9.33 21.76 6.22 9.33 18.65 6.22 9.33 9.33 9.33 21.76 34.2 9.33 9.33 21.76 87.05 9.33 12.44 34.2 37.31 37.31 9.33 9.33 31.09 18.65 124.35 27.98 18.65 9.33 0"/>
<circle cx="1178" cy="206" r="118.75" stroke="#0000ff" stroke-dasharray="0 441.46 6.22 118.14 12.44 15.54 3.11 3.11 3.11 52.85 34.2 55.96"/>
<circle cx="1178" cy="206" r="118.75" stroke="#006000" stroke-dasharray="9.33 31.09 6.22 6.22 12.44 49.74 6.22 9.33 18.65 6.22 9.33 12.44 6.22 96.37 31.09 31.09 18.65 15.54 12.44 254.93 12.44 62.18 18.65 9.33"/>
<circle cx="1178" cy="206" r="118.75" stroke="#5050ff" stroke-dasharray="0 174.1 3.11 71.5 9.33 62.18 21.76 80.83 18.65 6.22 12.44 37.31 9.33 9.33 31.09 31.09 15.54 3.11 3.11 3.11 40.42 102.59"/>
<circle cx="1178" cy="206" r="118.75" stroke="#00f000" stroke-dasharray="0 83.94 9.33 111.92 34.2 71.5 9.33 40.42 6.22 379.28"/>
<circle cx="1178" cy="206" r="121.25" stroke="#00ffff" stroke-dasharray="0 25.39 28.57 3.17 9.52 9.52 12.7 12.7 6.35 22.22 19.05 47.61 28.57 6.35 22.22 19.05 12.7 76.18 25.39 9.52 22.22 47.61 34.92 69.83 15.87 120.62 6.35 3.17 22.22 22.22"/>
<circle cx="1178" cy="206" r="121.25" stroke="#0000ff" stroke-dasharray="0 225.38 6.35 222.2 3.17 44.44 28.57 57.14 3.17 25.39 19.05 53.96 19.05 53.96"/>
<circle cx="1178" cy="206" r="121.25" stroke="#006000" stroke-dasharray="15.87 38.09 3.17 9.52 9.52 73.01 47.61 88.88 50.79 50.79 9.52 34.92 22.22 285.69 22.22 0"/>
<circle cx="1178" cy="206" r="121.25" stroke="#5050ff" stroke-dasharray="0 253.95 19.05 63.49 25.39 57.14 12.7 25.39 9.52 63.49 41.27 19.05 25.39 19.05 53.96 25.39 3.17 44.44"/>
<circle cx="1178" cy="206" r="121.25" stroke="#00f000" stroke-dasharray="0 15.87 9.52 63.49 12.7 6.35 22.22 631.69"/>
<circle cx="1178" cy="206" r="123.75" stroke="#00ffff" stroke-dasharray="0 6.48 12.96 16.2 16.2 29.16 9.72 42.12 22.68 45.36 29.16 19.44 12.96 25.92 6.48 97.19 51.84 45.36 3.24 16.2 3.24 71.27 6.48 123.11 6.48 3.24 12.96 3.24 22.68 16.2"/>
<circle cx="1178" cy="206" r="123.75" stroke="#0000ff" stroke-dasharray="0 230.02 9.72 64.8 3.24 184.67 16.2 3.24 29.16 19.44 3.24 77.75 6.48 32.4 19.44 19.44 3.24 12.96 3.24 38.88"/>
<circle cx="1178" cy="206" r="123.75" stroke="#006000" stroke-dasharray="6.48 45.36 9.72 93.95 45.36 68.04 19.44 6.48 9.72 3.24 51.84 84.23 25.92 291.58 16.2 0"/>
<circle cx="1178" cy="206" r="123.75" stroke="#5050ff" stroke-dasharray="0 19.44 16.2 77.75 3.24 123.11 9.72 12.96 6.48 90.71 32.4 77.75 19.44 51.84 19.44 3.24 19.44 6.48 51.84 6.48 32.4 19.44 12.96 64.8"/>
<circle cx="1178" cy="206" r="123.75" stroke="#00f000" stroke-dasharray="0 61.56 19.44 9.72 22.68 3.24 16.2 644.71"/>
<circle cx="1178" cy="206" r="126.25" stroke="#00ffff" stroke-dasharray="0 46.27 3.31 95.85 23.14 52.88 29.75 26.44 9.92 115.68 49.58 109.07 3.31 191.7 13.22 23.14"/>
<circle cx="1178" cy="206" r="126.25" stroke="#0000ff" stroke-dasharray="0 49.58 26.44 234.67 6.61 191.7 16.53 6.61 9.92 3.31 6.61 13.22 26.44 19.83 13.22 26.44 23.14 13.22 59.49 3.31 6.61 36.36"/>
<circle cx="1178" cy="206" r="126.25" stroke="#006000" stroke-dasharray="19.83 118.99 6.61 23.14 52.88 66.1 23.14 6.61 56.19 79.33 26.44 267.72 3.31 19.83 23.14 0"/>
<circle cx="1178" cy="206" r="126.25" stroke="#5050ff" stroke-dasharray="0 19.83 26.44 204.92 26.44 95.85 29.75 76.02 29.75 16.53 6.61 9.92 3.31 6.61 9.92 29.75 19.83 13.22 26.44 23.14 13.22 105.77"/>
<circle cx="1178" cy="206" r="126.25" stroke="#00f000" stroke-dasharray="0 76.02 62.8 654.43"/>
<circle cx="1178" cy="206" r="128.75" stroke="#00ffff" stroke-dasharray="0 16.85 13.48 16.85 16.85 70.78 3.37 37.08 13.48 40.45 3.37 53.93 16.85 91.01 3.37 37.08 26.97 43.82 16.85 249.43 26.97 10.11"/>
<circle cx="1178" cy="206" r="128.75" stroke="#0000ff" stroke-dasharray="0 64.04 6.74 101.12 3.37 141.57 13.48 195.5 80.9 16.85 74.15 6.74 13.48 23.59 30.34 37.08"/>
<circle cx="1178" cy="206" r="128.75" stroke="#006000" stroke-dasharray="16.85 171.9 20.22 64.04 3.37 26.97 13.48 13.48 53.93 77.53 43.82 293.25 10.11 0"/>
<circle cx="1178" cy="206" r="128.75" stroke="#5050ff" stroke-dasharray="0 30.34 16.85 91.01 33.71 37.08 20.22 3.37 40.45 3.37 10.11 97.75 10.11 3.37 37.08 87.64 3.37 91.01 6.74 74.15 6.74 13.48 23.59 67.41"/>
<circle cx="1178" cy="206" r="128.75" stroke="#00f000" stroke-dasharray="0 70.78 64.04 674.13"/>
<circle cx="1178" cy="206" r="128.75" stroke="#ffff00" stroke-dasharray="0 606.72 10.11 192.13"/>
<circle cx="1178" cy="206" r="131.25" stroke="#00ffff" stroke-dasharray="0 68.72 3.44 82.47 10.31 127.14 3.44 10.31 3.44 27.49 3.44 24.05 3.44 72.16 48.11 37.8 17.18 250.84 30.93 0"/>
<circle cx="1178" cy="206" r="131.25" stroke="#0000ff" stroke-dasharray="0 164.93 30.93 347.05 13.74 54.98 17.18 13.74 30.93 24.05 17.18 41.23 17.18 51.54"/>
<circle cx="1178" cy="206" r="131.25" stroke="#006000" stroke-dasharray="41.23 89.34 24.05 41.23 27.49 3.44 10.31 24.05 3.44 30.93 10.31 3.44 24.05 6.87 24.05 3.44 51.54 68.72 17.18 268.02 20.62 30.93"/>
<circle cx="1178" cy="206" r="131.25" stroke="#5050ff" stroke-dasharray="0 41.23 27.49 154.63 3.44 10.31 24.05 3.44 27.49 41.23 3.44 82.47 20.62 65.29 20.62 82.47 3.44 17.18 13.74 30.93 24.05 17.18 41.23 68.72"/>
<circle cx="1178" cy="206" r="131.25" stroke="#00f000" stroke-dasharray="0 72.16 58.41 694.1"/>
<circle cx="1178" cy="206" r="131.25" stroke="#ffff00" stroke-dasharray="0 556.65 51.54 216.48"/>
<circle cx="1178" cy="206" r="133.75" stroke="#00ffff" stroke-dasharray="0 161.07 14.01 63.03 3.5 38.52 7 3.5 45.52 38.52 3.5 42.02 21.01 7 17.51 17.51 10.5 56.03 7 255.61 14.01 14.01"/>
<circle cx="1178" cy="206" r="133.75" stroke="#0000ff" stroke-dasharray="0 192.59 14.01 259.12 17.51 73.53 10.5 63.03 56.03 7 7 10.5 31.51 31.51 21.01 45.52"/>
<circle cx="1178" cy="206" r="133.75" stroke="#006000" stroke-dasharray="3.5 10.5 31.51 143.56 3.5 14.01 31.51 122.55 3.5 14.01 42.02 77.03 10.5 287.13 17.51 24.51 3.5 0"/>
<circle cx="1178" cy="206" r="133.75" stroke="#5050ff" stroke-dasharray="0 3.5 10.5 31.51 49.02 147.07 38.52 7 3.5 45.52 3.5 24.51 10.5 66.53 3.5 49.02 3.5 10.5 42.02 59.53 21.01 56.03 7 7 10.5 31.51 31.51 66.53"/>
<circle cx="1178" cy="206" r="133.75" stroke="#00f000" stroke-dasharray="0 94.54 66.53 14.01 14.01 150.57 21.01 84.04 3.5 378.17 10.5 3.5"/>
<circle cx="1178" cy="206" r="133.75" stroke="#ffff00" stroke-dasharray="0 567.25 42.02 231.1"/>
<circle cx="1178" cy="206" r="136.25" stroke="#00ffff" stroke-dasharray="0 64.21 7.13 103.44 17.84 96.31 74.91 74.91 14.27 3.57 17.84 17.84 14.27 46.37 3.57 281.79 14.27 3.57"/>
<circle cx="1178" cy="206" r="136.25" stroke="#0000ff" stroke-dasharray="0 85.61 10.7 42.8 3.57 64.21 3.57 217.59 10.7 35.67 17.84 14.27 14.27 46.37 24.97 10.7 35.67 17.84 10.7 3.57 28.54 10.7 60.64 28.54 39.24 17.84"/>
<circle cx="1178" cy="206" r="136.25" stroke="#006000" stroke-dasharray="60.64 131.98 14.27 3.57 39.24 128.41 28.54 445.88 3.57 0"/>
<circle cx="1178" cy="206" r="136.25" stroke="#5050ff" stroke-dasharray="0 60.64 3.57 7.13 14.27 164.08 39.24 117.71 3.57 110.58 32.1 3.57 10.7 71.34 17.84 10.7 3.57 28.54 10.7 60.64 28.54 57.07"/>
<circle cx="1178" cy="206" r="136.25" stroke="#00f000" stroke-dasharray="0 96.31 42.8 3.57 32.1 189.05 14.27 32.1 17.84 24.97 3.57 399.51"/>
<circle cx="1178" cy="206" r="136.25" stroke="#ffff00" stroke-dasharray="0 592.12 10.7 253.26"/>
<circle cx="1178" cy="206" r="138.75" stroke="#00ffff" stroke-dasharray="0 116.24 25.43 39.96 21.79 47.22 7.26 18.16 14.53 7.26 39.96 3.63 47.22 65.38 14.53 10.9 3.63 21.79 21.79 308.76 3.63 32.69"/>
<circle cx="1178" cy="206" r="138.75" stroke="#0000ff" stroke-dasharray="0 87.18 7.26 116.24 3.63 123.5 3.63 72.65 3.63 25.43 10.9 21.79 3.63 3.63 21.79 21.79 21.79 69.02 36.32 14.53 14.53 21.79 3.63 36.32 39.96 54.49 32.69 0"/>
<circle cx="1178" cy="206" r="138.75" stroke="#006000" stroke-dasharray="61.75 79.91 10.9 50.85 7.26 3.63 36.32 138.03 25.43 457.69"/>
<circle cx="1178" cy="206" r="138.75" stroke="#5050ff" stroke-dasharray="0 61.75 25.43 7.26 3.63 76.28 7.26 76.28 18.16 14.53 7.26 170.73 7.26 72.65 69.02 36.32 14.53 14.53 21.79 3.63 36.32 39.96 50.85 36.32"/>
<circle cx="1178" cy="206" r="138.75" stroke="#00f000" stroke-dasharray="0 98.08 18.16 36.32 21.79 243.38 25.43 428.63"/>
<circle cx="1178" cy="206" r="141.25" stroke="#00ffff" stroke-dasharray="0 40.68 18.49 62.86 22.19 40.68 22.19 77.66 14.79 11.09 77.66 51.77 7.4 73.96 25.89 303.23 7.4 29.58"/>
<circle cx="1178" cy="206" r="141.25" stroke="#0000ff" stroke-dasharray="0 88.75 11.09 44.37 25.89 288.44 48.07 40.68 11.09 81.35 11.09 7.4 11.09 11.09 107.24 11.09 18.49 11.09 7.4 22.19 29.58 0"/>
<circle cx="1178" cy="206" r="141.25" stroke="#006000" stroke-dasharray="40.68 73.96 7.4 85.05 14.79 25.89 14.79 133.12 36.98 18.49 7.4 428.96"/>
<circle cx="1178" cy="206" r="141.25" stroke="#5050ff" stroke-dasharray="0 59.17 29.58 133.12 25.89 14.79 22.19 14.79 11.09 77.66 7.4 36.98 3.7 70.26 14.79 36.98 81.35 11.09 7.4 11.09 11.09 107.24 11.09 18.49 11.09 7.4 14.79 36.98"/>
<circle cx="1178" cy="206" r="141.25" stroke="#00f000" stroke-dasharray="0 99.84 14.79 55.47 14.79 251.46 3.7 7.4 3.7 436.35"/>
<circle cx="1178" cy="206" r="143.75" stroke="#00ffff" stroke-dasharray="0 41.4 22.58 60.21 22.58 52.69 22.58 79.03 86.56 3.76 15.05 45.16 15.05 71.5 7.53 357.52"/>
<circle cx="1178" cy="206" r="143.75" stroke="#0000ff" stroke-dasharray="0 11.29 15.05 120.43 41.4 33.87 7.53 278.49 7.53 15.05 7.53 60.21 18.82 18.82 3.76 33.87 7.53 11.29 143.01 18.82 48.92 0"/>
<circle cx="1178" cy="206" r="143.75" stroke="#006000" stroke-dasharray="11.29 15.05 15.05 75.27 7.53 63.98 11.29 52.69 15.05 139.24 45.16 451.6"/>
<circle cx="1178" cy="206" r="143.75" stroke="#5050ff" stroke-dasharray="0 63.98 45.16 120.43 22.58 15.05 33.87 86.56 3.76 75.27 41.4 7.53 15.05 15.05 52.69 18.82 18.82 3.76 33.87 7.53 11.29 150.53 11.29 48.92"/>
<circle cx="1178" cy="206" r="143.75" stroke="#00f000" stroke-dasharray="0 109.14 7.53 786.54"/>
<circle cx="1178" cy="206" r="143.75" stroke="#ffff00" stroke-dasharray="0 835.47 7.53 60.21"/>
<circle cx="1178" cy="206" r="146.25" stroke="#00ffff" stroke-dasharray="0 61.26 22.97 126.35 26.8 68.92 45.95 11.49 38.29 107.21 7.66 84.23 7.66 57.43 45.95 61.26 19.14 76.58 15.32 7.66 15.32 11.49"/>
<circle cx="1178" cy="206" r="146.25" stroke="#0000ff" stroke-dasharray="0 11.49 49.77 91.89 42.12 321.62 53.6 38.29 19.14 88.06 42.12 3.83 11.49 19.14 45.95 7.66 7.66 53.6 11.49 0"/>
<circle cx="1178" cy="206" r="146.25" stroke="#006000" stroke-dasharray="11.49 111.04 26.8 45.95 7.66 53.6 22.97 72.75 11.49 65.09 3.83 3.83 45.95 436.49"/>
<circle cx="1178" cy="206" r="146.25" stroke="#5050ff" stroke-dasharray="0 84.23 38.29 26.8 3.83 49.77 7.66 26.8 19.14 22.97 26.8 95.72 26.8 3.83 3.83 45.95 26.8 61.26 30.63 26.8 7.66 11.49 19.14 45.95 3.83 42.12 3.83 76.58 7.66 38.29 7.66 26.8"/>
<circle cx="1178" cy="206" r="146.25" stroke="#ffff00" stroke-dasharray="0 635.58 11.49 206.76 15.32 49.77"/>
<circle cx="1178" cy="206" r="148.75" stroke="#00ffff" stroke-dasharray="0 38.94 11.68 19.47 15.58 144.09 11.68 70.1 11.68 15.58 11.68 19.47 15.58 101.25 11.68 116.83 23.37 50.63 38.94 3.89 31.15 132.41 7.79 3.89 15.58 11.68"/>
<circle cx="1178" cy="206" r="148.75" stroke="#0000ff" stroke-dasharray="0 35.05 3.89 15.58 15.58 175.24 11.68 66.2 15.58 11.68 3.89 31.15 27.26 38.94 3.89 42.84 15.58 35.05 31.15 19.47 7.79 120.72 3.89 35.05 23.37 15.58 46.73 35.05 7.79 27.26 11.68 0"/>
<circle cx="1178" cy="206" r="148.75" stroke="#006000" stroke-dasharray="35.05 167.45 27.26 206.4 11.68 7.79 31.15 447.84"/>
<circle cx="1178" cy="206" r="148.75" stroke="#5050ff" stroke-dasharray="0 50.63 3.89 31.15 116.83 38.94 3.89 11.68 54.52 42.84 15.58 42.84 23.37 11.68 3.89 62.31 35.05 31.15 19.47 7.79 7.79 23.37 7.79 19.47 23.37 73.99 3.89 23.37 15.58 46.73 23.37 27.26 3.89 27.26"/>
<circle cx="1178" cy="206" r="148.75" stroke="#ffff00" stroke-dasharray="0 646.45 19.47 210.29 11.68 46.73"/>
<circle cx="1178" cy="206" r="151.25" stroke="#00ffff" stroke-dasharray="0 67.32 47.52 47.52 23.76 102.95 3.96 31.68 27.72 23.76 15.84 110.87 3.96 134.63 7.92 55.44 35.64 15.84 31.68 126.71 35.64 0"/>
<circle cx="1178" cy="206" r="151.25" stroke="#0000ff" stroke-dasharray="0 55.44 11.88 63.36 23.76 63.36 7.92 19.8 43.56 102.95 83.15 31.68 15.84 47.52 23.76 19.8 3.96 19.8 3.96 98.99 15.84 31.68 63.36 55.44 7.92 35.64"/>
<circle cx="1178" cy="206" r="151.25" stroke="#006000" stroke-dasharray="55.44 170.27 19.8 106.91 23.76 98.99 27.72 447.45"/>
<circle cx="1178" cy="206" r="151.25" stroke="#5050ff" stroke-dasharray="0 114.83 15.84 23.76 7.92 23.76 31.68 75.23 31.68 197.99 47.52 23.76 19.8 3.96 19.8 11.88 11.88 27.72 15.84 146.51 47.52 51.48"/>
<circle cx="1178" cy="206" r="151.25" stroke="#ffff00" stroke-dasharray="0 661.27 27.72 209.86 7.92 43.56"/>
<circle cx="1178" cy="206" r="153.75" stroke="#00ffff" stroke-dasharray="0 100.63 24.15 80.5 76.48 48.3 28.18 28.18 12.08 144.91 4.03 193.21 4.03 28.18 8.05 108.68 20.13 20.13 32.2 4.03"/>
<circle cx="1178" cy="206" r="153.75" stroke="#0000ff" stroke-dasharray="0 16.1 8.05 32.2 44.28 32.2 56.35 4.03 12.08 76.48 16.1 100.63 96.6 4.03 40.25 40.25 24.15 44.28 24.15 64.4 4.03 24.15 8.05 12.08 32.2 4.03 52.33 36.23 20.13 32.2 4.03 0"/>
<circle cx="1178" cy="206" r="153.75" stroke="#006000" stroke-dasharray="16.1 8.05 12.08 4.03 16.1 305.91 24.15 108.68 4.03 466.92"/>
<circle cx="1178" cy="206" r="153.75" stroke="#5050ff" stroke-dasharray="0 36.23 4.03 84.53 8.05 56.35 4.03 104.65 32.2 28.18 4.03 177.11 4.03 4.03 32.2 24.15 44.28 60.38 28.18 8.05 20.13 16.1 4.03 32.2 4.03 52.33 16.1 76.48"/>
<circle cx="1178" cy="206" r="153.75" stroke="#ffff00" stroke-dasharray="0 672.2 36.23 257.61"/>
<circle cx="1178" cy="206" r="156.25" stroke="#ffff00" stroke-dasharray="0 695.4 4.09 8.18 12.27 16.36 12.27 233.17"/>
<circle cx="1178" cy="206" r="156.25" stroke="#00ffff" stroke-dasharray="0 4.09 8.18 102.27 16.36 89.99 45 57.27 4.09 20.45 16.36 392.7 16.36 98.17 8.18 24.54 4.09 4.09 16.36 20.45 12.27 20.45"/>
<circle cx="1178" cy="206" r="156.25" stroke="#5050ff" stroke-dasharray="4.09 36.82 32.72 36.82 4.09 16.36 4.09 81.81 4.09 45 57.27 4.09 20.45 40.91 53.18 122.72 24.54 36.82 28.63 45 8.18 12.27 4.09 49.09 24.54 69.54 4.09 36.82 4.09 69.54"/>
<circle cx="1178" cy="206" r="156.25" stroke="#0000ff" stroke-dasharray="0 12.27 28.63 32.72 36.82 24.54 81.81 147.26 24.54 53.18 122.72 24.54 36.82 28.63 40.91 28.63 12.27 12.27 8.18 40.91 69.54 12.27 24.54 24.54 20.45 12.27 20.45 0"/>
<circle cx="1178" cy="206" r="158.75" stroke="#ffff00" stroke-dasharray="0 748.09 29.09 220.27"/>
<circle cx="1178" cy="206" r="158.75" stroke="#00ffff" stroke-dasharray="0 249.36 4.16 4.16 4.16 95.59 24.94 394.83 37.4 74.81 4.16 103.9"/>
<circle cx="1178" cy="206" r="158.75" stroke="#5050ff" stroke-dasharray="8.31 41.56 41.56 12.47 62.34 62.34 20.78 4.16 4.16 29.09 70.65 37.4 24.94 8.31 29.09 124.68 4.16 62.34 33.25 16.62 49.87 174.55 12.47 62.34"/>
<circle cx="1178" cy="206" r="158.75" stroke="#0000ff" stroke-dasharray="0 8.31 41.56 41.56 12.47 62.34 62.34 33.25 24.94 95.59 12.47 24.94 8.31 29.09 124.68 4.16 62.34 33.25 16.62 116.37 74.81 4.16 29.09 12.47 62.34 0"/>
<circle cx="1178" cy="206" r="161.25" stroke="#ffff00" stroke-dasharray="0 776.76 8.44 227.96"/>
<circle cx="1178" cy="206" r="161.25" stroke="#00ffff" stroke-dasharray="0 109.76 21.11 181.53 92.87 8.44 4.22 67.54 16.89 291.28 25.33 4.22 8.44 71.77 12.66 97.09"/>
<circle cx="1178" cy="206" r="161.25" stroke="#5050ff" stroke-dasharray="8.44 46.44 29.55 46.44 37.99 118.2 8.44 109.76 8.44 4.22 67.54 105.54 4.22 4.22 12.66 46.44 12.66 8.44 12.66 29.55 54.88 42.22 4.22 59.1 8.44 29.55 46.44 46.44"/>
<circle cx="1178" cy="206" r="161.25" stroke="#0000ff" stroke-dasharray="0 8.44 46.44 29.55 25.33 59.1 118.2 8.44 16.89 189.97 88.65 4.22 4.22 12.66 46.44 12.66 8.44 12.66 29.55 63.32 8.44 37.99 50.66 8.44 12.66 12.66 4.22 46.44 46.44 0"/>
<circle cx="1178" cy="206" r="163.75" stroke="#00ffff" stroke-dasharray="0 64.3 25.72 30.01 64.3 47.16 8.57 90.03 4.29 4.29 12.86 141.47 38.58 42.87 8.57 38.58 4.29 210.06 17.15 60.02 8.57 107.17"/>
<circle cx="1178" cy="206" r="163.75" stroke="#5050ff" stroke-dasharray="17.15 38.58 8.57 30.01 8.57 180.05 4.29 47.16 4.29 12.86 141.47 38.58 42.87 17.15 30.01 115.75 85.74 8.57 4.29 64.3 12.86 8.57 90.03 17.15"/>
<circle cx="1178" cy="206" r="163.75" stroke="#0000ff" stroke-dasharray="0 17.15 38.58 34.3 4.29 8.57 17.15 64.3 47.16 8.57 42.87 4.29 42.87 252.93 8.57 34.3 111.46 85.74 8.57 21.43 47.16 111.46 17.15 0"/>
<circle cx="1178" cy="206" r="166.25" stroke="#00ffff" stroke-dasharray="0 65.29 17.41 47.88 26.11 4.35 13.06 21.76 13.06 134.92 17.41 156.69 8.7 269.85 21.76 30.47 21.76 174.1"/>
<circle cx="1178" cy="206" r="166.25" stroke="#5050ff" stroke-dasharray="65.29 34.82 30.47 26.11 4.35 13.06 21.76 60.93 39.17 17.41 8.7 17.41 4.35 17.41 34.82 21.76 100.11 52.23 21.76 8.7 26.11 4.35 8.7 13.06 13.06 17.41 21.76 34.82 56.58 21.76 30.47 21.76 13.06 30.47 4.35 4.35 4.35 8.7 47.88 60.93"/>
<circle cx="1178" cy="206" r="166.25" stroke="#0000ff" stroke-dasharray="0 82.7 17.41 108.81 47.88 39.17 17.41 8.7 17.41 56.58 21.76 108.81 43.52 21.76 8.7 26.11 4.35 8.7 13.06 13.06 17.41 21.76 34.82 143.63 30.47 4.35 4.35 4.35 8.7 47.88 60.93 0"/>
<circle cx="1178" cy="206" r="168.75" stroke="#00ffff" stroke-dasharray="0 70.69 35.34 39.76 22.09 39.76 26.51 340.18 4.42 229.73 22.09 229.73"/>
<circle cx="1178" cy="206" r="168.75" stroke="#5050ff" stroke-dasharray="70.69 35.34 39.76 22.09 39.76 70.69 22.09 26.51 8.84 44.18 30.93 4.42 92.78 13.25 13.25 79.52 66.27 30.93 8.84 75.1 13.25 22.09 44.18 8.84 30.93 22.09 97.19 4.42 22.09 0"/>
<circle cx="1178" cy="206" r="168.75" stroke="#0000ff" stroke-dasharray="0 234.15 44.18 22.09 26.51 8.84 44.18 30.93 4.42 92.78 13.25 13.25 39.76 4.42 35.34 66.27 30.93 8.84 75.1 79.52 8.84 30.93 22.09 97.19 4.42 22.09"/>
<circle cx="1178" cy="206" r="171.25" stroke="#00ffff" stroke-dasharray="0 13.45 4.48 62.77 31.38 35.87 35.87 26.9 17.93 4.48 4.48 112.08 17.93 470.75 17.93 71.73 17.93 130.02"/>
<circle cx="1178" cy="206" r="171.25" stroke="#5050ff" stroke-dasharray="13.45 4.48 62.77 31.38 13.45 4.48 17.93 35.87 26.9 17.93 4.48 53.8 62.77 53.8 67.25 17.93 8.97 8.97 49.32 85.18 89.67 76.22 31.38 17.93 71.73 26.9 116.57 4.48"/>
<circle cx="1178" cy="206" r="171.25" stroke="#0000ff" stroke-dasharray="0 125.53 4.48 107.6 49.32 80.7 35.87 67.25 17.93 8.97 8.97 49.32 85.18 89.67 76.22 138.98 8.97 116.57 4.48 0"/>
<circle cx="1178" cy="206" r="173.75" stroke="#00ffff" stroke-dasharray="0 109.17 13.65 104.62 4.55 4.55 77.33 9.1 9.1 22.74 9.1 400.29 9.1 86.43 9.1 72.78 22.74 127.37"/>
<circle cx="1178" cy="206" r="173.75" stroke="#5050ff" stroke-dasharray="109.17 13.65 4.55 4.55 63.68 36.39 4.55 77.33 9.1 86.43 168.3 68.23 77.33 4.55 4.55 109.17 18.2 9.1 63.68 45.49 72.78 40.94"/>
<circle cx="1178" cy="206" r="173.75" stroke="#0000ff" stroke-dasharray="0 127.37 4.55 63.68 31.84 104.62 22.74 9.1 45.49 168.3 68.23 77.33 4.55 4.55 31.84 9.1 68.23 90.98 9.1 22.74 13.65 72.78 40.94 0"/>
<circle cx="1178" cy="206" r="176.25" stroke="#ffff00" stroke-dasharray="0 179.95 4.61 922.84"/>
<circle cx="1178" cy="206" r="176.25" stroke="#00ffff" stroke-dasharray="0 115.36 9.23 115.36 41.53 9.23 18.46 9.23 4.61 4.61 23.07 13.84 23.07 484.49 23.07 59.98 4.61 4.61 9.23 133.81"/>
<circle cx="1178" cy="206" r="176.25" stroke="#5050ff" stroke-dasharray="69.21 13.84 32.3 9.23 18.46 13.84 4.61 9.23 9.23 4.61 13.84 83.06 9.23 32.3 4.61 59.98 198.41 69.21 18.46 32.3 18.46 50.76 13.84 78.44 4.61 23.07 13.84 18.46 27.69 18.46 4.61 13.84 73.83 41.53"/>
<circle cx="1178" cy="206" r="176.25" stroke="#0000ff" stroke-dasharray="0 69.21 13.84 59.98 13.84 4.61 9.23 27.69 41.53 69.21 9.23 32.3 13.84 221.48 69.21 18.46 32.3 18.46 50.76 13.84 78.44 41.53 18.46 32.3 4.61 13.84 13.84 73.83 41.53 0"/>
<circle cx="1178" cy="206" r="178.75" stroke="#00ffff" stroke-dasharray="0 37.44 18.72 126.35 9.36 65.52 28.08 28.08 14.04 51.48 32.76 126.35 4.68 425.85 37.44 60.84 4.68 51.48"/>
<circle cx="1178" cy="206" r="178.75" stroke="#5050ff" stroke-dasharray="37.44 18.72 9.36 46.8 28.08 51.48 23.4 18.72 23.4 28.08 9.36 32.76 28.08 56.16 126.35 4.68 60.84 74.87 42.12 9.36 28.08 65.52 37.44 46.8 14.04 23.4 23.4 37.44 37.44 4.68 9.36 14.04 14.04 37.44"/>
<circle cx="1178" cy="206" r="178.75" stroke="#0000ff" stroke-dasharray="0 65.52 46.8 28.08 42.12 32.76 18.72 60.84 18.72 42.12 23.4 224.62 74.87 42.12 9.36 28.08 65.52 37.44 46.8 14.04 23.4 98.27 4.68 9.36 9.36 18.72 37.44 0"/>
<circle cx="1178" cy="206" r="181.25" stroke="#00ffff" stroke-dasharray="0 161.33 4.75 66.43 18.98 28.47 23.73 9.49 42.71 47.45 18.98 578.9 23.73 56.94 4.75 52.2"/>
<circle cx="1178" cy="206" r="181.25" stroke="#5050ff" stroke-dasharray="4.75 80.67 66.43 61.69 18.98 18.98 28.47 75.92 14.24 28.47 4.75 18.98 189.8 56.94 61.69 23.73 14.24 66.43 52.2 37.96 28.47 18.98 28.47 23.73 47.45 14.24 18.98 33.22"/>
<circle cx="1178" cy="206" r="181.25" stroke="#0000ff" stroke-dasharray="0 4.75 80.67 66.43 9.49 4.75 47.45 90.16 9.49 56.94 28.47 213.53 56.94 61.69 23.73 14.24 66.43 52.2 37.96 28.47 18.98 99.65 9.49 23.73 33.22 0"/>
<circle cx="1178" cy="206" r="183.75" stroke="#00ffff" stroke-dasharray="0 67.35 33.67 9.62 4.81 120.26 24.05 24.05 43.3 91.4 14.43 4.81 4.81 96.21 43.3 423.33 43.3 105.83"/>
<circle cx="1178" cy="206" r="183.75" stroke="#5050ff" stroke-dasharray="14.43 19.24 14.43 52.92 9.62 4.81 120.26 24.05 24.05 43.3 91.4 14.43 4.81 4.81 67.35 76.97 43.3 52.92 43.3 9.62 91.4 28.86 76.97 4.81 14.43 9.62 9.62 14.43 19.24 43.3 43.3 62.54"/>
<circle cx="1178" cy="206" r="183.75" stroke="#0000ff" stroke-dasharray="0 14.43 19.24 14.43 19.24 442.57 28.86 43.3 4.81 43.3 52.92 43.3 9.62 91.4 28.86 76.97 4.81 14.43 9.62 9.62 14.43 105.83 62.54 0"/>
<circle cx="1178" cy="206" r="186.25" stroke="#00ffff" stroke-dasharray="0 87.77 19.5 34.13 4.88 107.27 9.75 43.88 29.26 107.27 9.75 29.26 4.88 73.14 19.5 477.85 14.63 97.52"/>
<circle cx="1178" cy="206" r="186.25" stroke="#5050ff" stroke-dasharray="14.63 92.64 9.75 4.88 19.5 4.88 107.27 9.75 14.63 4.88 24.38 29.26 78.02 39.01 29.26 4.88 4.88 9.75 34.13 43.88 9.75 19.5 4.88 82.89 39.01 9.75 73.14 53.64 73.14 34.13 78.02 14.63 34.13 53.64 9.75 0"/>
<circle cx="1178" cy="206" r="186.25" stroke="#0000ff" stroke-dasharray="0 14.63 73.14 29.26 4.88 156.03 4.88 131.65 29.26 48.76 9.75 34.13 24.38 29.26 19.5 4.88 82.89 39.01 9.75 73.14 53.64 73.14 34.13 126.78 53.64 9.75"/>
<circle cx="1178" cy="206" r="188.75" stroke="#ffff00" stroke-dasharray="0 1136.54 4.94 44.47"/>
<circle cx="1178" cy="206" r="188.75" stroke="#00ffff" stroke-dasharray="0 93.89 34.59 14.82 14.82 291.55 9.88 113.65 34.59 252.01 14.82 133.42 9.88 64.24 9.88 93.89"/>
<circle cx="1178" cy="206" r="188.75" stroke="#5050ff" stroke-dasharray="34.59 93.89 4.94 24.71 4.94 9.88 64.24 4.94 14.82 9.88 143.3 4.94 9.88 34.59 9.88 14.82 69.18 84 24.71 49.41 34.59 14.82 69.18 79.06 49.41 9.88 4.94 19.77 14.82 9.88 64.24 9.88 34.59 49.41 9.88 0"/>
<circle cx="1178" cy="206" r="188.75" stroke="#0000ff" stroke-dasharray="0 34.59 59.3 39.53 9.88 19.77 9.88 64.24 4.94 14.82 9.88 143.3 4.94 9.88 24.71 19.77 14.82 69.18 19.77 34.59 29.65 24.71 49.41 34.59 14.82 69.18 29.65 14.82 34.59 49.41 9.88 4.94 19.77 133.42 9.88 4.94 34.59 9.88"/>
<circle cx="1178" cy="206" r="191.25" stroke="#ffff00" stroke-dasharray="0 1151.59 5.01 45.06"/>
<circle cx="1178" cy="206" r="191.25" stroke="#00ffff" stroke-dasharray="0 105.15 30.04 10.01 15.02 300.41 15.02 115.16 10.01 600.83"/>
<circle cx="1178" cy="206" r="191.25" stroke="#5050ff" stroke-dasharray="40.06 40.06 25.03 55.08 100.14 40.06 125.17 50.07 5.01 20.03 75.1 25.03 45.06 60.08 35.05 60.08 55.08 30.04 5.01 50.07 15.02 20.03 20.03 10.01 115.16 75.1 5.01 0"/>
<circle cx="1178" cy="206" r="191.25" stroke="#0000ff" stroke-dasharray="0 40.06 40.06 55.08 10.01 115.16 40.06 125.17 35.05 20.03 20.03 75.1 15.02 55.08 60.08 35.05 60.08 55.08 30.04 5.01 50.07 15.02 20.03 20.03 10.01 115.16 30.04 5.01 40.06 5.01"/>
<circle cx="1178" cy="206" r="193.75" stroke="#00ffff" stroke-dasharray="0 116.66 20.29 15.22 15.22 1049.98"/>
<circle cx="1178" cy="206" r="193.75" stroke="#5050ff" stroke-dasharray="45.65 136.95 60.87 10.14 10.14 81.16 55.8 71.01 15.22 25.36 147.1 86.23 5.07 65.94 50.72 30.43 5.07 60.87 20.29 15.22 106.52 15.22 50.72 45.65"/>
<circle cx="1178" cy="206" r="193.75" stroke="#0000ff" stroke-dasharray="0 45.65 71.01 20.29 15.22 15.22 15.22 60.87 10.14 10.14 81.16 55.8 71.01 15.22 25.36 147.1 86.23 5.07 65.94 50.72 30.43 5.07 60.87 20.29 15.22 106.52 15.22 50.72 45.65 0"/>
<circle cx="1178" cy="206" r="196.25" stroke="#ffff00" stroke-dasharray="0 154.13 5.14 1073.8"/>
<circle cx="1178" cy="206" r="196.25" stroke="#00ffff" stroke-dasharray="0 118.17 25.69 15.41 10.28 349.37 30.83 683.33"/>
<circle cx="1178" cy="206" r="196.25" stroke="#5050ff" stroke-dasharray="71.93 35.96 5.14 35.96 5.14 30.83 66.79 123.31 15.41 71.93 10.28 77.07 61.65 5.14 51.38 87.34 56.52 15.41 56.52 25.69 30.83 35.96 20.55 15.41 82.21 56.52 61.65 20.55"/>
<circle cx="1178" cy="206" r="196.25" stroke="#0000ff" stroke-dasharray="0 71.93 35.96 5.14 5.14 25.69 5.14 20.55 15.41 66.79 123.31 15.41 71.93 10.28 46.24 92.48 5.14 51.38 87.34 56.52 15.41 56.52 25.69 30.83 35.96 20.55 15.41 82.21 56.52 61.65 20.55 0"/>
</g>
<polygon fill="#000" points="1184,318 1178.5,390 1192,390"/>
<polygon fill="#000" points="1202,320 1196,390 1213,390"/>
<polygon fill="#000" points="1218,322 1215,390 1236,385"/>
<polygon fill="#000" points="1243,316 1237,375 1264,354"/>
<polygon fill="#000" points="1249,288 1268,352 1292,336"/>
<polygon fill="#000" points="1092,311 1074,336 1084,346"/>
<polygon fill="#000" points="1109,326 1093,354 1106,378"/>
<polygon fill="#000" points="1125.6,331 1112,372 1121,370"/>
<polygon fill="#000" points="1143,341 1132,375 1140,375"/>
<polygon fill="#000" points="1165,283 1148,378 1157,378"/>
<polygon fill="#000" points="1169.6,304 1163,380 1172,380"/>
<polygon fill="#000" points="1033,158 1008,153 1008,163"/>
<polygon fill="#000" points="1030,173 1006,168 1006,178"/>
<polygon fill="#000" points="1035,226 1006,219 1006,233"/>
<polygon fill="#000" points="1033,254 1006,247 1008,261"/>
<polygon fill="#000" points="1030,267 1010,261 1012,273"/>
<polygon fill="#000" points="1022,190 1006,186 1006,193"/>
<polygon fill="#000" points="1313,168 1340,163 1340,173"/>
<polygon fill="#000" points="1318,188 1346,184 1346,193"/>
<polygon fill="#000" points="1316,158 1340,155 1340,160"/>
<line x1="1295" y1="118" x2="1322" y2="138" stroke="#ffff00" stroke-width="2.5"/>
<line x1="1303" y1="112" x2="1330" y2="131" stroke="#ffff00" stroke-width="2"/>
<line x1="1310" y1="142" x2="1318" y2="161" stroke="#c08000" stroke-width="2"/>
<line x1="1321" y1="146" x2="1332" y2="151" stroke="#ffff00" stroke-width="2"/>
<line x1="1330" y1="212" x2="1330" y2="220" stroke="#ffff00" stroke-width="1"/>
<line x1="1324" y1="128" x2="1330" y2="136" stroke="#ff3030" stroke-width="1.5"/>
<line x1="1252" y1="55" x2="1262" y2="51" stroke="#ffff00" stroke-width="2.5"/>
<line x1="1268" y1="62" x2="1276" y2="67" stroke="#ffff00" stroke-width="2"/>
<line x1="1290" y1="84" x2="1296" y2="86" stroke="#ffff00" stroke-width="2"/>
<line x1="1079" y1="70" x2="1089" y2="61" stroke="#ffff00" stroke-width="2.5"/>
<line x1="1048" y1="118" x2="1058" y2="103" stroke="#ffff00" stroke-width="2.5"/>
<line x1="1085" y1="82" x2="1086" y2="92" stroke="#ffff00" stroke-width="1.5"/>
<line x1="1012" y1="234" x2="1014" y2="240" stroke="#ffff00" stroke-width="2"/>
<line x1="1017" y1="249" x2="1021" y2="256" stroke="#ffff00" stroke-width="2"/>
<line x1="1031" y1="221" x2="1034" y2="229" stroke="#ffff00" stroke-width="1.5"/>
<line x1="1030" y1="275" x2="1035" y2="279" stroke="#ff3030" stroke-width="2"/>
<line x1="1026" y1="285" x2="1030" y2="288" stroke="#c08000" stroke-width="2"/>
<line x1="1060" y1="286" x2="1066" y2="285" stroke="#ff3030" stroke-width="2"/>
<line x1="1004" y1="207" x2="1005" y2="214" stroke="#ffff00" stroke-width="1.5"/>
<line x1="1009" y1="207" x2="1010" y2="214" stroke="#ffff00" stroke-width="1.5"/>
<line x1="1234" y1="362" x2="1240" y2="363" stroke="#ffff00" stroke-width="2.5"/>
<circle cx="1178.5" cy="206.5" r="190" fill="none" stroke="#fff" stroke-width="1" shape-rendering="crispEdges"/>
<circle cx="1178.5" cy="206.5" r="126.67" fill="none" stroke="#fff" stroke-width="1" shape-rendering="crispEdges"/>
<circle cx="1178.5" cy="206.5" r="63.33" fill="none" stroke="#fff" stroke-width="1" shape-rendering="crispEdges"/>
<path fill="none" stroke="#fff" stroke-width="1" shape-rendering="crispEdges" d="M1178.5 206.5L1178.5 10.5M1177.0 195.9L1180.0 195.9M1177.0 185.4L1180.0 185.4M1177.0 174.8L1180.0 174.8M1177.0 164.3L1180.0 164.3M1176.7 153.7L1180.3 153.7M1176.3 143.2L1180.7 143.2M1175.9 132.6L1181.1 132.6M1175.6 122.1L1181.4 122.1M1175.2 111.5L1181.8 111.5M1174.8 100.9L1182.2 100.9M1174.4 90.4L1182.6 90.4M1174.1 79.8L1182.9 79.8M1173.7 69.3L1183.3 69.3M1173.3 58.7L1183.7 58.7M1173.0 48.2L1184.0 48.2M1172.6 37.6L1184.4 37.6M1172.2 27.1L1184.8 27.1M1178.5 206.5L1273.5 42.0M1183.5 197.2L1184.1 197.5M1188.4 187.8L1189.7 188.6M1193.4 178.5L1195.3 179.6M1198.3 169.2L1200.9 170.7M1203.3 159.9L1206.5 161.7M1208.3 150.5L1212.1 152.8M1213.2 141.2L1217.7 143.8M1218.2 131.9L1223.3 134.8M1223.1 122.6L1228.9 125.9M1228.1 113.2L1234.5 116.9M1233.0 103.9L1240.1 108.0M1238.0 94.6L1245.7 99.0M1243.0 85.3L1251.3 90.1M1247.9 75.9L1256.9 81.1M1252.9 66.6L1262.5 72.1M1257.8 57.3L1268.0 63.2M1262.8 48.0L1273.6 54.2M1178.5 206.5L1343.0 111.5M1187.5 200.9L1187.8 201.5M1196.4 195.3L1197.2 196.6M1205.4 189.7L1206.5 191.6M1214.3 184.1L1215.8 186.7M1223.3 178.5L1225.1 181.7M1232.2 172.9L1234.5 176.7M1241.2 167.3L1243.8 171.8M1250.2 161.7L1253.1 166.8M1259.1 156.1L1262.4 161.9M1268.1 150.5L1271.8 156.9M1277.0 144.9L1281.1 152.0M1286.0 139.3L1290.4 147.0M1294.9 133.7L1299.7 142.0M1303.9 128.1L1309.1 137.1M1312.9 122.5L1318.4 132.1M1321.8 117.0L1327.7 127.2M1330.8 111.4L1337.0 122.2M1178.5 206.5L1374.5 206.5M1189.1 205.0L1189.1 208.0M1199.6 205.0L1199.6 208.0M1210.2 205.0L1210.2 208.0M1220.7 205.0L1220.7 208.0M1231.3 204.7L1231.3 208.3M1241.8 204.3L1241.8 208.7M1252.4 203.9L1252.4 209.1M1262.9 203.6L1262.9 209.4M1273.5 203.2L1273.5 209.8M1284.1 202.8L1284.1 210.2M1294.6 202.4L1294.6 210.6M1305.2 202.1L1305.2 210.9M1315.7 201.7L1315.7 211.3M1326.3 201.3L1326.3 211.7M1336.8 201.0L1336.8 212.0M1347.4 200.6L1347.4 212.4M1357.9 200.2L1357.9 212.8M1178.5 206.5L1343.0 301.5M1187.8 211.5L1187.5 212.1M1197.2 216.4L1196.4 217.7M1206.5 221.4L1205.4 223.3M1215.8 226.3L1214.3 228.9M1225.1 231.3L1223.3 234.5M1234.5 236.3L1232.2 240.1M1243.8 241.2L1241.2 245.7M1253.1 246.2L1250.2 251.3M1262.4 251.1L1259.1 256.9M1271.8 256.1L1268.1 262.5M1281.1 261.0L1277.0 268.1M1290.4 266.0L1286.0 273.7M1299.7 271.0L1294.9 279.3M1309.1 275.9L1303.9 284.9M1318.4 280.9L1312.9 290.5M1327.7 285.8L1321.8 296.0M1337.0 290.8L1330.8 301.6M1178.5 206.5L1273.5 371.0M1184.1 215.5L1183.5 215.8M1189.7 224.4L1188.4 225.2M1195.3 233.4L1193.4 234.5M1200.9 242.3L1198.3 243.8M1206.5 251.3L1203.3 253.1M1212.1 260.2L1208.3 262.5M1217.7 269.2L1213.2 271.8M1223.3 278.2L1218.2 281.1M1228.9 287.1L1223.1 290.4M1234.5 296.1L1228.1 299.8M1240.1 305.0L1233.0 309.1M1245.7 314.0L1238.0 318.4M1251.3 322.9L1243.0 327.7M1256.9 331.9L1247.9 337.1M1262.5 340.9L1252.9 346.4M1268.0 349.8L1257.8 355.7M1273.6 358.8L1262.8 365.0M1178.5 206.5L1178.5 402.5M1180.0 217.1L1177.0 217.1M1180.0 227.6L1177.0 227.6M1180.0 238.2L1177.0 238.2M1180.0 248.7L1177.0 248.7M1180.3 259.3L1176.7 259.3M1180.7 269.8L1176.3 269.8M1181.1 280.4L1175.9 280.4M1181.4 290.9L1175.6 290.9M1181.8 301.5L1175.2 301.5M1182.2 312.1L1174.8 312.1M1182.6 322.6L1174.4 322.6M1182.9 333.2L1174.1 333.2M1183.3 343.7L1173.7 343.7M1183.7 354.3L1173.3 354.3M1184.0 364.8L1173.0 364.8M1184.4 375.4L1172.6 375.4M1184.8 385.9L1172.2 385.9M1178.5 206.5L1083.5 371.0M1173.5 215.8L1172.9 215.5M1168.6 225.2L1167.3 224.4M1163.6 234.5L1161.7 233.4M1158.7 243.8L1156.1 242.3M1153.7 253.1L1150.5 251.3M1148.7 262.5L1144.9 260.2M1143.8 271.8L1139.3 269.2M1138.8 281.1L1133.7 278.2M1133.9 290.4L1128.1 287.1M1128.9 299.8L1122.5 296.1M1124.0 309.1L1116.9 305.0M1119.0 318.4L1111.3 314.0M1114.0 327.7L1105.7 322.9M1109.1 337.1L1100.1 331.9M1104.1 346.4L1094.5 340.9M1099.2 355.7L1089.0 349.8M1094.2 365.0L1083.4 358.8M1178.5 206.5L1014.0 301.5M1169.5 212.1L1169.2 211.5M1160.6 217.7L1159.8 216.4M1151.6 223.3L1150.5 221.4M1142.7 228.9L1141.2 226.3M1133.7 234.5L1131.9 231.3M1124.8 240.1L1122.5 236.3M1115.8 245.7L1113.2 241.2M1106.8 251.3L1103.9 246.2M1097.9 256.9L1094.6 251.1M1088.9 262.5L1085.2 256.1M1080.0 268.1L1075.9 261.0M1071.0 273.7L1066.6 266.0M1062.1 279.3L1057.3 271.0M1053.1 284.9L1047.9 275.9M1044.1 290.5L1038.6 280.9M1035.2 296.0L1029.3 285.8M1026.2 301.6L1020.0 290.8M1178.5 206.5L982.5 206.5M1167.9 208.0L1167.9 205.0M1157.4 208.0L1157.4 205.0M1146.8 208.0L1146.8 205.0M1136.3 208.0L1136.3 205.0M1125.7 208.3L1125.7 204.7M1115.2 208.7L1115.2 204.3M1104.6 209.1L1104.6 203.9M1094.1 209.4L1094.1 203.6M1083.5 209.8L1083.5 203.2M1072.9 210.2L1072.9 202.8M1062.4 210.6L1062.4 202.4M1051.8 210.9L1051.8 202.1M1041.3 211.3L1041.3 201.7M1030.7 211.7L1030.7 201.3M1020.2 212.0L1020.2 201.0M1009.6 212.4L1009.6 200.6M999.1 212.8L999.1 200.2M1178.5 206.5L1014.0 111.5M1169.2 201.5L1169.5 200.9M1159.8 196.6L1160.6 195.3M1150.5 191.6L1151.6 189.7M1141.2 186.7L1142.7 184.1M1131.9 181.7L1133.7 178.5M1122.5 176.7L1124.8 172.9M1113.2 171.8L1115.8 167.3M1103.9 166.8L1106.8 161.7M1094.6 161.9L1097.9 156.1M1085.2 156.9L1088.9 150.5M1075.9 152.0L1080.0 144.9M1066.6 147.0L1071.0 139.3M1057.3 142.0L1062.1 133.7M1047.9 137.1L1053.1 128.1M1038.6 132.1L1044.1 122.5M1029.3 127.2L1035.2 117.0M1020.0 122.2L1026.2 111.4M1178.5 206.5L1083.5 42.0M1172.9 197.5L1173.5 197.2M1167.3 188.6L1168.6 187.8M1161.7 179.6L1163.6 178.5M1156.1 170.7L1158.7 169.2M1150.5 161.7L1153.7 159.9M1144.9 152.8L1148.7 150.5M1139.3 143.8L1143.8 141.2M1133.7 134.8L1138.8 131.9M1128.1 125.9L1133.9 122.6M1122.5 116.9L1128.9 113.2M1116.9 108.0L1124.0 103.9M1111.3 99.0L1119.0 94.6M1105.7 90.1L1114.0 85.3M1100.1 81.1L1109.1 75.9M1094.5 72.1L1104.1 66.6M1089.0 63.2L1099.2 57.3M1083.4 54.2L1094.2 48.0M1178.5 19.5L1178.5 11.5M1194.8 20.2L1195.5 12.2M1211.0 22.3L1212.4 14.5M1226.9 25.9L1229.0 18.1M1242.5 30.8L1245.2 23.3M1257.5 37.0L1260.9 29.8M1272.0 44.6L1276.0 37.6M1285.8 53.3L1290.3 46.8M1298.7 63.2L1303.8 57.1M1310.7 74.3L1316.4 68.6M1321.8 86.3L1327.9 81.2M1331.7 99.2L1338.2 94.7M1340.4 113.0L1347.4 109.0M1348.0 127.5L1355.2 124.1M1354.2 142.5L1361.7 139.8M1359.1 158.1L1366.9 156.0M1362.7 174.0L1370.5 172.6M1364.8 190.2L1372.8 189.5M1365.5 206.5L1373.5 206.5M1364.8 222.8L1372.8 223.5M1362.7 239.0L1370.5 240.4M1359.1 254.9L1366.9 257.0M1354.2 270.5L1361.7 273.2M1348.0 285.5L1355.2 288.9M1340.4 300.0L1347.4 304.0M1331.7 313.8L1338.2 318.3M1321.8 326.7L1327.9 331.8M1310.7 338.7L1316.4 344.4M1298.7 349.8L1303.8 355.9M1285.8 359.7L1290.3 366.2M1272.0 368.4L1276.0 375.4M1257.5 376.0L1260.9 383.2M1242.5 382.2L1245.2 389.7M1226.9 387.1L1229.0 394.9M1211.0 390.7L1212.4 398.5M1194.8 392.8L1195.5 400.8M1178.5 393.5L1178.5 401.5M1162.2 392.8L1161.5 400.8M1146.0 390.7L1144.6 398.5M1130.1 387.1L1128.0 394.9M1114.5 382.2L1111.8 389.7M1099.5 376.0L1096.1 383.2M1085.0 368.4L1081.0 375.4M1071.2 359.7L1066.7 366.2M1058.3 349.8L1053.2 355.9M1046.3 338.7L1040.6 344.4M1035.2 326.7L1029.1 331.8M1025.3 313.8L1018.8 318.3M1016.6 300.0L1009.6 304.0M1009.0 285.5L1001.8 288.9M1002.8 270.5L995.3 273.2M997.9 254.9L990.1 257.0M994.3 239.0L986.5 240.4M992.2 222.8L984.2 223.5M991.5 206.5L983.5 206.5M992.2 190.2L984.2 189.5M994.3 174.0L986.5 172.6M997.9 158.1L990.1 156.0M1002.8 142.5L995.3 139.8M1009.0 127.5L1001.8 124.1M1016.6 113.0L1009.6 109.0M1025.3 99.2L1018.8 94.7M1035.2 86.3L1029.1 81.2M1046.3 74.3L1040.6 68.6M1058.3 63.2L1053.2 57.1M1071.2 53.3L1066.7 46.8M1085.0 44.6L1081.0 37.6M1099.5 37.0L1096.1 29.8M1114.5 30.8L1111.8 23.3M1130.1 25.9L1128.0 18.1M1146.0 22.3L1144.6 14.5M1162.2 20.2L1161.5 12.2"/>
<path fill="#fff" d="M1193 37h1v1h-1zM1207 39h1v1h-1zM1222 42h1v1h-1zM1236 47h1v1h-1zM1250 53h1v1h-1zM1263 59h1v1h-1zM1275 67h1v1h-1zM1287 76h1v1h-1zM1298 86h1v1h-1zM1308 97h1v1h-1zM1317 109h1v1h-1zM1325 121h1v1h-1zM1331 134h1v1h-1zM1337 148h1v1h-1zM1342 162h1v1h-1zM1345 177h1v1h-1zM1347 191h1v1h-1zM1347 221h1v1h-1zM1345 235h1v1h-1zM1342 250h1v1h-1zM1337 264h1v1h-1zM1331 278h1v1h-1zM1325 291h1v1h-1zM1317 303h1v1h-1zM1308 315h1v1h-1zM1298 326h1v1h-1zM1287 336h1v1h-1zM1275 345h1v1h-1zM1263 353h1v1h-1zM1250 359h1v1h-1zM1236 365h1v1h-1zM1222 370h1v1h-1zM1207 373h1v1h-1zM1193 375h1v1h-1zM1163 375h1v1h-1zM1149 373h1v1h-1zM1134 370h1v1h-1zM1120 365h1v1h-1zM1106 359h1v1h-1zM1093 353h1v1h-1zM1081 345h1v1h-1zM1069 336h1v1h-1zM1058 326h1v1h-1zM1048 315h1v1h-1zM1039 303h1v1h-1zM1031 291h1v1h-1zM1025 278h1v1h-1zM1019 264h1v1h-1zM1014 250h1v1h-1zM1011 235h1v1h-1zM1009 221h1v1h-1zM1009 191h1v1h-1zM1011 177h1v1h-1zM1014 162h1v1h-1zM1019 148h1v1h-1zM1025 134h1v1h-1zM1031 121h1v1h-1zM1039 109h1v1h-1zM1048 97h1v1h-1zM1058 86h1v1h-1zM1069 76h1v1h-1zM1081 67h1v1h-1zM1093 59h1v1h-1zM1106 53h1v1h-1zM1120 47h1v1h-1zM1134 42h1v1h-1zM1149 39h1v1h-1zM1163 37h1v1h-1z"/>
</svg>
<div class="t" style="left:11px;top:10px;color:#00ff00">UTC time OK</div>
<div class="t" style="left:11px;top:24px;color:#ffffff">21:48:59 UTC</div>
<div class="t" style="left:11px;top:38px;color:#ffffff">28 Jan 2011</div>
<div class="t" style="left:11px;top:52px;color:#ffffff">Week:  1620</div>
<div class="t" style="left:11px;top:66px;color:#ffffff">TOW: 510554</div>
<div class="t" style="left:11px;top:80px;color:#ffffff">UTC ofs: 15</div>
<div class="t" style="left:131px;top:10px;color:#00ff00">Phase locked</div>
<div class="t" style="left:131px;top:24px;color:#ffffff">DAC:   0.147343 V</div>
<div class="t" style="left:131px;top:38px;color:#ffffff">Temp: 35.750015 °C</div>
<div class="t" style="left:131px;top:52px;color:#ffffff">Osc    7.084610 ppt</div>
<div class="t" style="left:131px;top:66px;color:#ffffff">PPS  -36.781853 ns</div>
<div class="t" style="left:131px;top:80px;color:#ffffff">Dly:  61.000001 ns</div>
<div class="t" style="left:315px;top:10px;color:#5050ff">V3.00 Beta 15 Jan 2011</div>
<div class="t" style="left:315px;top:24px;color:#ffffff">App:  3.0   27 Jun 2002</div>
<div class="t" style="left:315px;top:38px;color:#ffffff">GPS: 10.2   14 Nov 2001</div>
<div class="t" style="left:315px;top:52px;color:#ffffff">Mfg: 08:00  20 May 2005</div>
<div class="t" style="left:315px;top:66px;color:#ffffff">Ser:  0.82362611  COM:2</div>
<div class="t" style="left:315px;top:80px;color:#ffffff">Log: OFF</div>
<div class="t" style="left:11px;top:108px;color:#00ff00">Overdetermined clock</div>
<div class="t" style="left:11px;top:122px;color:#ffffff">Lat:  54.4964928° N</div>
<div class="t" style="left:11px;top:136px;color:#ffffff">Lon:  18.4337848° E</div>
<div class="t" style="left:11px;top:150px;color:#ffffff">Alt: 204.46449176 m</div>
<div class="t" style="left:187px;top:108px;color:#ffffff">TC:   500.0 sec</div>
<div class="t" style="left:187px;top:122px;color:#ffffff">DAMP: 1.200</div>
<div class="t" style="left:187px;top:136px;color:#ffffff">GAIN:-5.000 Hz/V</div>
<div class="t" style="left:187px;top:150px;color:#ffffff">INIT: 0.000 V</div>
<div class="t" style="left:331px;top:108px;color:#ffffff">Discipline mode:</div>
<div class="t" style="left:331px;top:122px;color:#00ff00">Normal</div>
<div class="t" style="left:331px;top:136px;color:#00ff00">Holdover: 0 secs</div>
<div class="t" style="left:331px;top:150px;color:#00ff00">Doing fixes</div>
<div class="t" style="left:11px;top:178px;color:#ffffff">Jam sync threshold: 300.000 ns</div>
<div class="t" style="left:11px;top:192px;color:#ffffff">Max freq offset:     50.000 ppb</div>
<div class="t" style="left:11px;top:206px;color:#ffffff">Time constant:      500.000 secs</div>
<div class="t" style="left:11px;top:220px;color:#ffffff">Damping factor:       1.200</div>
<div class="t" style="left:11px;top:234px;color:#ffffff">Osc gain:            -5.000000 Hz/V</div>
<div class="t" style="left:11px;top:248px;color:#ffffff">Initial DAC voltage: +0.000000 V</div>
<div class="t" style="left:11px;top:262px;color:#ffffff">Min DAC voltage:     -5.000000 V</div>
<div class="t" style="left:11px;top:276px;color:#ffffff">Max DAC voltage:     +5.000000 V</div>
<div class="t" style="left:11px;top:304px;color:#ffffff">Osc drift rate: -1.770540e-009 parts/day</div>
<div class="t" style="left:11px;top:318px;color:#ffffff">Osc tempco:      7.780171e-009 parts/°C</div>
<div class="t" style="left:331px;top:178px;color:#ffffff">satellite max dBc:</div>
<div class="t" style="left:331px;top:192px;color:#ffffff">  01:  0 51 54 52 53</div>
<div class="t" style="left:331px;top:206px;color:#ffffff">  06: 52 53 53 53 53</div>
<div class="t" style="left:331px;top:220px;color:#ffffff">  11: 52 53 53 51 53</div>
<div class="t" style="left:331px;top:234px;color:#ffffff">  16: 51 52 52 52 53</div>
<div class="t" style="left:331px;top:248px;color:#ffffff">  21: 53 52 53 54 54</div>
<div class="t" style="left:331px;top:262px;color:#ffffff">  26: 53 52 52 53 53</div>
<div class="t" style="left:331px;top:276px;color:#ffffff">  31: 53 53</div>
<div class="t" style="left:531px;top:10px;color:#00ff00">ROM:    OK</div>
<div class="t" style="left:531px;top:24px;color:#00ff00">RAM:    OK</div>
<div class="t" style="left:531px;top:38px;color:#00ff00">OSC:    OK</div>
<div class="t" style="left:531px;top:52px;color:#00ff00">FPGA:   OK</div>
<div class="t" style="left:531px;top:66px;color:#00ff00">Power:  OK</div>
<div class="t" style="left:531px;top:94px;color:#00ff00">EEPROM  OK</div>
<div class="t" style="left:531px;top:108px;color:#00ff00">Antenna OK</div>
<div class="t" style="left:531px;top:122px;color:#00ff00">Almanac OK</div>
<div class="t" style="left:531px;top:136px;color:#00ff00">Discipline OK</div>
<div class="t" style="left:531px;top:150px;color:#00ff00">Saved posn OK</div>
<div class="t" style="left:531px;top:164px;color:#00ff00">Tracking sats</div>
<div class="t" style="left:531px;top:178px;color:#00ff00">Position saved</div>
<div class="t" style="left:531px;top:192px;color:#00ff00">No leap second</div>
<div class="t" style="left:531px;top:206px;color:#00ff00">Normal op mode</div>
<div class="t" style="left:531px;top:220px;color:#00ff00">Normal OSC age</div>
<div class="t" style="left:531px;top:248px;color:#00ff00">PPS: ON</div>
<div class="t" style="left:531px;top:276px;color:#ffffff">PV:      ON</div>
<div class="t" style="left:531px;top:290px;color:#ffffff">STATIC:  ON</div>
<div class="t" style="left:531px;top:304px;color:#ffffff">ALTITUDE:ON</div>
<div class="t" style="left:531px;top:318px;color:#808080">KALMAN:  N/A</div>
<div class="t" style="left:531px;top:346px;color:#ffffff">EL:  10.0°</div>
<div class="t" style="left:531px;top:360px;color:#ffffff">AMU:  4.0</div>
<div class="t" style="left:531px;top:416px;color:#ffffff">VIEW: 23.0 min</div>
<div class="t" style="left:531px;top:430px;color:#ffffff">VIEW: 1.0 min/div</div>
<div class="t" style="left:531px;top:444px;color:#ffffff">PLOTQ: 3.0 day</div>
<div class="t" style="left:531px;top:458px;color:#ffffff">ADEVQ: 33000 pts</div>
<div class="t" style="left:699px;top:10px;color:#5050ff">PPS ADEV over 54387 points</div>
<div class="t" style="left:699px;top:24px;color:#5050ff">    1 tau  7.9714e-011 (n=32998)</div>
<div class="t" style="left:699px;top:38px;color:#5050ff">    2 tau  7.1032e-011 (n=32996)</div>
<div class="t" style="left:699px;top:52px;color:#5050ff">    5 tau  7.2917e-011 (n=32990)</div>
<div class="t" style="left:699px;top:66px;color:#5050ff">   10 tau  7.1920e-011 (n=32980)</div>
<div class="t" style="left:699px;top:80px;color:#5050ff">   20 tau  6.4908e-011 (n=32960)</div>
<div class="t" style="left:699px;top:94px;color:#5050ff">   50 tau  4.4467e-011 (n=32900)</div>
<div class="t" style="left:699px;top:108px;color:#5050ff">  100 tau  3.0701e-011 (n=32800)</div>
<div class="t" style="left:699px;top:122px;color:#5050ff">  200 tau  1.8759e-011 (n=32600)</div>
<div class="t" style="left:699px;top:136px;color:#5050ff">  500 tau  9.3691e-012 (n=32000)</div>
<div class="t" style="left:699px;top:150px;color:#5050ff"> 1000 tau  7.9778e-012 (n=31000)</div>
<div class="t" style="left:699px;top:164px;color:#5050ff"> 2000 tau  7.1301e-012 (n=29000)</div>
<div class="t" style="left:699px;top:178px;color:#5050ff"> 5000 tau  4.5116e-012 (n=23000)</div>
<div class="t" style="left:699px;top:192px;color:#5050ff">10000 tau  3.4131e-012 (n=13000)</div>
<div class="t" style="left:699px;top:206px;color:#ff5050">OSC ADEV over 54387 points</div>
<div class="t" style="left:699px;top:220px;color:#ff5050">    1 tau  2.1103e-009 (n=32998)</div>
<div class="t" style="left:699px;top:234px;color:#ff5050">    2 tau  1.0479e-009 (n=32996)</div>
<div class="t" style="left:699px;top:248px;color:#ff5050">    5 tau  4.2609e-010 (n=32990)</div>
<div class="t" style="left:699px;top:262px;color:#ff5050">   10 tau  2.1745e-010 (n=32980)</div>
<div class="t" style="left:699px;top:276px;color:#ff5050">   20 tau  1.0612e-010 (n=32960)</div>
<div class="t" style="left:699px;top:290px;color:#ff5050">   50 tau  4.4746e-011 (n=32900)</div>
<div class="t" style="left:699px;top:304px;color:#ff5050">  100 tau  2.2733e-011 (n=32800)</div>
<div class="t" style="left:699px;top:318px;color:#ff5050">  200 tau  1.1820e-011 (n=32600)</div>
<div class="t" style="left:699px;top:332px;color:#ff5050">  500 tau  5.1034e-012 (n=32000)</div>
<div class="t" style="left:699px;top:346px;color:#ff5050"> 1000 tau  2.7620e-012 (n=31000)</div>
<div class="t" style="left:699px;top:360px;color:#ff5050"> 2000 tau  1.4735e-012 (n=29000)</div>
<div class="t" style="left:699px;top:374px;color:#ff5050"> 5000 tau  5.8596e-013 (n=23000)</div>
<div class="t" style="left:699px;top:388px;color:#ff5050">10000 tau  2.9014e-013 (n=13000)</div>
<div class="t" style="left:971px;top:10px;color:#909090">&lt;30 dBc</div>
<div class="t" style="left:971px;top:24px;color:#c00000">&gt;30 dBc</div>
<div class="t" style="left:971px;top:38px;color:#ff0000">&gt;32 dBc</div>
<div class="t" style="left:1331px;top:10px;color:#ff4848">&gt;34 dBc</div>
<div class="t" style="left:1331px;top:24px;color:#c08000">&gt;36 dBc</div>
<div class="t" style="left:1331px;top:38px;color:#ffff00">&gt;38 dBc</div>
<div class="t" style="left:971px;top:360px;color:#0000ff">&gt;40 dBc</div>
<div class="t" style="left:971px;top:374px;color:#5050ff">&gt;42 dBc</div>
<div class="t" style="left:971px;top:388px;color:#00ffff">&gt;44 dBc</div>
<div class="t" style="left:1331px;top:360px;color:#008000">&gt;46 dBc</div>
<div class="t" style="left:1331px;top:374px;color:#00ff00">&gt;48 dBc</div>
<div class="t" style="left:1331px;top:388px;color:#e0e0e0">&gt;50 dBc</div>
<div class="t" style="left:1075px;top:430px;color:#ffffff">Signal strength vs az/el</div>
<div class="t" style="left:1173px;top:-5px;color:#ffffff">N</div>
<div class="t" style="left:1173px;top:406px;color:#ffffff">S</div>
<div class="t" style="left:966px;top:201px;color:#ffffff">W</div>
<div class="t" style="left:1381px;top:201px;color:#ffffff">E</div>
<div class="t" style="left:339px;top:458px;color:#ffff00">rms: 35.750355 °C</div>
<div class="t" style="left:19px;top:472px;color:#ffffff">rms: 14.962790 ppt</div>
<div class="t" style="left:179px;top:472px;color:#ff00ff">rms:  43.761032 ns</div>
<div class="t" style="left:339px;top:472px;color:#00ff00">rms:  0.147334 V</div>
<div class="t" style="left:19px;top:500px;color:#ffffff">ref=&lt;0.0 ppt&gt;</div>
<div class="t" style="left:179px;top:500px;color:#ff00ff">ref=&lt;0.0 ns&gt;</div>
<div class="t" style="left:323px;top:500px;color:#00ff00">ref~&lt;0.147325 V&gt;</div>
<div class="t" style="left:483px;top:500px;color:#ffff00">ref~&lt;35.750 °C&gt;</div>
<div class="t" style="left:19px;top:514px;color:#ffffff">OSC=(100 ppt/div)</div>
<div class="t" style="left:179px;top:514px;color:#ff00ff">PPS~(10.0 ns/div)</div>
<div class="t" style="left:323px;top:514px;color:#00ff00">DAC~(5.0 uV/div)</div>
<div class="t" style="left:475px;top:514px;color:#ffff00">TEMP~(0.00 m°C/div)</div>
<div class="t" style="left:683px;top:514px;color:#5050ff">PPS ADEV</div>
<div class="t" style="left:803px;top:514px;color:#ff4040">OSC ADEV</div>
<div class="t" style="left:923px;top:514px;color:#00ffff">Sat count</div>
<svg width="1395" height="1034" style="left:0;top:0"><path fill="none" stroke="#fff" stroke-width="1.6" d="M156 56.5L159.5 52.8L163 56.5M159.5 53V61M156 70.5L159.5 66.8L163 70.5M159.5 67V75M7.5 514.5L4.2 518L7.5 521.5M4.5 518H11.5"/></svg>
</body></html>
